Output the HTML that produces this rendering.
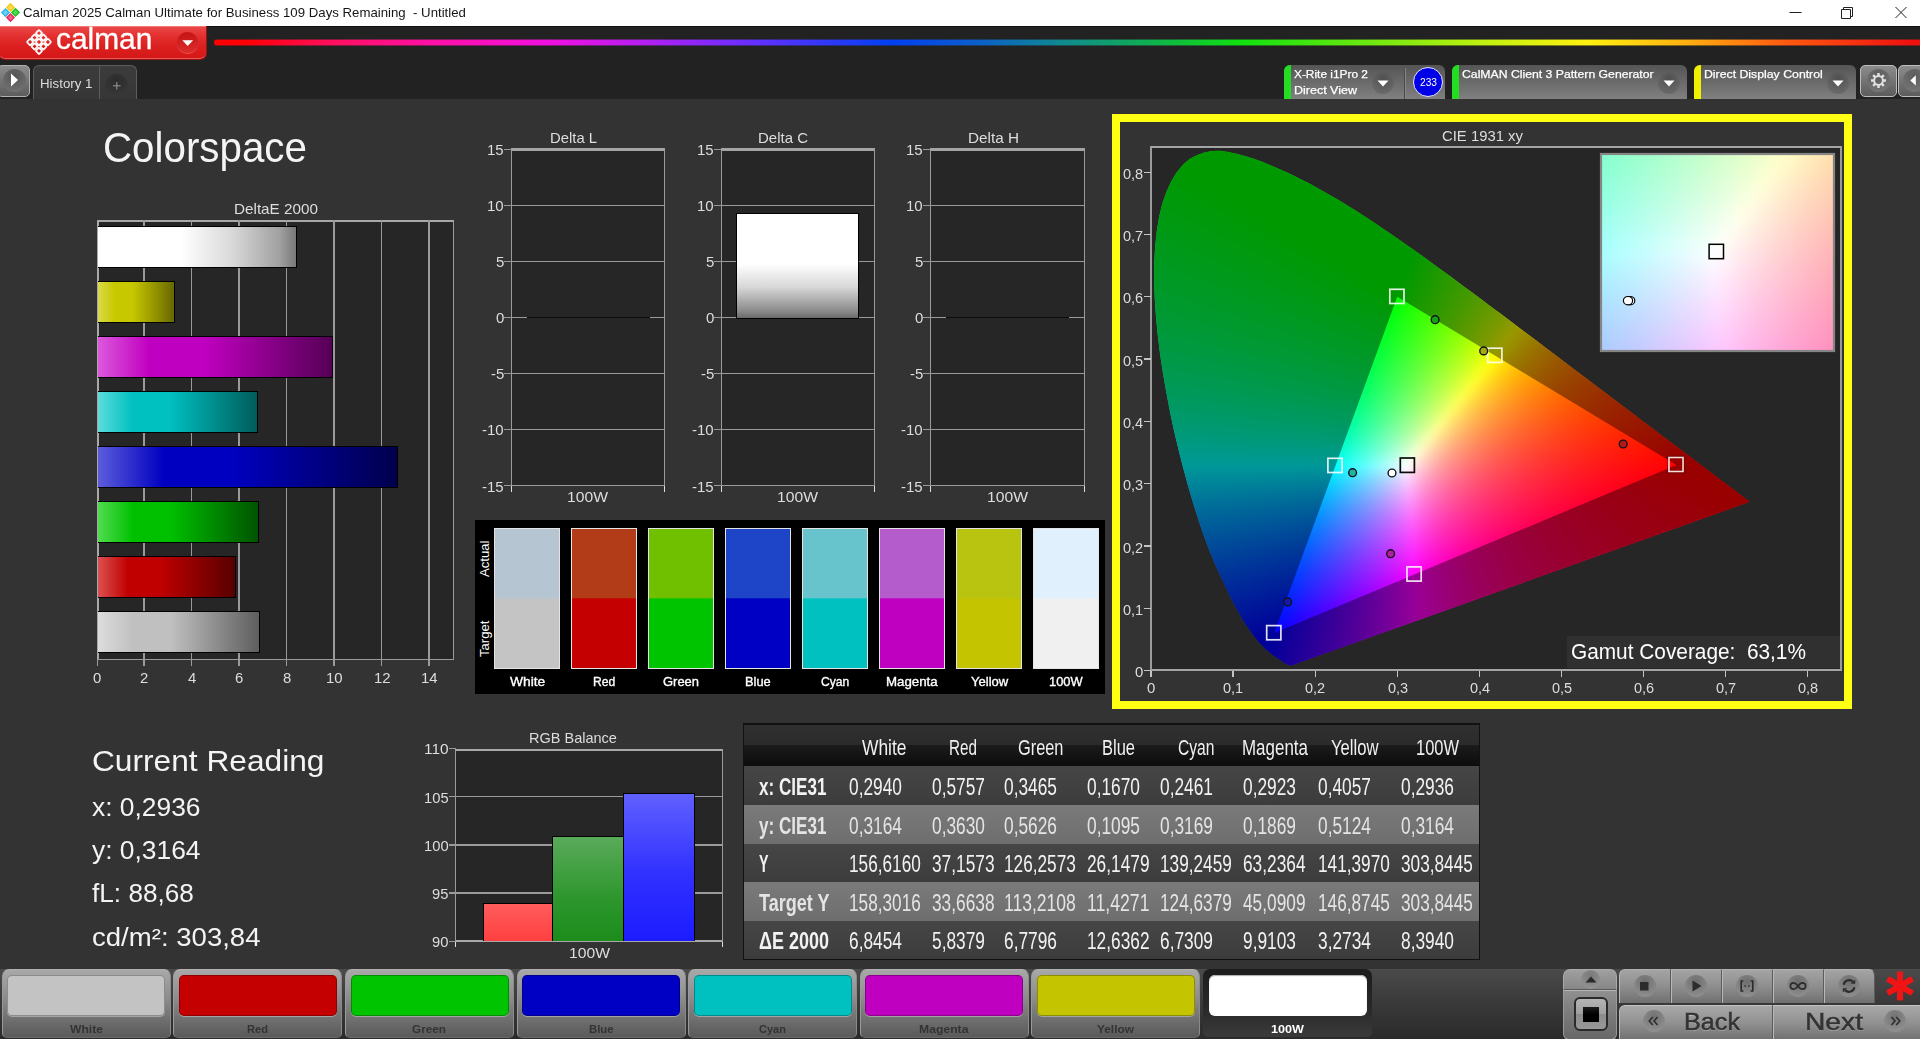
<!DOCTYPE html>
<html lang="en"><head><meta charset="utf-8"><title>Calman 2025 - Colorspace</title>
<style>
html,body{margin:0;padding:0}
body{width:1920px;height:1039px;overflow:hidden;background:#333;font-family:"Liberation Sans",sans-serif;position:relative}
.t{position:absolute;white-space:nowrap;line-height:1;transform-origin:0 0;display:block}
.a{position:absolute;display:block}
svg{position:absolute;display:block;overflow:visible}
</style></head>
<body>
<div class="a" style="left:0;top:0;width:1920px;height:26px;background:#fff"></div>
<svg style="left:0;top:0" width="24" height="26" viewBox="0 0 24 26"><path d="M10.5 2.8000000000000007L15.1 7.4L10.5 12.0L5.9 7.4Z" fill="#f6c81c"/><path d="M10.5 4.87L13.03 7.4L10.5 9.93L7.97 7.4Z" fill="#fadc50"/><path d="M5.5 8.0L10.1 12.6L5.5 17.2L0.9000000000000004 12.6Z" fill="#30b4ec"/><path d="M5.5 10.07L8.03 12.6L5.5 15.13L2.97 12.6Z" fill="#6cd0f4"/><path d="M15.5 7.800000000000001L20.1 12.4L15.5 17.0L10.9 12.4Z" fill="#20c028"/><path d="M15.5 9.87L18.03 12.4L15.5 14.93L12.97 12.4Z" fill="#50dc50"/><path d="M10.5 13.000000000000002L15.1 17.6L10.5 22.200000000000003L5.9 17.6Z" fill="#e82c5c"/><path d="M10.5 15.07L13.03 17.6L10.5 20.13L7.97 17.6Z" fill="#f4608c"/></svg>
<span class="t" style="left:23.3px;top:6.9px;font-size:12.57px;transform:scaleX(1.052);color:#161616;">Calman 2025 Calman Ultimate for Business 109 Days Remaining  - Untitled</span>
<svg style="left:1780px;top:0" width="140" height="26" viewBox="0 0 140 26" fill="none" stroke="#222" stroke-width="1"><path d="M9.5 12.5h12"/><path d="M61.5 9.5h9v9h-9z"/><path d="M63.5 9.5v-2h9v9h-2"/><path d="M115.5 7l11 11M126.5 7l-11 11"/></svg>
<div class="a" style="left:0;top:26px;width:1920px;height:73px;background:#222"></div>
<div class="a" style="left:0;top:26px;width:1920px;height:1px;background:#111"></div>
<div class="a" style="left:214px;top:39px;width:1706px;height:7px;background:linear-gradient(90deg,#ff0000 0px,#ff0008 36px,#ff1060 120px,#ff10a0 210px,#f010e0 335px,#b020f0 434px,#6030ff 546px,#0040f0 680px,#0c60c8 766px,#108890 846px,#10b050 936px,#10e010 1025px,#70e810 1159px,#c0f010 1271px,#fff010 1374px,#ffb010 1473px,#ff6010 1563px,#f01010 1697px,#f01010 1706px);opacity:.45;border-radius:3px 0 0 3px"></div>
<div class="a" style="left:214px;top:40px;width:1706px;height:5px;background:linear-gradient(90deg,#ff0000 0px,#ff0008 36px,#ff1060 120px,#ff10a0 210px,#f010e0 335px,#b020f0 434px,#6030ff 546px,#0040f0 680px,#0c60c8 766px,#108890 846px,#10b050 936px,#10e010 1025px,#70e810 1159px,#c0f010 1271px,#fff010 1374px,#ffb010 1473px,#ff6010 1563px,#f01010 1697px,#f01010 1706px);border-radius:3px 0 0 3px"></div>
<div class="a" style="left:-2px;top:26px;width:209px;height:33.8px;box-sizing:border-box;background:linear-gradient(#ec4a4a,#e43030 30%,#dc2020 60%,#d41616);border:1px solid #9c1010;border-top:none;border-radius:0 0 7px 7px;box-shadow:inset 0 1px 0 #f47878,inset 0 -1px 0 #e45c5c"></div>
<svg style="left:23.8px;top:27px" width="30" height="30" viewBox="-15 -15 30 30"><g transform="rotate(45)" fill="none" stroke="#fff" stroke-width="1.75"><rect x="-8.60" y="-8.60" width="4.6" height="4.6" rx="0.7"/><rect x="-8.60" y="-2.30" width="4.6" height="4.6" rx="0.7"/><rect x="-8.60" y="4.00" width="4.6" height="4.6" rx="0.7"/><rect x="-2.30" y="-8.60" width="4.6" height="4.6" rx="0.7"/><rect x="-2.30" y="-2.30" width="4.6" height="4.6" rx="0.7"/><rect x="-2.30" y="4.00" width="4.6" height="4.6" rx="0.7"/><rect x="4.00" y="-8.60" width="4.6" height="4.6" rx="0.7"/><rect x="4.00" y="-2.30" width="4.6" height="4.6" rx="0.7"/><rect x="4.00" y="4.00" width="4.6" height="4.6" rx="0.7"/></g></svg>
<span class="t" style="left:56.3px;top:25.2px;font-size:28.67px;transform:scaleX(1.042);color:#fff;-webkit-text-stroke:0.3px #fff;">calman</span>
<div class="a" style="left:177px;top:31.5px;width:21px;height:21px;border-radius:50%;background:linear-gradient(#c41414,#dc2c2c);box-shadow:0 1px 0 #ec5454"></div>
<svg style="left:182px;top:39.5px" width="12" height="7"><path d="M0.3 0.3h10.8l-5.4 5.6z" fill="#fff"/></svg>
<div class="a" style="left:-3px;top:65px;width:33.4px;height:31.8px;box-sizing:border-box;border:1.5px solid #b0b0b0;border-radius:5px;background:linear-gradient(#8c8c8c,#5c5c5c)"></div>
<div class="a" style="left:3px;top:69px;width:23px;height:23px;border-radius:50%;background:radial-gradient(circle at 50% 30%,#555,#777)"></div>
<svg style="left:10px;top:73px" width="10" height="14"><path d="M1 0.5v13l7-6.5z" fill="#fff"/></svg>
<div class="a" style="left:32.8px;top:65px;width:104.2px;height:34.2px;box-sizing:border-box;border:1.6px solid #5c5c5c;border-bottom:none;border-radius:6px 6px 0 0;background:linear-gradient(#3c3c3c,#363636)"></div>
<div class="a" style="left:98.5px;top:66px;width:1.6px;height:33px;background:#5c5c5c"></div>
<span class="t" style="left:40.0px;top:77.0px;font-size:13.27px;transform:scaleX(1.003);color:#ddd;">History 1</span>
<div class="a" style="left:105px;top:74px;width:23px;height:23px;border-radius:50%;background:radial-gradient(circle at 50% 30%,#2c2c2c,#3a3a3a)"></div>
<svg style="left:112.8px;top:81.7px" width="8" height="8" stroke="#9a9a9a" stroke-width="1"><path d="M3.8 0v7.6M0 3.8h7.6"/></svg>
<div class="a" style="left:1284px;top:65px;width:161px;height:34px;border-radius:6px 6px 0 0;background:linear-gradient(#555,#6a6a6a 50%,#808080);overflow:hidden"><div class="a" style="left:0;top:0;width:7px;height:34px;background:#22dd22"></div></div><div class="a" style="left:1372px;top:71.5px;width:22px;height:22px;border-radius:50%;background:radial-gradient(circle at 50% 30%,#505050,#707070)"></div><svg style="left:1377px;top:80px" width="12" height="7"><path d="M0.5 0.5h11l-5.5 6z" fill="#fff"/></svg>
<div class="a" style="left:1404px;top:68px;width:1px;height:31px;background:#4a4a4a"></div>
<div class="a" style="left:1405px;top:68px;width:1px;height:31px;background:#858585"></div>
<span class="t" style="left:1294.0px;top:68.7px;font-size:11.17px;transform:scaleX(1.064);color:#fff;-webkit-text-stroke:0.25px #fff;">X-Rite i1Pro 2</span>
<span class="t" style="left:1294.0px;top:85.1px;font-size:11.17px;transform:scaleX(1.119);color:#fff;-webkit-text-stroke:0.25px #fff;">Direct View</span>
<div class="a" style="left:1413px;top:67px;width:30px;height:30px;box-sizing:border-box;border-radius:50%;background:#0000e6;border:1.5px solid #e8e8ff"></div>
<span class="t" style="left:1419.5px;top:76.5px;font-size:11.17px;transform:scaleX(0.912);color:#fff;">233</span>
<div class="a" style="left:1452px;top:65px;width:235px;height:34px;border-radius:6px 6px 0 0;background:linear-gradient(#555,#6a6a6a 50%,#808080);overflow:hidden"><div class="a" style="left:0;top:0;width:7px;height:34px;background:#22dd22"></div></div><div class="a" style="left:1658px;top:71.5px;width:22px;height:22px;border-radius:50%;background:radial-gradient(circle at 50% 30%,#505050,#707070)"></div><svg style="left:1663px;top:80px" width="12" height="7"><path d="M0.5 0.5h11l-5.5 6z" fill="#fff"/></svg>
<span class="t" style="left:1462.0px;top:68.7px;font-size:11.17px;transform:scaleX(1.096);color:#fff;-webkit-text-stroke:0.25px #fff;">CalMAN Client 3 Pattern Generator</span>
<div class="a" style="left:1694px;top:65px;width:162px;height:34px;border-radius:6px 6px 0 0;background:linear-gradient(#555,#6a6a6a 50%,#808080);overflow:hidden"><div class="a" style="left:0;top:0;width:7px;height:34px;background:#f0f000"></div></div><div class="a" style="left:1827px;top:71.5px;width:22px;height:22px;border-radius:50%;background:radial-gradient(circle at 50% 30%,#505050,#707070)"></div><svg style="left:1832px;top:80px" width="12" height="7"><path d="M0.5 0.5h11l-5.5 6z" fill="#fff"/></svg>
<span class="t" style="left:1704.0px;top:68.7px;font-size:11.17px;transform:scaleX(1.101);color:#fff;-webkit-text-stroke:0.25px #fff;">Direct Display Control</span>
<div class="a" style="left:1860px;top:65px;width:37px;height:32px;box-sizing:border-box;border:1px solid #bdbdbd;border-radius:5px;background:linear-gradient(#8c8c8c,#5c5c5c)"></div>
<div class="a" style="left:1867px;top:69px;width:23px;height:23px;border-radius:50%;background:radial-gradient(circle at 50% 30%,#5c5c5c,#7a7a7a)"></div>
<svg style="left:1868px;top:70px" width="21" height="21" viewBox="-10.5 -10.5 21 21"><g fill="#e0e0e0"><rect x="-1.25" y="-7.5" width="2.5" height="3.4" transform="rotate(0)"/><rect x="-1.25" y="-7.5" width="2.5" height="3.4" transform="rotate(45)"/><rect x="-1.25" y="-7.5" width="2.5" height="3.4" transform="rotate(90)"/><rect x="-1.25" y="-7.5" width="2.5" height="3.4" transform="rotate(135)"/><rect x="-1.25" y="-7.5" width="2.5" height="3.4" transform="rotate(180)"/><rect x="-1.25" y="-7.5" width="2.5" height="3.4" transform="rotate(225)"/><rect x="-1.25" y="-7.5" width="2.5" height="3.4" transform="rotate(270)"/><rect x="-1.25" y="-7.5" width="2.5" height="3.4" transform="rotate(315)"/></g><circle r="4.4" fill="none" stroke="#e0e0e0" stroke-width="2"/></svg>
<div class="a" style="left:1898px;top:65px;width:30px;height:32px;box-sizing:border-box;border:1px solid #bdbdbd;border-radius:5px;background:linear-gradient(#8c8c8c,#5c5c5c)"></div>
<div class="a" style="left:1903px;top:69px;width:23px;height:23px;border-radius:50%;background:radial-gradient(circle at 50% 30%,#5c5c5c,#7a7a7a)"></div>
<svg style="left:1910.3px;top:75.3px" width="7" height="11"><path d="M5.8 0.3v10.2l-5.5-5.1z" fill="#fff"/></svg>
<span class="t" style="left:103.0px;top:127.0px;font-size:41.62px;transform:scaleX(0.969);color:#f4f4f4;">Colorspace</span>
<span class="t" style="left:233.8px;top:202.2px;font-size:14.94px;transform:scaleX(1.021);color:#ddd;">DeltaE 2000</span>
<div class="a" style="left:97px;top:220px;width:357px;height:440px;background:#262626;box-sizing:border-box;border:1px solid #9a9a9a;border-top:2px solid #a8a8a8;border-left:2px solid #a8a8a8"></div>
<div class="a" style="left:143.2px;top:220px;width:1.5px;height:446px;background:#9a9a9a"></div>
<div class="a" style="left:190.8px;top:220px;width:1.5px;height:446px;background:#9a9a9a"></div>
<div class="a" style="left:238.2px;top:220px;width:1.5px;height:446px;background:#9a9a9a"></div>
<div class="a" style="left:285.8px;top:220px;width:1.5px;height:446px;background:#9a9a9a"></div>
<div class="a" style="left:333.2px;top:220px;width:1.5px;height:446px;background:#9a9a9a"></div>
<div class="a" style="left:380.8px;top:220px;width:1.5px;height:446px;background:#9a9a9a"></div>
<div class="a" style="left:428.2px;top:220px;width:1.5px;height:446px;background:#9a9a9a"></div>
<div class="a" style="left:97px;top:659px;width:1px;height:7px;background:#9a9a9a"></div>
<span class="t" style="left:92.6px;top:670.2px;font-size:15.36px;transform:scaleX(0.971);color:#ddd;">0</span>
<span class="t" style="left:140.2px;top:670.2px;font-size:15.36px;transform:scaleX(0.971);color:#ddd;">2</span>
<span class="t" style="left:187.7px;top:670.2px;font-size:15.36px;transform:scaleX(0.971);color:#ddd;">4</span>
<span class="t" style="left:235.2px;top:670.2px;font-size:15.36px;transform:scaleX(0.971);color:#ddd;">6</span>
<span class="t" style="left:282.7px;top:670.2px;font-size:15.36px;transform:scaleX(0.971);color:#ddd;">8</span>
<span class="t" style="left:326.0px;top:670.2px;font-size:15.36px;transform:scaleX(0.971);color:#ddd;">10</span>
<span class="t" style="left:373.5px;top:670.2px;font-size:15.36px;transform:scaleX(0.971);color:#ddd;">12</span>
<span class="t" style="left:421.0px;top:670.2px;font-size:15.36px;transform:scaleX(0.971);color:#ddd;">14</span>
<div class="a" style="left:98px;top:226.0px;width:199.1px;height:42.3px;box-sizing:border-box;border:1.8px solid #000;border-left:none;background:linear-gradient(90deg,#fff 0%,#fff 42%,#d8d8d8 68%,#a0a0a0 92%,#787878 100%)"></div>
<div class="a" style="left:98px;top:281.0px;width:77.4px;height:42.3px;box-sizing:border-box;border:1.8px solid #000;border-left:none;background:linear-gradient(90deg,#dada4c 0%,#c8c800 22%,#c8c800 45%,#686800 100%)"></div>
<div class="a" style="left:98px;top:336.0px;width:235.1px;height:42.3px;box-sizing:border-box;border:1.8px solid #000;border-left:none;background:linear-gradient(90deg,#dc58dc 0%,#c000c0 22%,#c000c0 45%,#560056 100%)"></div>
<div class="a" style="left:98px;top:391.0px;width:159.6px;height:42.3px;box-sizing:border-box;border:1.8px solid #000;border-left:none;background:linear-gradient(90deg,#5cdcdc 0%,#00c0c0 22%,#00c0c0 45%,#005c5c 100%)"></div>
<div class="a" style="left:98px;top:446.0px;width:299.8px;height:42.3px;box-sizing:border-box;border:1.8px solid #000;border-left:none;background:linear-gradient(90deg,#5c5cdc 0%,#0000c0 22%,#0000c0 45%,#00004c 100%)"></div>
<div class="a" style="left:98px;top:501.0px;width:160.7px;height:42.3px;box-sizing:border-box;border:1.8px solid #000;border-left:none;background:linear-gradient(90deg,#50dc50 0%,#00c000 22%,#00c000 45%,#005400 100%)"></div>
<div class="a" style="left:98px;top:556.0px;width:138.4px;height:42.3px;box-sizing:border-box;border:1.8px solid #000;border-left:none;background:linear-gradient(90deg,#dc5050 0%,#c00000 22%,#c00000 45%,#580000 100%)"></div>
<div class="a" style="left:98px;top:611.0px;width:162.3px;height:42.3px;box-sizing:border-box;border:1.8px solid #000;border-left:none;background:linear-gradient(90deg,#dcdcdc 0%,#c0c0c0 22%,#c0c0c0 45%,#5e5e5e 100%)"></div>
<span class="t" style="left:92.0px;top:745.8px;font-size:29.33px;transform:scaleX(1.080);color:#f4f4f4;">Current Reading</span>
<span class="t" style="left:92.0px;top:794.9px;font-size:25.14px;transform:scaleX(1.050);color:#f4f4f4;">x: 0,2936</span>
<span class="t" style="left:92.0px;top:838.2px;font-size:25.14px;transform:scaleX(1.050);color:#f4f4f4;">y: 0,3164</span>
<span class="t" style="left:92.0px;top:881.2px;font-size:25.14px;transform:scaleX(1.042);color:#f4f4f4;">fL: 88,68</span>
<span class="t" style="left:92.0px;top:924.7px;font-size:25.14px;transform:scaleX(1.097);color:#f4f4f4;">cd/m²: 303,84</span>
<span class="t" style="left:529.0px;top:731.1px;font-size:14.80px;transform:scaleX(0.981);color:#ddd;">RGB Balance</span>
<div class="a" style="left:455px;top:749px;width:268px;height:193px;background:#262626;box-sizing:border-box;border:1px solid #9a9a9a;border-top:2px solid #a8a8a8;border-bottom:2px solid #a8a8a8"></div>
<div class="a" style="left:455px;top:892.4px;width:268px;height:1.4px;background:#9a9a9a"></div>
<div class="a" style="left:455px;top:844.2px;width:268px;height:1.4px;background:#9a9a9a"></div>
<div class="a" style="left:455px;top:796.0px;width:268px;height:1.4px;background:#9a9a9a"></div>
<div class="a" style="left:449px;top:940.5px;width:7px;height:1.4px;background:#9a9a9a"></div>
<span class="t" style="left:432.1px;top:934.0px;font-size:15.08px;transform:scaleX(0.977);color:#ddd;">90</span>
<div class="a" style="left:449px;top:892.4px;width:7px;height:1.4px;background:#9a9a9a"></div>
<span class="t" style="left:432.1px;top:885.9px;font-size:15.08px;transform:scaleX(0.977);color:#ddd;">95</span>
<div class="a" style="left:449px;top:844.2px;width:7px;height:1.4px;background:#9a9a9a"></div>
<span class="t" style="left:423.9px;top:837.7px;font-size:15.08px;transform:scaleX(0.977);color:#ddd;">100</span>
<div class="a" style="left:449px;top:796.0px;width:7px;height:1.4px;background:#9a9a9a"></div>
<span class="t" style="left:423.9px;top:789.6px;font-size:15.08px;transform:scaleX(0.977);color:#ddd;">105</span>
<div class="a" style="left:449px;top:747.9px;width:7px;height:1.4px;background:#9a9a9a"></div>
<span class="t" style="left:423.9px;top:741.4px;font-size:15.08px;transform:scaleX(1.023);color:#ddd;">110</span>
<div class="a" style="left:455px;top:942px;width:1px;height:5px;background:#ddd"></div>
<div class="a" style="left:722px;top:942px;width:1px;height:5px;background:#ddd"></div>
<span class="t" style="left:568.8px;top:946.3px;font-size:14.94px;transform:scaleX(1.050);color:#ddd;">100W</span>
<div class="a" style="left:482.5px;top:903px;width:70.0px;height:37.5px;box-sizing:border-box;border:1.5px solid #000;border-bottom:none;background:linear-gradient(#ff5c5c,#ff4040)"></div>
<div class="a" style="left:551.5px;top:836px;width:72.5px;height:104.5px;box-sizing:border-box;border:1.5px solid #000;border-bottom:none;background:linear-gradient(#5aaa5a,#2c962c 60%,#1c8c1c)"></div>
<div class="a" style="left:623px;top:793px;width:72.0px;height:147.5px;box-sizing:border-box;border:1.5px solid #000;border-bottom:none;background:linear-gradient(#6060ff,#3030ff 55%,#1c1cff)"></div>
<span class="t" style="left:550.0px;top:130.5px;font-size:14.94px;transform:scaleX(0.993);color:#ddd;">Delta L</span>
<div class="a" style="left:511px;top:148px;width:154px;height:338px;background:#262626;box-sizing:border-box;border:1.6px solid #9a9a9a;border-top:3px solid #a4a4a4"></div>
<div class="a" style="left:511px;top:429.0px;width:154px;height:1.4px;background:#9a9a9a"></div>
<div class="a" style="left:511px;top:372.9px;width:154px;height:1.4px;background:#9a9a9a"></div>
<div class="a" style="left:511px;top:316.8px;width:154px;height:1.4px;background:#9a9a9a"></div>
<div class="a" style="left:511px;top:260.7px;width:154px;height:1.4px;background:#9a9a9a"></div>
<div class="a" style="left:511px;top:204.6px;width:154px;height:1.4px;background:#9a9a9a"></div>
<div class="a" style="left:504px;top:485.1px;width:8px;height:1.4px;background:#9a9a9a"></div>
<span class="t" style="left:482.1px;top:478.5px;font-size:15.08px;transform:scaleX(0.994);color:#ddd;">-15</span>
<div class="a" style="left:504px;top:429.0px;width:8px;height:1.4px;background:#9a9a9a"></div>
<span class="t" style="left:482.1px;top:422.4px;font-size:15.08px;transform:scaleX(0.994);color:#ddd;">-10</span>
<div class="a" style="left:504px;top:372.9px;width:8px;height:1.4px;background:#9a9a9a"></div>
<span class="t" style="left:490.5px;top:366.3px;font-size:15.08px;transform:scaleX(0.994);color:#ddd;">-5</span>
<div class="a" style="left:504px;top:316.8px;width:8px;height:1.4px;background:#9a9a9a"></div>
<span class="t" style="left:495.5px;top:310.2px;font-size:15.08px;transform:scaleX(0.994);color:#ddd;">0</span>
<div class="a" style="left:504px;top:260.7px;width:8px;height:1.4px;background:#9a9a9a"></div>
<span class="t" style="left:495.5px;top:254.1px;font-size:15.08px;transform:scaleX(0.994);color:#ddd;">5</span>
<div class="a" style="left:504px;top:204.6px;width:8px;height:1.4px;background:#9a9a9a"></div>
<span class="t" style="left:487.1px;top:198.0px;font-size:15.08px;transform:scaleX(0.994);color:#ddd;">10</span>
<div class="a" style="left:504px;top:148.5px;width:8px;height:1.4px;background:#9a9a9a"></div>
<span class="t" style="left:487.1px;top:141.9px;font-size:15.08px;transform:scaleX(0.994);color:#ddd;">15</span>
<div class="a" style="left:511px;top:486px;width:1px;height:6px;background:#ddd"></div>
<div class="a" style="left:664px;top:486px;width:1px;height:6px;background:#ddd"></div>
<span class="t" style="left:567.0px;top:489.5px;font-size:14.80px;transform:scaleX(1.060);color:#ddd;">100W</span>
<div class="a" style="left:526.5px;top:316.7px;width:123px;height:1.6px;background:#0c0c0c"></div>
<span class="t" style="left:758.0px;top:130.5px;font-size:14.94px;transform:scaleX(1.003);color:#ddd;">Delta C</span>
<div class="a" style="left:721px;top:148px;width:154px;height:338px;background:#262626;box-sizing:border-box;border:1.6px solid #9a9a9a;border-top:3px solid #a4a4a4"></div>
<div class="a" style="left:721px;top:429.0px;width:154px;height:1.4px;background:#9a9a9a"></div>
<div class="a" style="left:721px;top:372.9px;width:154px;height:1.4px;background:#9a9a9a"></div>
<div class="a" style="left:721px;top:316.8px;width:154px;height:1.4px;background:#9a9a9a"></div>
<div class="a" style="left:721px;top:260.7px;width:154px;height:1.4px;background:#9a9a9a"></div>
<div class="a" style="left:721px;top:204.6px;width:154px;height:1.4px;background:#9a9a9a"></div>
<div class="a" style="left:714px;top:485.1px;width:8px;height:1.4px;background:#9a9a9a"></div>
<span class="t" style="left:692.1px;top:478.5px;font-size:15.08px;transform:scaleX(0.994);color:#ddd;">-15</span>
<div class="a" style="left:714px;top:429.0px;width:8px;height:1.4px;background:#9a9a9a"></div>
<span class="t" style="left:692.1px;top:422.4px;font-size:15.08px;transform:scaleX(0.994);color:#ddd;">-10</span>
<div class="a" style="left:714px;top:372.9px;width:8px;height:1.4px;background:#9a9a9a"></div>
<span class="t" style="left:700.5px;top:366.3px;font-size:15.08px;transform:scaleX(0.994);color:#ddd;">-5</span>
<div class="a" style="left:714px;top:316.8px;width:8px;height:1.4px;background:#9a9a9a"></div>
<span class="t" style="left:705.5px;top:310.2px;font-size:15.08px;transform:scaleX(0.994);color:#ddd;">0</span>
<div class="a" style="left:714px;top:260.7px;width:8px;height:1.4px;background:#9a9a9a"></div>
<span class="t" style="left:705.5px;top:254.1px;font-size:15.08px;transform:scaleX(0.994);color:#ddd;">5</span>
<div class="a" style="left:714px;top:204.6px;width:8px;height:1.4px;background:#9a9a9a"></div>
<span class="t" style="left:697.1px;top:198.0px;font-size:15.08px;transform:scaleX(0.994);color:#ddd;">10</span>
<div class="a" style="left:714px;top:148.5px;width:8px;height:1.4px;background:#9a9a9a"></div>
<span class="t" style="left:697.1px;top:141.9px;font-size:15.08px;transform:scaleX(0.994);color:#ddd;">15</span>
<div class="a" style="left:721px;top:486px;width:1px;height:6px;background:#ddd"></div>
<div class="a" style="left:874px;top:486px;width:1px;height:6px;background:#ddd"></div>
<span class="t" style="left:777.0px;top:489.5px;font-size:14.80px;transform:scaleX(1.060);color:#ddd;">100W</span>
<div class="a" style="left:736px;top:212.6px;width:123px;height:106px;box-sizing:border-box;border:1.6px solid #000;background:linear-gradient(#fff 0%,#fff 48%,#d8d8d8 70%,#8c8c8c 93%,#6a6a6a 100%)"></div>
<span class="t" style="left:967.5px;top:130.5px;font-size:14.94px;transform:scaleX(1.023);color:#ddd;">Delta H</span>
<div class="a" style="left:930px;top:148px;width:155px;height:338px;background:#262626;box-sizing:border-box;border:1.6px solid #9a9a9a;border-top:3px solid #a4a4a4"></div>
<div class="a" style="left:930px;top:429.0px;width:155px;height:1.4px;background:#9a9a9a"></div>
<div class="a" style="left:930px;top:372.9px;width:155px;height:1.4px;background:#9a9a9a"></div>
<div class="a" style="left:930px;top:316.8px;width:155px;height:1.4px;background:#9a9a9a"></div>
<div class="a" style="left:930px;top:260.7px;width:155px;height:1.4px;background:#9a9a9a"></div>
<div class="a" style="left:930px;top:204.6px;width:155px;height:1.4px;background:#9a9a9a"></div>
<div class="a" style="left:923px;top:485.1px;width:8px;height:1.4px;background:#9a9a9a"></div>
<span class="t" style="left:901.1px;top:478.5px;font-size:15.08px;transform:scaleX(0.994);color:#ddd;">-15</span>
<div class="a" style="left:923px;top:429.0px;width:8px;height:1.4px;background:#9a9a9a"></div>
<span class="t" style="left:901.1px;top:422.4px;font-size:15.08px;transform:scaleX(0.994);color:#ddd;">-10</span>
<div class="a" style="left:923px;top:372.9px;width:8px;height:1.4px;background:#9a9a9a"></div>
<span class="t" style="left:909.5px;top:366.3px;font-size:15.08px;transform:scaleX(0.994);color:#ddd;">-5</span>
<div class="a" style="left:923px;top:316.8px;width:8px;height:1.4px;background:#9a9a9a"></div>
<span class="t" style="left:914.5px;top:310.2px;font-size:15.08px;transform:scaleX(0.994);color:#ddd;">0</span>
<div class="a" style="left:923px;top:260.7px;width:8px;height:1.4px;background:#9a9a9a"></div>
<span class="t" style="left:914.5px;top:254.1px;font-size:15.08px;transform:scaleX(0.994);color:#ddd;">5</span>
<div class="a" style="left:923px;top:204.6px;width:8px;height:1.4px;background:#9a9a9a"></div>
<span class="t" style="left:906.1px;top:198.0px;font-size:15.08px;transform:scaleX(0.994);color:#ddd;">10</span>
<div class="a" style="left:923px;top:148.5px;width:8px;height:1.4px;background:#9a9a9a"></div>
<span class="t" style="left:906.1px;top:141.9px;font-size:15.08px;transform:scaleX(0.994);color:#ddd;">15</span>
<div class="a" style="left:930px;top:486px;width:1px;height:6px;background:#ddd"></div>
<div class="a" style="left:1084px;top:486px;width:1px;height:6px;background:#ddd"></div>
<span class="t" style="left:986.5px;top:489.5px;font-size:14.80px;transform:scaleX(1.060);color:#ddd;">100W</span>
<div class="a" style="left:945.5px;top:316.7px;width:123px;height:1.6px;background:#0c0c0c"></div>
<div class="a" style="left:475px;top:520px;width:630px;height:174px;background:#000"></div>
<div class="a" style="left:494px;top:527.8px;width:66.2px;height:141.2px;box-sizing:border-box;border:1.5px solid #e4e4e4;background:linear-gradient(#b5c5d1 0%,#b5c5d1 49.3%,#c4c4c4 50.3%,#c4c4c4 100%)"></div>
<span class="t" style="left:509.6px;top:674.6px;font-size:12.99px;transform:scaleX(1.063);color:#fff;-webkit-text-stroke:0.35px #fff;">White</span>
<div class="a" style="left:571px;top:527.8px;width:66.2px;height:141.2px;box-sizing:border-box;border:1.5px solid #e4e4e4;background:linear-gradient(#b23c18 0%,#b23c18 49.3%,#c40000 50.3%,#c40000 100%)"></div>
<span class="t" style="left:593.1px;top:674.6px;font-size:12.99px;transform:scaleX(0.936);color:#fff;-webkit-text-stroke:0.35px #fff;">Red</span>
<div class="a" style="left:648px;top:527.8px;width:66.2px;height:141.2px;box-sizing:border-box;border:1.5px solid #e4e4e4;background:linear-gradient(#70c000 0%,#70c000 49.3%,#00c400 50.3%,#00c400 100%)"></div>
<span class="t" style="left:663.2px;top:674.6px;font-size:12.99px;transform:scaleX(0.997);color:#fff;-webkit-text-stroke:0.35px #fff;">Green</span>
<div class="a" style="left:725px;top:527.8px;width:66.2px;height:141.2px;box-sizing:border-box;border:1.5px solid #e4e4e4;background:linear-gradient(#1e44c8 0%,#1e44c8 49.3%,#0000c4 50.3%,#0000c4 100%)"></div>
<span class="t" style="left:745.4px;top:674.6px;font-size:12.99px;transform:scaleX(0.989);color:#fff;-webkit-text-stroke:0.35px #fff;">Blue</span>
<div class="a" style="left:802px;top:527.8px;width:66.2px;height:141.2px;box-sizing:border-box;border:1.5px solid #e4e4e4;background:linear-gradient(#68c4cc 0%,#68c4cc 49.3%,#00c0c0 50.3%,#00c0c0 100%)"></div>
<span class="t" style="left:821.1px;top:674.6px;font-size:12.99px;transform:scaleX(0.933);color:#fff;-webkit-text-stroke:0.35px #fff;">Cyan</span>
<div class="a" style="left:879px;top:527.8px;width:66.2px;height:141.2px;box-sizing:border-box;border:1.5px solid #e4e4e4;background:linear-gradient(#b45ccc 0%,#b45ccc 49.3%,#c000c0 50.3%,#c000c0 100%)"></div>
<span class="t" style="left:886.4px;top:674.6px;font-size:12.99px;transform:scaleX(1.023);color:#fff;-webkit-text-stroke:0.35px #fff;">Magenta</span>
<div class="a" style="left:956px;top:527.8px;width:66.2px;height:141.2px;box-sizing:border-box;border:1.5px solid #e4e4e4;background:linear-gradient(#b8c410 0%,#b8c410 49.3%,#c4c400 50.3%,#c4c400 100%)"></div>
<span class="t" style="left:970.6px;top:674.6px;font-size:12.99px;transform:scaleX(1.006);color:#fff;-webkit-text-stroke:0.35px #fff;">Yellow</span>
<div class="a" style="left:1033px;top:527.8px;width:66.2px;height:141.2px;box-sizing:border-box;border:1.5px solid #e4e4e4;background:linear-gradient(#e0f0fc 0%,#e0f0fc 49.3%,#f0f0f0 50.3%,#f0f0f0 100%)"></div>
<span class="t" style="left:1049.4px;top:674.6px;font-size:12.99px;transform:scaleX(0.993);color:#fff;-webkit-text-stroke:0.35px #fff;">100W</span>
<span class="t" style="left:478.2px;top:577.2px;font-size:13.2px;color:#fff;transform:rotate(-90deg) scaleX(0.995);transform-origin:0 0">Actual</span>
<span class="t" style="left:478.2px;top:656.5px;font-size:13.2px;color:#fff;transform:rotate(-90deg) scaleX(0.995);transform-origin:0 0">Target</span>
<div class="a" style="left:744px;top:724px;width:735px;height:42px;background:linear-gradient(#303030 0%,#2b2b2b 50%,#1b1b1b 50%,#0c0c0c 100%)"></div>
<div class="a" style="left:744px;top:766px;width:735px;height:39px;background:linear-gradient(#464646,#3c3c3c)"></div>
<div class="a" style="left:744px;top:805px;width:735px;height:38.5px;background:linear-gradient(#7a7a7a,#6e6e6e)"></div>
<div class="a" style="left:744px;top:843.5px;width:735px;height:38.5px;background:linear-gradient(#464646,#3c3c3c)"></div>
<div class="a" style="left:744px;top:882px;width:735px;height:39px;background:linear-gradient(#7a7a7a,#6e6e6e)"></div>
<div class="a" style="left:744px;top:921px;width:735px;height:37.5px;background:linear-gradient(#464646,#3c3c3c)"></div>
<div class="a" style="left:743px;top:723px;width:737px;height:236.5px;box-sizing:border-box;border:1.5px solid #111;border-top:2px solid #111"></div>
<span class="t" style="left:862.4px;top:736.8px;font-size:21.23px;transform:scaleX(0.820);color:#f0f0f0;">White</span>
<span class="t" style="left:948.6px;top:736.8px;font-size:21.23px;transform:scaleX(0.719);color:#f0f0f0;">Red</span>
<span class="t" style="left:1017.5px;top:736.8px;font-size:21.23px;transform:scaleX(0.771);color:#f0f0f0;">Green</span>
<span class="t" style="left:1101.7px;top:736.8px;font-size:21.23px;transform:scaleX(0.777);color:#f0f0f0;">Blue</span>
<span class="t" style="left:1177.5px;top:736.8px;font-size:21.23px;transform:scaleX(0.736);color:#f0f0f0;">Cyan</span>
<span class="t" style="left:1242.0px;top:736.8px;font-size:21.23px;transform:scaleX(0.799);color:#f0f0f0;">Magenta</span>
<span class="t" style="left:1330.8px;top:736.8px;font-size:21.23px;transform:scaleX(0.784);color:#f0f0f0;">Yellow</span>
<span class="t" style="left:1415.5px;top:736.8px;font-size:21.23px;transform:scaleX(0.775);color:#f0f0f0;">100W</span>
<span class="t" style="left:758.8px;top:775.2px;font-size:24.02px;transform:scaleX(0.712);color:#f2f2f2;font-weight:bold;">x: CIE31</span>
<span class="t" style="left:848.6px;top:775.2px;font-size:24.02px;transform:scaleX(0.721);color:#f2f2f2;">0,2940</span>
<span class="t" style="left:931.8px;top:775.2px;font-size:24.02px;transform:scaleX(0.721);color:#f2f2f2;">0,5757</span>
<span class="t" style="left:1004.2px;top:775.2px;font-size:24.02px;transform:scaleX(0.721);color:#f2f2f2;">0,3465</span>
<span class="t" style="left:1086.5px;top:775.2px;font-size:24.02px;transform:scaleX(0.721);color:#f2f2f2;">0,1670</span>
<span class="t" style="left:1159.8px;top:775.2px;font-size:24.02px;transform:scaleX(0.721);color:#f2f2f2;">0,2461</span>
<span class="t" style="left:1242.5px;top:775.2px;font-size:24.02px;transform:scaleX(0.721);color:#f2f2f2;">0,2923</span>
<span class="t" style="left:1318.0px;top:775.2px;font-size:24.02px;transform:scaleX(0.721);color:#f2f2f2;">0,4057</span>
<span class="t" style="left:1401.3px;top:775.2px;font-size:24.02px;transform:scaleX(0.721);color:#f2f2f2;">0,2936</span>
<span class="t" style="left:758.8px;top:814.0px;font-size:24.02px;transform:scaleX(0.712);color:#e4e4e4;font-weight:bold;">y: CIE31</span>
<span class="t" style="left:848.6px;top:814.0px;font-size:24.02px;transform:scaleX(0.721);color:#e4e4e4;">0,3164</span>
<span class="t" style="left:931.8px;top:814.0px;font-size:24.02px;transform:scaleX(0.721);color:#e4e4e4;">0,3630</span>
<span class="t" style="left:1004.2px;top:814.0px;font-size:24.02px;transform:scaleX(0.721);color:#e4e4e4;">0,5626</span>
<span class="t" style="left:1086.5px;top:814.0px;font-size:24.02px;transform:scaleX(0.721);color:#e4e4e4;">0,1095</span>
<span class="t" style="left:1159.8px;top:814.0px;font-size:24.02px;transform:scaleX(0.721);color:#e4e4e4;">0,3169</span>
<span class="t" style="left:1242.5px;top:814.0px;font-size:24.02px;transform:scaleX(0.721);color:#e4e4e4;">0,1869</span>
<span class="t" style="left:1318.0px;top:814.0px;font-size:24.02px;transform:scaleX(0.721);color:#e4e4e4;">0,5124</span>
<span class="t" style="left:1401.3px;top:814.0px;font-size:24.02px;transform:scaleX(0.721);color:#e4e4e4;">0,3164</span>
<span class="t" style="left:758.8px;top:852.3px;font-size:24.02px;transform:scaleX(0.593);color:#f2f2f2;font-weight:bold;">Y</span>
<span class="t" style="left:848.6px;top:852.3px;font-size:24.02px;transform:scaleX(0.717);color:#f2f2f2;">156,6160</span>
<span class="t" style="left:931.8px;top:852.3px;font-size:24.02px;transform:scaleX(0.720);color:#f2f2f2;">37,1573</span>
<span class="t" style="left:1004.2px;top:852.3px;font-size:24.02px;transform:scaleX(0.717);color:#f2f2f2;">126,2573</span>
<span class="t" style="left:1086.5px;top:852.3px;font-size:24.02px;transform:scaleX(0.720);color:#f2f2f2;">26,1479</span>
<span class="t" style="left:1159.8px;top:852.3px;font-size:24.02px;transform:scaleX(0.717);color:#f2f2f2;">139,2459</span>
<span class="t" style="left:1242.5px;top:852.3px;font-size:24.02px;transform:scaleX(0.720);color:#f2f2f2;">63,2364</span>
<span class="t" style="left:1318.0px;top:852.3px;font-size:24.02px;transform:scaleX(0.717);color:#f2f2f2;">141,3970</span>
<span class="t" style="left:1401.3px;top:852.3px;font-size:24.02px;transform:scaleX(0.717);color:#f2f2f2;">303,8445</span>
<span class="t" style="left:758.8px;top:890.6px;font-size:24.02px;transform:scaleX(0.751);color:#e4e4e4;font-weight:bold;">Target Y</span>
<span class="t" style="left:848.6px;top:890.6px;font-size:24.02px;transform:scaleX(0.717);color:#e4e4e4;">158,3016</span>
<span class="t" style="left:931.8px;top:890.6px;font-size:24.02px;transform:scaleX(0.720);color:#e4e4e4;">33,6638</span>
<span class="t" style="left:1004.2px;top:890.6px;font-size:24.02px;transform:scaleX(0.730);color:#e4e4e4;">113,2108</span>
<span class="t" style="left:1086.5px;top:890.6px;font-size:24.02px;transform:scaleX(0.735);color:#e4e4e4;">11,4271</span>
<span class="t" style="left:1159.8px;top:890.6px;font-size:24.02px;transform:scaleX(0.717);color:#e4e4e4;">124,6379</span>
<span class="t" style="left:1242.5px;top:890.6px;font-size:24.02px;transform:scaleX(0.720);color:#e4e4e4;">45,0909</span>
<span class="t" style="left:1318.0px;top:890.6px;font-size:24.02px;transform:scaleX(0.717);color:#e4e4e4;">146,8745</span>
<span class="t" style="left:1401.3px;top:890.6px;font-size:24.02px;transform:scaleX(0.717);color:#e4e4e4;">303,8445</span>
<span class="t" style="left:758.8px;top:929.4px;font-size:24.02px;transform:scaleX(0.749);color:#f2f2f2;font-weight:bold;">ΔE 2000</span>
<span class="t" style="left:848.6px;top:929.4px;font-size:24.02px;transform:scaleX(0.721);color:#f2f2f2;">6,8454</span>
<span class="t" style="left:931.8px;top:929.4px;font-size:24.02px;transform:scaleX(0.721);color:#f2f2f2;">5,8379</span>
<span class="t" style="left:1004.2px;top:929.4px;font-size:24.02px;transform:scaleX(0.721);color:#f2f2f2;">6,7796</span>
<span class="t" style="left:1086.5px;top:929.4px;font-size:24.02px;transform:scaleX(0.720);color:#f2f2f2;">12,6362</span>
<span class="t" style="left:1159.8px;top:929.4px;font-size:24.02px;transform:scaleX(0.721);color:#f2f2f2;">6,7309</span>
<span class="t" style="left:1242.5px;top:929.4px;font-size:24.02px;transform:scaleX(0.721);color:#f2f2f2;">9,9103</span>
<span class="t" style="left:1318.0px;top:929.4px;font-size:24.02px;transform:scaleX(0.721);color:#f2f2f2;">3,2734</span>
<span class="t" style="left:1401.3px;top:929.4px;font-size:24.02px;transform:scaleX(0.721);color:#f2f2f2;">8,3940</span>
<div class="a" style="left:1112px;top:113.7px;width:740.2px;height:595px;box-sizing:border-box;border:8px solid #ffff14"></div>
<span class="t" style="left:1441.5px;top:129.2px;font-size:14.80px;transform:scaleX(1.004);color:#ddd;">CIE 1931 xy</span>
<div class="a" style="left:1150px;top:146px;width:692px;height:525px;background:#262626;box-sizing:border-box;border:2px solid #9a9a9a;border-top:2px solid #a4a4a4;border-bottom:2px solid #a4a4a4"></div>
<svg style="left:0;top:0" width="1920" height="1039" viewBox="0 0 1920 1039">
<defs><clipPath id="lc"><polygon points="1292.4,665.0 1292.2,665.1 1291.9,665.2 1291.6,665.3 1291.2,665.4 1290.9,665.4 1290.6,665.4 1290.3,665.4 1289.9,665.3 1289.5,665.1 1289.0,664.9 1288.5,664.7 1288.0,664.5 1287.5,664.3 1287.0,664.2 1286.5,664.0 1286.0,663.7 1285.4,663.3 1284.7,662.9 1284.0,662.4 1283.3,661.9 1282.4,661.4 1281.5,660.8 1280.6,660.1 1279.6,659.5 1278.5,658.8 1277.4,658.0 1276.2,657.2 1275.0,656.4 1273.6,655.4 1272.2,654.4 1270.8,653.3 1269.2,652.0 1267.6,650.7 1266.0,649.2 1264.2,647.6 1262.2,645.6 1260.1,643.4 1257.9,640.8 1255.5,637.9 1252.9,634.5 1250.2,630.7 1247.3,626.6 1244.2,621.9 1241.0,616.4 1237.5,610.3 1233.9,603.7 1230.0,596.2 1226.0,587.8 1221.6,578.6 1216.9,568.5 1212.2,557.5 1207.4,545.5 1202.6,532.3 1197.8,518.0 1193.0,502.8 1188.3,486.7 1183.6,469.6 1178.9,451.3 1174.4,432.5 1170.3,413.4 1166.6,394.1 1163.1,374.2 1160.1,354.4 1157.7,335.1 1155.9,316.3 1154.7,297.7 1154.0,279.7 1154.2,262.6 1155.1,246.4 1156.8,230.8 1159.2,216.3 1162.4,203.2 1166.5,191.5 1171.4,181.1 1176.9,172.1 1182.9,164.7 1189.5,159.1 1196.7,155.2 1204.3,152.6 1212.0,151.1 1219.9,150.8 1228.1,151.9 1236.4,153.7 1244.8,155.9 1253.1,158.4 1261.5,161.5 1269.8,165.0 1278.0,168.5 1286.0,172.1 1293.9,175.8 1301.7,179.7 1309.4,183.6 1317.0,187.7 1324.5,191.9 1332.0,196.2 1339.5,200.6 1347.0,205.2 1354.4,209.8 1361.8,214.5 1369.2,219.3 1376.6,224.2 1383.9,229.2 1391.3,234.2 1398.6,239.3 1405.9,244.4 1413.3,249.6 1420.6,254.8 1427.9,260.1 1435.3,265.4 1442.6,270.7 1450.0,276.1 1457.3,281.5 1464.6,286.9 1471.9,292.3 1479.3,297.8 1486.5,303.2 1493.8,308.7 1501.1,314.1 1508.4,319.6 1515.6,325.0 1522.8,330.4 1529.9,335.8 1537.0,341.1 1544.1,346.5 1551.1,351.8 1558.1,357.0 1564.9,362.2 1571.8,367.4 1578.5,372.5 1585.2,377.6 1591.8,382.5 1598.3,387.5 1604.7,392.3 1611.0,397.0 1617.2,401.7 1623.2,406.3 1629.1,410.7 1634.9,415.1 1640.6,419.4 1646.0,423.5 1651.2,427.5 1656.2,431.3 1661.1,434.9 1665.8,438.5 1670.4,441.9 1674.8,445.3 1679.1,448.5 1683.2,451.6 1687.1,454.5 1690.8,457.3 1694.3,459.9 1697.6,462.5 1700.8,464.9 1703.8,467.1 1706.7,469.3 1709.4,471.4 1711.9,473.3 1714.3,475.1 1716.6,476.8 1718.7,478.5 1720.8,480.0 1722.7,481.4 1724.5,482.8 1726.2,484.1 1727.8,485.3 1729.3,486.5 1730.8,487.6 1732.2,488.6 1733.5,489.6 1734.8,490.6 1736.0,491.5 1737.2,492.4 1738.3,493.3 1739.4,494.1 1740.4,494.8 1741.3,495.5 1742.2,496.2 1743.0,496.8 1743.8,497.4 1744.6,498.0 1745.3,498.5 1745.9,499.0 1746.5,499.4 1747.0,499.8 1747.6,500.2 1748.1,500.6 1748.6,501.0 1748.9,501.3 1749.2,501.5 1749.4,501.6 1749.6,501.7 1749.7,501.8"/></clipPath><filter id="bl" x="-5%" y="-5%" width="110%" height="110%" color-interpolation-filters="sRGB"><feGaussianBlur stdDeviation="3.2"/></filter><clipPath id="ic"><rect x="1601" y="154" width="233" height="196"/></clipPath><filter id="bl2" x="-10%" y="-10%" width="120%" height="120%" color-interpolation-filters="sRGB"><feGaussianBlur stdDeviation="5"/></filter></defs>
<g clip-path="url(#lc)"><g filter="url(#bl)" shape-rendering="crispEdges">
<path fill="#0f0" d="M1193 141h50v8h-50zM1179 148h85v8h-85zM1172 155h106v8h-106zM1179 162h120v8h-120zM1193 169h120v8h-120zM1200 176h127v8h-127zM1214 183h120v8h-120zM1228 190h120v8h-120zM1235 197h127v8h-127zM1249 204h120v8h-120zM1263 211h120v8h-120zM1270 218h120v8h-120zM1284 225h120v8h-120zM1298 232h113v8h-113zM1305 239h113v8h-113zM1319 246h99v8h-99zM1333 253h78v8h-78zM1340 260h71v8h-71zM1354 267h57v8h-57zM1368 274h36v8h-36zM1375 281h29v8h-29zM1389 288h8v8h-8z"/>
<path fill="#00ff01" d="M1172 162h8v8h-8zM1186 169h8v8h-8zM1207 183h8v8h-8zM1221 190h8v8h-8zM1242 204h8v8h-8zM1256 211h8v8h-8zM1291 232h8v8h-8zM1326 253h8v8h-8zM1361 274h8v8h-8z"/>
<path fill="#00ff07" d="M1165 169h8v8h-8zM1200 190h8v8h-8zM1214 197h8v8h-8zM1249 218h8v8h-8zM1263 225h8v8h-8zM1298 246h8v8h-8zM1347 274h8v8h-8z"/>
<path fill="#00ff05" d="M1172 169h8v8h-8zM1207 190h8v8h-8zM1221 197h8v8h-8zM1242 211h8v8h-8zM1256 218h8v8h-8zM1291 239h8v8h-8zM1340 267h8v8h-8zM1375 288h8v8h-8z"/>
<path fill="#00ff03" d="M1179 169h8v8h-8zM1214 190h8v8h-8zM1249 211h8v8h-8zM1284 232h8v8h-8zM1298 239h8v8h-8zM1333 260h8v8h-8zM1368 281h8v8h-8z"/>
<path fill="#00ff0c" d="M1158 176h8v8h-8zM1207 204h8v8h-8zM1221 211h8v8h-8zM1270 239h8v8h-8zM1284 246h8v8h-8zM1333 274h8v8h-8zM1347 281h8v8h-8z"/>
<path fill="#00ff0a" d="M1165 176h8v8h-8zM1179 183h8v8h-8zM1214 204h8v8h-8zM1228 211h8v8h-8zM1277 239h8v8h-8zM1291 246h8v8h-8zM1326 267h8v8h-8zM1340 274h8v8h-8zM1389 302h8v8h-8z"/>
<path fill="#00ff08" d="M1172 176h8v8h-8zM1186 183h8v8h-8zM1221 204h8v8h-8zM1235 211h8v8h-8zM1270 232h8v8h-8zM1284 239h8v8h-8zM1319 260h8v8h-8zM1333 267h8v8h-8zM1368 288h8v8h-8zM1382 295h8v8h-8z"/>
<path fill="#00ff06" d="M1179 176h8v8h-8zM1193 183h8v8h-8zM1228 204h8v8h-8zM1277 232h8v8h-8zM1312 253h8v8h-8zM1326 260h8v8h-8zM1361 281h8v8h-8z"/>
<path fill="#00ff04" d="M1186 176h8v8h-8zM1200 183h8v8h-8zM1235 204h8v8h-8zM1270 225h8v8h-8zM1305 246h8v8h-8zM1319 253h8v8h-8zM1354 274h8v8h-8zM1389 295h8v8h-8z"/>
<path fill="#00ff02" d="M1193 176h8v8h-8zM1228 197h8v8h-8zM1263 218h8v8h-8zM1277 225h8v8h-8zM1312 246h8v8h-8zM1347 267h8v8h-8zM1382 288h8v8h-8z"/>
<path fill="#00ff0f" d="M1158 183h8v8h-8zM1172 190h8v8h-8zM1221 218h8v8h-8zM1235 225h8v8h-8zM1249 232h8v8h-8zM1263 239h8v8h-8zM1312 267h8v8h-8zM1326 274h8v8h-8zM1340 281h8v8h-8z"/>
<path fill="#00ff0d" d="M1165 183h8v8h-8zM1179 190h8v8h-8zM1193 197h8v8h-8zM1228 218h8v8h-8zM1242 225h8v8h-8zM1256 232h8v8h-8zM1305 260h8v8h-8zM1319 267h8v8h-8zM1382 302h8v8h-8z"/>
<path fill="#00ff0b" d="M1172 183h8v8h-8zM1186 190h8v8h-8zM1200 197h8v8h-8zM1235 218h8v8h-8zM1249 225h8v8h-8zM1263 232h8v8h-8zM1298 253h8v8h-8zM1312 260h8v8h-8zM1361 288h8v8h-8zM1375 295h8v8h-8z"/>
<path fill="#00ff12" d="M1158 190h8v8h-8zM1172 197h8v8h-8zM1186 204h8v8h-8zM1200 211h8v8h-8zM1277 253h8v8h-8zM1291 260h8v8h-8zM1305 267h8v8h-8zM1319 274h8v8h-8z"/>
<path fill="#00ff10" d="M1165 190h8v8h-8zM1179 197h8v8h-8zM1193 204h8v8h-8zM1207 211h8v8h-8zM1270 246h8v8h-8zM1284 253h8v8h-8zM1298 260h8v8h-8zM1375 302h8v8h-8z"/>
<path fill="#00ff09" d="M1193 190h8v8h-8zM1207 197h8v8h-8zM1242 218h8v8h-8zM1256 225h8v8h-8zM1305 253h8v8h-8zM1354 281h8v8h-8z"/>
<path fill="#00ff17" d="M1151 197h8v8h-8zM1165 204h8v8h-8zM1179 211h8v8h-8zM1193 218h8v8h-8zM1207 225h8v8h-8zM1221 232h8v8h-8zM1235 239h8v8h-8zM1249 246h8v8h-8zM1263 253h8v8h-8zM1277 260h8v8h-8zM1291 267h8v8h-8z"/>
<path fill="#00ff15" d="M1158 197h8v8h-8zM1172 204h8v8h-8zM1186 211h8v8h-8zM1200 218h8v8h-8zM1214 225h8v8h-8zM1228 232h8v8h-8zM1242 239h8v8h-8zM1256 246h8v8h-8zM1270 253h8v8h-8z"/>
<path fill="#00ff14" d="M1165 197h8v8h-8zM1179 204h8v8h-8zM1284 260h8v8h-8zM1298 267h8v8h-8zM1312 274h8v8h-8zM1326 281h8v8h-8zM1340 288h8v8h-8z"/>
<path fill="#00ff0e" d="M1186 197h8v8h-8zM1200 204h8v8h-8zM1214 211h8v8h-8zM1277 246h8v8h-8zM1291 253h8v8h-8zM1354 288h8v8h-8zM1368 295h8v8h-8z"/>
<path fill="#00ff1a" d="M1151 204h8v8h-8zM1165 211h8v8h-8zM1179 218h8v8h-8z"/>
<path fill="#00ff19" d="M1158 204h8v8h-8zM1172 211h8v8h-8zM1186 218h8v8h-8zM1200 225h8v8h-8zM1214 232h8v8h-8zM1228 239h8v8h-8zM1242 246h8v8h-8zM1256 253h8v8h-8zM1270 260h8v8h-8zM1284 267h8v8h-8zM1298 274h8v8h-8zM1312 281h8v8h-8zM1326 288h8v8h-8zM1340 295h8v8h-8zM1354 302h8v8h-8zM1368 309h8v8h-8zM1382 316h8v8h-8z"/>
<path fill="#00ff1e" d="M1151 211h8v8h-8zM1165 218h8v8h-8zM1179 225h8v8h-8zM1193 232h8v8h-8zM1207 239h8v8h-8zM1221 246h8v8h-8zM1312 288h8v8h-8zM1326 295h8v8h-8zM1340 302h8v8h-8zM1354 309h8v8h-8zM1368 316h8v8h-8z"/>
<path fill="#00ff1c" d="M1158 211h8v8h-8zM1172 218h8v8h-8zM1186 225h8v8h-8zM1200 232h8v8h-8zM1214 239h8v8h-8zM1375 316h8v8h-8z"/>
<path fill="#00ff13" d="M1193 211h8v8h-8zM1207 218h8v8h-8zM1221 225h8v8h-8zM1235 232h8v8h-8zM1249 239h8v8h-8zM1263 246h8v8h-8zM1354 295h8v8h-8zM1368 302h8v8h-8zM1382 309h8v8h-8z"/>
<path fill="#00ff23" d="M1144 218h8v8h-8zM1158 225h8v8h-8zM1172 232h8v8h-8zM1235 260h8v8h-8zM1249 267h8v8h-8zM1263 274h8v8h-8zM1326 302h8v8h-8zM1340 309h8v8h-8z"/>
<path fill="#00ff21" d="M1151 218h8v8h-8zM1165 225h8v8h-8zM1228 253h8v8h-8zM1242 260h8v8h-8zM1256 267h8v8h-8zM1270 274h8v8h-8zM1347 309h8v8h-8zM1361 316h8v8h-8z"/>
<path fill="#00ff1f" d="M1158 218h8v8h-8zM1235 253h8v8h-8zM1249 260h8v8h-8zM1263 267h8v8h-8zM1277 274h8v8h-8zM1382 323h8v8h-8z"/>
<path fill="#0f1" d="M1214 218h8v8h-8zM1228 225h8v8h-8zM1242 232h8v8h-8zM1256 239h8v8h-8zM1333 281h8v8h-8zM1347 288h8v8h-8zM1361 295h8v8h-8z"/>
<path fill="#00ff26" d="M1144 225h8v8h-8zM1158 232h8v8h-8zM1193 246h8v8h-8zM1207 253h8v8h-8zM1221 260h8v8h-8zM1270 281h8v8h-8zM1284 288h8v8h-8zM1333 309h8v8h-8zM1347 316h8v8h-8z"/>
<path fill="#00ff25" d="M1151 225h8v8h-8zM1165 232h8v8h-8zM1179 239h8v8h-8zM1228 260h8v8h-8zM1242 267h8v8h-8zM1256 274h8v8h-8zM1305 295h8v8h-8zM1319 302h8v8h-8z"/>
<path fill="#00ff20" d="M1172 225h8v8h-8zM1186 232h8v8h-8zM1200 239h8v8h-8zM1214 246h8v8h-8zM1291 281h8v8h-8zM1305 288h8v8h-8zM1319 295h8v8h-8zM1333 302h8v8h-8z"/>
<path fill="#00ff1b" d="M1193 225h8v8h-8zM1207 232h8v8h-8zM1221 239h8v8h-8zM1235 246h8v8h-8zM1249 253h8v8h-8zM1263 260h8v8h-8zM1277 267h8v8h-8zM1291 274h8v8h-8zM1305 281h8v8h-8zM1319 288h8v8h-8zM1333 295h8v8h-8zM1347 302h8v8h-8zM1361 309h8v8h-8z"/>
<path fill="#00ff2a" d="M1144 232h8v8h-8zM1158 239h8v8h-8zM1207 260h8v8h-8zM1256 281h8v8h-8zM1305 302h8v8h-8zM1319 309h8v8h-8zM1354 323h8v8h-8zM1368 330h8v8h-8z"/>
<path fill="#00ff28" d="M1151 232h8v8h-8zM1200 253h8v8h-8zM1214 260h8v8h-8zM1263 281h8v8h-8zM1277 288h8v8h-8zM1326 309h8v8h-8zM1375 330h8v8h-8z"/>
<path fill="#0f2" d="M1179 232h8v8h-8zM1193 239h8v8h-8zM1207 246h8v8h-8zM1221 253h8v8h-8zM1284 281h8v8h-8zM1298 288h8v8h-8zM1312 295h8v8h-8zM1375 323h8v8h-8z"/>
<path fill="#00ff2d" d="M1144 239h8v8h-8zM1179 253h8v8h-8zM1193 260h8v8h-8zM1228 274h8v8h-8zM1263 288h8v8h-8zM1277 295h8v8h-8zM1312 309h8v8h-8zM1361 330h8v8h-8z"/>
<path fill="#00ff2c" d="M1151 239h8v8h-8zM1165 246h8v8h-8zM1200 260h8v8h-8zM1214 267h8v8h-8zM1249 281h8v8h-8zM1298 302h8v8h-8zM1347 323h8v8h-8z"/>
<path fill="#00ff29" d="M1165 239h8v8h-8zM1179 246h8v8h-8zM1193 253h8v8h-8zM1228 267h8v8h-8zM1242 274h8v8h-8zM1291 295h8v8h-8zM1340 316h8v8h-8z"/>
<path fill="#00ff27" d="M1172 239h8v8h-8zM1186 246h8v8h-8zM1235 267h8v8h-8zM1249 274h8v8h-8zM1298 295h8v8h-8zM1312 302h8v8h-8zM1361 323h8v8h-8z"/>
<path fill="#00ff24" d="M1186 239h8v8h-8zM1200 246h8v8h-8zM1214 253h8v8h-8zM1277 281h8v8h-8zM1291 288h8v8h-8zM1354 316h8v8h-8zM1368 323h8v8h-8z"/>
<path fill="#06ff00" d="M1417 239h8v8h-8zM1396 295h8v8h-8z"/>
<path fill="#00ff31" d="M1144 246h8v8h-8zM1179 260h8v8h-8zM1214 274h8v8h-8zM1228 281h8v8h-8zM1263 295h8v8h-8zM1298 309h8v8h-8zM1333 323h8v8h-8zM1368 337h8v8h-8z"/>
<path fill="#00ff2f" d="M1151 246h8v8h-8zM1186 260h8v8h-8zM1221 274h8v8h-8zM1270 295h8v8h-8zM1305 309h8v8h-8zM1340 323h8v8h-8z"/>
<path fill="#00ff2e" d="M1158 246h8v8h-8zM1172 253h8v8h-8zM1207 267h8v8h-8zM1242 281h8v8h-8zM1256 288h8v8h-8zM1291 302h8v8h-8zM1326 316h8v8h-8zM1375 337h8v8h-8z"/>
<path fill="#00ff2b" d="M1172 246h8v8h-8zM1186 253h8v8h-8zM1221 267h8v8h-8zM1235 274h8v8h-8zM1270 288h8v8h-8zM1284 295h8v8h-8zM1333 316h8v8h-8z"/>
<path fill="#00ff1d" d="M1228 246h8v8h-8zM1242 253h8v8h-8zM1256 260h8v8h-8zM1270 267h8v8h-8zM1284 274h8v8h-8zM1298 281h8v8h-8z"/>
<path fill="#0aff00" d="M1417 246h8v8h-8z"/>
<path fill="#14ff00" d="M1424 246h8v8h-8zM1410 281h8v8h-8z"/>
<path fill="#00ff35" d="M1144 253h8v8h-8zM1179 267h8v8h-8zM1214 281h8v8h-8zM1249 295h8v8h-8zM1284 309h8v8h-8zM1375 344h8v8h-8z"/>
<path fill="#0f3" d="M1151 253h8v8h-8zM1186 267h8v8h-8zM1221 281h8v8h-8zM1256 295h8v8h-8zM1291 309h8v8h-8zM1326 323h8v8h-8zM1361 337h8v8h-8z"/>
<path fill="#00ff32" d="M1158 253h8v8h-8zM1172 260h8v8h-8zM1193 267h8v8h-8zM1207 274h8v8h-8zM1242 288h8v8h-8zM1277 302h8v8h-8zM1312 316h8v8h-8zM1347 330h8v8h-8z"/>
<path fill="#00ff30" d="M1165 253h8v8h-8zM1200 267h8v8h-8zM1235 281h8v8h-8zM1249 288h8v8h-8zM1284 302h8v8h-8zM1319 316h8v8h-8zM1354 330h8v8h-8z"/>
<path fill="#03ff00" d="M1410 253h8v8h-8z"/>
<path fill="#0eff00" d="M1417 253h8v8h-8z"/>
<path fill="#19ff00" d="M1424 253h8v8h-8zM1410 288h8v8h-8z"/>
<path fill="#23ff00" d="M1431 253h8v8h-8zM1410 302h8v8h-8z"/>
<path fill="#00ff39" d="M1144 260h8v8h-8zM1179 274h8v8h-8zM1214 288h8v8h-8zM1235 295h8v8h-8zM1270 309h8v8h-8zM1291 316h8v8h-8zM1326 330h8v8h-8z"/>
<path fill="#00ff37" d="M1151 260h8v8h-8zM1186 274h8v8h-8zM1207 281h8v8h-8zM1242 295h8v8h-8zM1277 309h8v8h-8zM1333 330h8v8h-8zM1368 344h8v8h-8z"/>
<path fill="#00ff36" d="M1158 260h8v8h-8zM1172 267h8v8h-8zM1193 274h8v8h-8zM1228 288h8v8h-8zM1263 302h8v8h-8zM1298 316h8v8h-8zM1319 323h8v8h-8zM1354 337h8v8h-8z"/>
<path fill="#00ff34" d="M1165 260h8v8h-8zM1200 274h8v8h-8zM1235 288h8v8h-8zM1270 302h8v8h-8zM1305 316h8v8h-8zM1340 330h8v8h-8z"/>
<path fill="#07ff00" d="M1410 260h8v8h-8z"/>
<path fill="#12ff00" d="M1417 260h8v8h-8zM1403 295h8v8h-8z"/>
<path fill="#1dff00" d="M1424 260h8v8h-8z"/>
<path fill="#27ff00" d="M1431 260h8v8h-8z"/>
<path fill="#32ff00" d="M1438 260h8v8h-8z"/>
<path fill="#3cff00" d="M1445 260h8v8h-8z"/>
<path fill="#00ff3d" d="M1144 267h8v8h-8zM1179 281h8v8h-8zM1200 288h8v8h-8zM1256 309h8v8h-8zM1277 316h8v8h-8zM1333 337h8v8h-8z"/>
<path fill="#00ff3b" d="M1151 267h8v8h-8zM1172 274h8v8h-8zM1207 288h8v8h-8zM1228 295h8v8h-8zM1263 309h8v8h-8zM1284 316h8v8h-8zM1319 330h8v8h-8zM1340 337h8v8h-8z"/>
<path fill="#00ff3a" d="M1158 267h8v8h-8zM1193 281h8v8h-8zM1249 302h8v8h-8zM1305 323h8v8h-8zM1361 344h8v8h-8z"/>
<path fill="#00ff38" d="M1165 267h8v8h-8zM1200 281h8v8h-8zM1221 288h8v8h-8zM1256 302h8v8h-8zM1312 323h8v8h-8zM1347 337h8v8h-8z"/>
<path fill="#0cff00" d="M1410 267h8v8h-8z"/>
<path fill="#17ff00" d="M1417 267h8v8h-8z"/>
<path fill="#21ff00" d="M1424 267h8v8h-8z"/>
<path fill="#2cff00" d="M1431 267h8v8h-8z"/>
<path fill="#36ff00" d="M1438 267h8v8h-8zM1431 281h8v8h-8z"/>
<path fill="#41ff00" d="M1445 267h8v8h-8z"/>
<path fill="#4bff00" d="M1452 267h8v8h-8zM1445 281h8v8h-8zM1438 295h8v8h-8zM1431 309h8v8h-8z"/>
<path fill="#00ff41" d="M1144 274h8v8h-8zM1200 295h8v8h-8zM1221 302h8v8h-8zM1242 309h8v8h-8zM1319 337h8v8h-8zM1340 344h8v8h-8zM1361 351h8v8h-8z"/>
<path fill="#00ff3f" d="M1151 274h8v8h-8zM1172 281h8v8h-8zM1228 302h8v8h-8zM1249 309h8v8h-8zM1270 316h8v8h-8zM1326 337h8v8h-8zM1347 344h8v8h-8z"/>
<path fill="#00ff3e" d="M1158 274h8v8h-8zM1193 288h8v8h-8zM1214 295h8v8h-8zM1235 302h8v8h-8zM1291 323h8v8h-8zM1312 330h8v8h-8zM1368 351h8v8h-8z"/>
<path fill="#00ff3c" d="M1165 274h8v8h-8zM1186 281h8v8h-8zM1221 295h8v8h-8zM1242 302h8v8h-8zM1298 323h8v8h-8zM1354 344h8v8h-8z"/>
<path fill="#00ff16" d="M1305 274h8v8h-8zM1319 281h8v8h-8zM1333 288h8v8h-8zM1347 295h8v8h-8zM1361 302h8v8h-8zM1375 309h8v8h-8z"/>
<path fill="#04ff00" d="M1403 274h8v8h-8z"/>
<path fill="#10ff00" d="M1410 274h8v8h-8z"/>
<path fill="#1bff00" d="M1417 274h8v8h-8z"/>
<path fill="#26ff00" d="M1424 274h8v8h-8z"/>
<path fill="#31ff00" d="M1431 274h8v8h-8z"/>
<path fill="#3bff00" d="M1438 274h8v8h-8zM1431 288h8v8h-8z"/>
<path fill="#46ff00" d="M1445 274h8v8h-8zM1438 288h8v8h-8zM1431 302h8v8h-8z"/>
<path fill="#51ff00" d="M1452 274h8v8h-8zM1445 288h8v8h-8zM1438 302h8v8h-8z"/>
<path fill="#5cff00" d="M1459 274h8v8h-8zM1452 288h8v8h-8z"/>
<path fill="#67ff00" d="M1466 274h8v8h-8z"/>
<path fill="#00ff45" d="M1144 281h8v8h-8zM1165 288h8v8h-8zM1186 295h8v8h-8zM1368 358h8v8h-8z"/>
<path fill="#00ff43" d="M1151 281h8v8h-8zM1172 288h8v8h-8zM1193 295h8v8h-8zM1214 302h8v8h-8zM1235 309h8v8h-8zM1333 344h8v8h-8zM1354 351h8v8h-8z"/>
<path fill="#00ff42" d="M1158 281h8v8h-8zM1179 288h8v8h-8zM1256 316h8v8h-8zM1277 323h8v8h-8zM1298 330h8v8h-8z"/>
<path fill="#00ff40" d="M1165 281h8v8h-8zM1186 288h8v8h-8zM1207 295h8v8h-8zM1263 316h8v8h-8zM1284 323h8v8h-8zM1305 330h8v8h-8z"/>
<path fill="#09ff00" d="M1403 281h8v8h-8z"/>
<path fill="#20ff00" d="M1417 281h8v8h-8z"/>
<path fill="#2bff00" d="M1424 281h8v8h-8z"/>
<path fill="#40ff00" d="M1438 281h8v8h-8zM1431 295h8v8h-8zM1424 309h8v8h-8z"/>
<path fill="#57ff00" d="M1452 281h8v8h-8zM1445 295h8v8h-8zM1438 309h8v8h-8z"/>
<path fill="#62ff00" d="M1459 281h8v8h-8z"/>
<path fill="#6dff00" d="M1466 281h8v8h-8z"/>
<path fill="#78ff00" d="M1473 281h8v8h-8z"/>
<path fill="#00ff49" d="M1144 288h8v8h-8zM1165 295h8v8h-8zM1186 302h8v8h-8zM1207 309h8v8h-8zM1228 316h8v8h-8z"/>
<path fill="#00ff48" d="M1151 288h8v8h-8zM1172 295h8v8h-8zM1193 302h8v8h-8zM1214 309h8v8h-8zM1235 316h8v8h-8zM1256 323h8v8h-8zM1277 330h8v8h-8zM1298 337h8v8h-8zM1319 344h8v8h-8zM1340 351h8v8h-8zM1361 358h8v8h-8z"/>
<path fill="#00ff46" d="M1158 288h8v8h-8zM1179 295h8v8h-8zM1200 302h8v8h-8zM1221 309h8v8h-8zM1242 316h8v8h-8zM1263 323h8v8h-8zM1284 330h8v8h-8zM1305 337h8v8h-8zM1326 344h8v8h-8zM1347 351h8v8h-8z"/>
<path fill="#01ff00" d="M1396 288h8v8h-8z"/>
<path fill="#0dff00" d="M1403 288h8v8h-8z"/>
<path fill="#24ff00" d="M1417 288h8v8h-8z"/>
<path fill="#30ff00" d="M1424 288h8v8h-8z"/>
<path fill="#68ff00" d="M1459 288h8v8h-8z"/>
<path fill="#73ff00" d="M1466 288h8v8h-8z"/>
<path fill="#7fff00" d="M1473 288h8v8h-8zM1452 323h8v8h-8z"/>
<path fill="#8bff00" d="M1480 288h8v8h-8z"/>
<path fill="#00ff4e" d="M1144 295h8v8h-8zM1165 302h8v8h-8zM1186 309h8v8h-8zM1207 316h8v8h-8zM1277 337h8v8h-8zM1298 344h8v8h-8zM1319 351h8v8h-8z"/>
<path fill="#00ff4c" d="M1151 295h8v8h-8zM1172 302h8v8h-8zM1263 330h8v8h-8zM1284 337h8v8h-8zM1305 344h8v8h-8zM1326 351h8v8h-8z"/>
<path fill="#00ff4b" d="M1158 295h8v8h-8zM1179 302h8v8h-8zM1200 309h8v8h-8zM1221 316h8v8h-8zM1242 323h8v8h-8z"/>
<path fill="#1eff00" d="M1410 295h8v8h-8z"/>
<path fill="#29ff00" d="M1417 295h8v8h-8z"/>
<path fill="#35ff00" d="M1424 295h8v8h-8z"/>
<path fill="#63ff00" d="M1452 295h8v8h-8z"/>
<path fill="#6eff00" d="M1459 295h8v8h-8z"/>
<path fill="#7aff00" d="M1466 295h8v8h-8z"/>
<path fill="#86ff00" d="M1473 295h8v8h-8z"/>
<path fill="#92ff00" d="M1480 295h8v8h-8z"/>
<path fill="#9fff00" d="M1487 295h8v8h-8z"/>
<path fill="#abff00" d="M1494 295h8v8h-8z"/>
<path fill="#00ff52" d="M1144 302h8v8h-8zM1193 316h8v8h-8zM1214 323h8v8h-8zM1284 344h8v8h-8zM1354 365h8v8h-8z"/>
<path fill="#00ff51" d="M1151 302h8v8h-8zM1172 309h8v8h-8zM1242 330h8v8h-8zM1263 337h8v8h-8zM1312 351h8v8h-8zM1333 358h8v8h-8z"/>
<path fill="#00ff4f" d="M1158 302h8v8h-8zM1228 323h8v8h-8zM1249 330h8v8h-8zM1340 358h8v8h-8zM1361 365h8v8h-8z"/>
<path fill="#0f4" d="M1207 302h8v8h-8zM1228 309h8v8h-8zM1249 316h8v8h-8zM1270 323h8v8h-8zM1291 330h8v8h-8zM1312 337h8v8h-8z"/>
<path fill="#0bff07" d="M1396 302h8v8h-8z"/>
<path fill="#17ff03" d="M1403 302h8v8h-8z"/>
<path fill="#2eff00" d="M1417 302h8v8h-8z"/>
<path fill="#3aff00" d="M1424 302h8v8h-8z"/>
<path fill="#5dff00" d="M1445 302h8v8h-8z"/>
<path fill="#69ff00" d="M1452 302h8v8h-8z"/>
<path fill="#75ff00" d="M1459 302h8v8h-8z"/>
<path fill="#81ff00" d="M1466 302h8v8h-8z"/>
<path fill="#8eff00" d="M1473 302h8v8h-8z"/>
<path fill="#9aff00" d="M1480 302h8v8h-8z"/>
<path fill="#a7ff00" d="M1487 302h8v8h-8zM1473 323h8v8h-8z"/>
<path fill="#b4ff00" d="M1494 302h8v8h-8z"/>
<path fill="#c1ff00" d="M1501 302h8v8h-8z"/>
<path fill="#00ff57" d="M1144 309h8v8h-8zM1193 323h8v8h-8zM1242 337h8v8h-8zM1291 351h8v8h-8zM1312 358h8v8h-8zM1361 372h8v8h-8z"/>
<path fill="#0f5" d="M1151 309h8v8h-8zM1179 316h8v8h-8zM1200 323h8v8h-8zM1249 337h8v8h-8zM1298 351h8v8h-8zM1319 358h8v8h-8z"/>
<path fill="#00ff54" d="M1158 309h8v8h-8zM1207 323h8v8h-8zM1228 330h8v8h-8zM1277 344h8v8h-8zM1347 365h8v8h-8z"/>
<path fill="#00ff53" d="M1165 309h8v8h-8zM1186 316h8v8h-8zM1235 330h8v8h-8zM1256 337h8v8h-8zM1305 351h8v8h-8zM1326 358h8v8h-8z"/>
<path fill="#00ff50" d="M1179 309h8v8h-8zM1200 316h8v8h-8zM1221 323h8v8h-8zM1270 337h8v8h-8zM1291 344h8v8h-8z"/>
<path fill="#00ff4d" d="M1193 309h8v8h-8zM1214 316h8v8h-8zM1235 323h8v8h-8zM1256 330h8v8h-8zM1347 358h8v8h-8z"/>
<path fill="#02ff10" d="M1389 309h8v8h-8z"/>
<path fill="#0fff0d" d="M1396 309h8v8h-8z"/>
<path fill="#1cff09" d="M1403 309h8v8h-8z"/>
<path fill="#28ff06" d="M1410 309h8v8h-8z"/>
<path fill="#34ff02" d="M1417 309h8v8h-8z"/>
<path fill="#64ff00" d="M1445 309h8v8h-8z"/>
<path fill="#70ff00" d="M1452 309h8v8h-8z"/>
<path fill="#7cff00" d="M1459 309h8v8h-8z"/>
<path fill="#89ff00" d="M1466 309h8v8h-8z"/>
<path fill="#96ff00" d="M1473 309h8v8h-8z"/>
<path fill="#a3ff00" d="M1480 309h8v8h-8z"/>
<path fill="#b0ff00" d="M1487 309h8v8h-8zM1473 330h8v8h-8z"/>
<path fill="#bdff00" d="M1494 309h8v8h-8z"/>
<path fill="#cbff00" d="M1501 309h8v8h-8z"/>
<path fill="#d9ff00" d="M1508 309h8v8h-8zM1487 337h8v8h-8z"/>
<path fill="#00ff5c" d="M1144 316h8v8h-8zM1193 330h8v8h-8zM1221 337h8v8h-8zM1270 351h8v8h-8zM1347 372h8v8h-8z"/>
<path fill="#00ff5a" d="M1151 316h8v8h-8zM1179 323h8v8h-8zM1228 337h8v8h-8zM1277 351h8v8h-8zM1354 372h8v8h-8z"/>
<path fill="#00ff59" d="M1158 316h8v8h-8zM1207 330h8v8h-8zM1256 344h8v8h-8zM1305 358h8v8h-8zM1333 365h8v8h-8z"/>
<path fill="#00ff58" d="M1165 316h8v8h-8zM1186 323h8v8h-8zM1214 330h8v8h-8zM1235 337h8v8h-8zM1263 344h8v8h-8zM1284 351h8v8h-8z"/>
<path fill="#00ff56" d="M1172 316h8v8h-8zM1221 330h8v8h-8zM1270 344h8v8h-8zM1340 365h8v8h-8z"/>
<path fill="#07ff16" d="M1389 316h8v8h-8z"/>
<path fill="#14ff13" d="M1396 316h8v8h-8z"/>
<path fill="#21ff0f" d="M1403 316h8v8h-8z"/>
<path fill="#2dff0c" d="M1410 316h8v8h-8z"/>
<path fill="#39ff09" d="M1417 316h8v8h-8z"/>
<path fill="#45ff05" d="M1424 316h8v8h-8z"/>
<path fill="#52ff00" d="M1431 316h8v8h-8z"/>
<path fill="#5eff00" d="M1438 316h8v8h-8z"/>
<path fill="#6aff00" d="M1445 316h8v8h-8z"/>
<path fill="#7f0" d="M1452 316h8v8h-8z"/>
<path fill="#84ff00" d="M1459 316h8v8h-8z"/>
<path fill="#91ff00" d="M1466 316h8v8h-8z"/>
<path fill="#9eff00" d="M1473 316h8v8h-8z"/>
<path fill="#acff00" d="M1480 316h8v8h-8zM1466 337h8v8h-8z"/>
<path fill="#b9ff00" d="M1487 316h8v8h-8z"/>
<path fill="#c7ff00" d="M1494 316h8v8h-8z"/>
<path fill="#d5ff00" d="M1501 316h8v8h-8z"/>
<path fill="#e4ff00" d="M1508 316h8v8h-8zM1487 344h8v8h-8z"/>
<path fill="#f3ff00" d="M1515 316h8v8h-8z"/>
<path fill="#fffc00" d="M1522 316h8v8h-8zM1494 351h8v8h-8z"/>
<path fill="#00ff61" d="M1144 323h8v8h-8zM1172 330h8v8h-8zM1249 351h8v8h-8zM1277 358h8v8h-8zM1305 365h8v8h-8z"/>
<path fill="#00ff5f" d="M1151 323h8v8h-8zM1179 330h8v8h-8zM1207 337h8v8h-8zM1284 358h8v8h-8zM1312 365h8v8h-8z"/>
<path fill="#00ff5e" d="M1158 323h8v8h-8zM1186 330h8v8h-8zM1235 344h8v8h-8zM1263 351h8v8h-8zM1340 372h8v8h-8z"/>
<path fill="#00ff5d" d="M1165 323h8v8h-8zM1214 337h8v8h-8zM1242 344h8v8h-8zM1291 358h8v8h-8zM1319 365h8v8h-8z"/>
<path fill="#00ff5b" d="M1172 323h8v8h-8zM1200 330h8v8h-8zM1249 344h8v8h-8zM1298 358h8v8h-8zM1326 365h8v8h-8z"/>
<path fill="#00ff4a" d="M1249 323h8v8h-8zM1270 330h8v8h-8zM1291 337h8v8h-8zM1312 344h8v8h-8zM1333 351h8v8h-8zM1354 358h8v8h-8z"/>
<path fill="#0dff1c" d="M1389 323h8v8h-8z"/>
<path fill="#1aff19" d="M1396 323h8v8h-8z"/>
<path fill="#26ff16" d="M1403 323h8v8h-8z"/>
<path fill="#33ff12" d="M1410 323h8v8h-8z"/>
<path fill="#3fff0f" d="M1417 323h8v8h-8z"/>
<path fill="#4bff0b" d="M1424 323h8v8h-8z"/>
<path fill="#58ff08" d="M1431 323h8v8h-8z"/>
<path fill="#65ff04" d="M1438 323h8v8h-8z"/>
<path fill="#72ff00" d="M1445 323h8v8h-8z"/>
<path fill="#8cff00" d="M1459 323h8v8h-8z"/>
<path fill="#9f0" d="M1466 323h8v8h-8z"/>
<path fill="#b5ff00" d="M1480 323h8v8h-8z"/>
<path fill="#c3ff00" d="M1487 323h8v8h-8z"/>
<path fill="#d1ff00" d="M1494 323h8v8h-8z"/>
<path fill="#e0ff00" d="M1501 323h8v8h-8z"/>
<path fill="#efff00" d="M1508 323h8v8h-8z"/>
<path fill="#ff0" d="M1515 323h8v8h-8z"/>
<path fill="#fff000" d="M1522 323h8v8h-8z"/>
<path fill="#ffe300" d="M1529 323h8v8h-8z"/>
<path fill="#0f6" d="M1144 330h8v8h-8zM1172 337h8v8h-8zM1200 344h8v8h-8zM1228 351h8v8h-8zM1256 358h8v8h-8zM1284 365h8v8h-8zM1312 372h8v8h-8zM1340 379h8v8h-8z"/>
<path fill="#00ff65" d="M1151 330h8v8h-8zM1179 337h8v8h-8zM1207 344h8v8h-8zM1235 351h8v8h-8z"/>
<path fill="#00ff63" d="M1158 330h8v8h-8zM1186 337h8v8h-8zM1214 344h8v8h-8zM1242 351h8v8h-8zM1270 358h8v8h-8zM1298 365h8v8h-8z"/>
<path fill="#00ff62" d="M1165 330h8v8h-8zM1193 337h8v8h-8zM1221 344h8v8h-8zM1326 372h8v8h-8zM1354 379h8v8h-8z"/>
<path fill="#04ff25" d="M1382 330h8v8h-8z"/>
<path fill="#12ff22" d="M1389 330h8v8h-8z"/>
<path fill="#1fff1f" d="M1396 330h8v8h-8z"/>
<path fill="#2cff1c" d="M1403 330h8v8h-8z"/>
<path fill="#38ff19" d="M1410 330h8v8h-8z"/>
<path fill="#45ff15" d="M1417 330h8v8h-8z"/>
<path fill="#52ff12" d="M1424 330h8v8h-8z"/>
<path fill="#5fff0e" d="M1431 330h8v8h-8z"/>
<path fill="#6cff0b" d="M1438 330h8v8h-8z"/>
<path fill="#79ff07" d="M1445 330h8v8h-8z"/>
<path fill="#87ff02" d="M1452 330h8v8h-8z"/>
<path fill="#94ff00" d="M1459 330h8v8h-8z"/>
<path fill="#a2ff00" d="M1466 330h8v8h-8z"/>
<path fill="#bfff00" d="M1480 330h8v8h-8z"/>
<path fill="#cdff00" d="M1487 330h8v8h-8z"/>
<path fill="#dcff00" d="M1494 330h8v8h-8z"/>
<path fill="#ecff00" d="M1501 330h8v8h-8z"/>
<path fill="#fcff00" d="M1508 330h8v8h-8z"/>
<path fill="#fff300" d="M1515 330h8v8h-8z"/>
<path fill="#ffe500" d="M1522 330h8v8h-8z"/>
<path fill="#ffd800" d="M1529 330h8v8h-8z"/>
<path fill="#fc0" d="M1536 330h8v8h-8z"/>
<path fill="#00ff6b" d="M1144 337h8v8h-8zM1207 351h8v8h-8zM1235 358h8v8h-8zM1263 365h8v8h-8zM1354 386h8v8h-8z"/>
<path fill="#00ff6a" d="M1151 337h8v8h-8zM1179 344h8v8h-8zM1270 365h8v8h-8zM1298 372h8v8h-8zM1326 379h8v8h-8z"/>
<path fill="#00ff69" d="M1158 337h8v8h-8zM1186 344h8v8h-8zM1214 351h8v8h-8zM1242 358h8v8h-8z"/>
<path fill="#00ff67" d="M1165 337h8v8h-8z"/>
<path fill="#00ff60" d="M1200 337h8v8h-8zM1228 344h8v8h-8zM1256 351h8v8h-8zM1333 372h8v8h-8zM1361 379h8v8h-8z"/>
<path fill="#09ff2b" d="M1382 337h8v8h-8z"/>
<path fill="#17ff28" d="M1389 337h8v8h-8z"/>
<path fill="#24ff25" d="M1396 337h8v8h-8z"/>
<path fill="#31ff22" d="M1403 337h8v8h-8z"/>
<path fill="#3eff1f" d="M1410 337h8v8h-8z"/>
<path fill="#4bff1c" d="M1417 337h8v8h-8z"/>
<path fill="#59ff19" d="M1424 337h8v8h-8z"/>
<path fill="#66ff15" d="M1431 337h8v8h-8z"/>
<path fill="#73ff12" d="M1438 337h8v8h-8z"/>
<path fill="#81ff0e" d="M1445 337h8v8h-8z"/>
<path fill="#8fff0a" d="M1452 337h8v8h-8z"/>
<path fill="#9dff05" d="M1459 337h8v8h-8z"/>
<path fill="#baff00" d="M1473 337h8v8h-8z"/>
<path fill="#c9ff00" d="M1480 337h8v8h-8z"/>
<path fill="#e8ff00" d="M1494 337h8v8h-8z"/>
<path fill="#f8ff00" d="M1501 337h8v8h-8z"/>
<path fill="#fff600" d="M1508 337h8v8h-8z"/>
<path fill="#ffe700" d="M1515 337h8v8h-8z"/>
<path fill="#ffda00" d="M1522 337h8v8h-8z"/>
<path fill="#ffce00" d="M1529 337h8v8h-8z"/>
<path fill="#ffc300" d="M1536 337h8v8h-8z"/>
<path fill="#ffb800" d="M1543 337h8v8h-8z"/>
<path fill="#ffaf00" d="M1550 337h8v8h-8zM1543 344h8v8h-8z"/>
<path fill="#00ff70" d="M1151 344h8v8h-8zM1179 351h8v8h-8zM1214 358h8v8h-8zM1242 365h8v8h-8zM1305 379h8v8h-8z"/>
<path fill="#00ff6e" d="M1158 344h8v8h-8zM1193 351h8v8h-8zM1221 358h8v8h-8zM1284 372h8v8h-8zM1312 379h8v8h-8z"/>
<path fill="#00ff6d" d="M1165 344h8v8h-8zM1228 358h8v8h-8zM1256 365h8v8h-8zM1347 386h8v8h-8z"/>
<path fill="#00ff6c" d="M1172 344h8v8h-8zM1200 351h8v8h-8zM1291 372h8v8h-8zM1319 379h8v8h-8z"/>
<path fill="#00ff68" d="M1193 344h8v8h-8zM1221 351h8v8h-8zM1249 358h8v8h-8zM1277 365h8v8h-8zM1305 372h8v8h-8zM1333 379h8v8h-8z"/>
<path fill="#0fff32" d="M1382 344h8v8h-8z"/>
<path fill="#1dff2f" d="M1389 344h8v8h-8z"/>
<path fill="#2aff2c" d="M1396 344h8v8h-8z"/>
<path fill="#37ff29" d="M1403 344h8v8h-8z"/>
<path fill="#45ff26" d="M1410 344h8v8h-8z"/>
<path fill="#52ff23" d="M1417 344h8v8h-8z"/>
<path fill="#60ff20" d="M1424 344h8v8h-8z"/>
<path fill="#6dff1c" d="M1431 344h8v8h-8z"/>
<path fill="#7bff19" d="M1438 344h8v8h-8z"/>
<path fill="#8aff15" d="M1445 344h8v8h-8z"/>
<path fill="#98ff11" d="M1452 344h8v8h-8z"/>
<path fill="#a7ff0d" d="M1459 344h8v8h-8z"/>
<path fill="#b6ff09" d="M1466 344h8v8h-8z"/>
<path fill="#c5ff04" d="M1473 344h8v8h-8z"/>
<path fill="#d4ff00" d="M1480 344h8v8h-8z"/>
<path fill="#f5ff00" d="M1494 344h8v8h-8z"/>
<path fill="#fff900" d="M1501 344h8v8h-8z"/>
<path fill="#ffea00" d="M1508 344h8v8h-8z"/>
<path fill="#ffdc00" d="M1515 344h8v8h-8z"/>
<path fill="#ffcf00" d="M1522 344h8v8h-8z"/>
<path fill="#ffc400" d="M1529 344h8v8h-8z"/>
<path fill="#ffb900" d="M1536 344h8v8h-8z"/>
<path fill="#ffa600" d="M1550 344h8v8h-8zM1543 351h8v8h-8z"/>
<path fill="#ff9e00" d="M1557 344h8v8h-8zM1550 351h8v8h-8zM1543 358h8v8h-8zM1536 365h8v8h-8zM1529 372h8v8h-8z"/>
<path fill="#00ff76" d="M1151 351h8v8h-8zM1214 365h8v8h-8zM1249 372h8v8h-8zM1347 393h8v8h-8z"/>
<path fill="#00ff74" d="M1158 351h8v8h-8zM1193 358h8v8h-8zM1256 372h8v8h-8zM1291 379h8v8h-8zM1354 393h8v8h-8z"/>
<path fill="#00ff73" d="M1165 351h8v8h-8zM1228 365h8v8h-8zM1263 372h8v8h-8zM1326 386h8v8h-8z"/>
<path fill="#00ff72" d="M1172 351h8v8h-8zM1200 358h8v8h-8zM1235 365h8v8h-8zM1298 379h8v8h-8z"/>
<path fill="#00ff6f" d="M1186 351h8v8h-8zM1249 365h8v8h-8zM1277 372h8v8h-8zM1340 386h8v8h-8z"/>
<path fill="#06ff3c" d="M1375 351h8v8h-8z"/>
<path fill="#14ff39" d="M1382 351h8v8h-8z"/>
<path fill="#22ff36" d="M1389 351h8v8h-8z"/>
<path fill="#30ff33" d="M1396 351h8v8h-8z"/>
<path fill="#3eff30" d="M1403 351h8v8h-8z"/>
<path fill="#4bff2d" d="M1410 351h8v8h-8z"/>
<path fill="#59ff2a" d="M1417 351h8v8h-8z"/>
<path fill="#67ff27" d="M1424 351h8v8h-8z"/>
<path fill="#75ff24" d="M1431 351h8v8h-8z"/>
<path fill="#84ff20" d="M1438 351h8v8h-8z"/>
<path fill="#93ff1d" d="M1445 351h8v8h-8z"/>
<path fill="#a1ff19" d="M1452 351h8v8h-8z"/>
<path fill="#b1ff15" d="M1459 351h8v8h-8z"/>
<path fill="#c0ff11" d="M1466 351h8v8h-8z"/>
<path fill="#d0ff0c" d="M1473 351h8v8h-8z"/>
<path fill="#e0ff08" d="M1480 351h8v8h-8z"/>
<path fill="#f1ff02" d="M1487 351h8v8h-8z"/>
<path fill="#ffec00" d="M1501 351h8v8h-8z"/>
<path fill="#ffde00" d="M1508 351h8v8h-8z"/>
<path fill="#ffd100" d="M1515 351h8v8h-8z"/>
<path fill="#ffc500" d="M1522 351h8v8h-8z"/>
<path fill="#ffba00" d="M1529 351h8v8h-8z"/>
<path fill="#ffb000" d="M1536 351h8v8h-8zM1529 358h8v8h-8z"/>
<path fill="#ff9600" d="M1557 351h8v8h-8zM1550 358h8v8h-8z"/>
<path fill="#ff8f00" d="M1564 351h8v8h-8z"/>
<path fill="#00ff7c" d="M1151 358h8v8h-8zM1186 365h8v8h-8zM1221 372h8v8h-8zM1256 379h8v8h-8zM1291 386h8v8h-8zM1326 393h8v8h-8z"/>
<path fill="#00ff7a" d="M1158 358h8v8h-8zM1193 365h8v8h-8zM1228 372h8v8h-8zM1263 379h8v8h-8zM1298 386h8v8h-8zM1333 393h8v8h-8z"/>
<path fill="#00ff79" d="M1165 358h8v8h-8zM1200 365h8v8h-8zM1235 372h8v8h-8zM1270 379h8v8h-8zM1305 386h8v8h-8z"/>
<path fill="#00ff78" d="M1172 358h8v8h-8zM1207 365h8v8h-8zM1340 393h8v8h-8z"/>
<path fill="#0f7" d="M1179 358h8v8h-8zM1242 372h8v8h-8zM1277 379h8v8h-8zM1312 386h8v8h-8z"/>
<path fill="#00ff75" d="M1186 358h8v8h-8zM1221 365h8v8h-8zM1284 379h8v8h-8zM1319 386h8v8h-8z"/>
<path fill="#00ff71" d="M1207 358h8v8h-8zM1270 372h8v8h-8zM1333 386h8v8h-8z"/>
<path fill="#00ff64" d="M1263 358h8v8h-8zM1291 365h8v8h-8zM1319 372h8v8h-8zM1347 379h8v8h-8z"/>
<path fill="#0cff43" d="M1375 358h8v8h-8z"/>
<path fill="#1aff40" d="M1382 358h8v8h-8z"/>
<path fill="#28ff3e" d="M1389 358h8v8h-8z"/>
<path fill="#36ff3b" d="M1396 358h8v8h-8z"/>
<path fill="#44ff38" d="M1403 358h8v8h-8z"/>
<path fill="#53ff35" d="M1410 358h8v8h-8z"/>
<path fill="#61ff32" d="M1417 358h8v8h-8z"/>
<path fill="#6fff2f" d="M1424 358h8v8h-8z"/>
<path fill="#7eff2b" d="M1431 358h8v8h-8z"/>
<path fill="#8dff28" d="M1438 358h8v8h-8z"/>
<path fill="#9cff24" d="M1445 358h8v8h-8z"/>
<path fill="#acff21" d="M1452 358h8v8h-8z"/>
<path fill="#bbff1d" d="M1459 358h8v8h-8z"/>
<path fill="#ccff19" d="M1466 358h8v8h-8z"/>
<path fill="#dcff15" d="M1473 358h8v8h-8z"/>
<path fill="#edff10" d="M1480 358h8v8h-8z"/>
<path fill="#feff0b" d="M1487 358h8v8h-8z"/>
<path fill="#ffef06" d="M1494 358h8v8h-8z"/>
<path fill="#ffe000" d="M1501 358h8v8h-8z"/>
<path fill="#ffd200" d="M1508 358h8v8h-8z"/>
<path fill="#ffc600" d="M1515 358h8v8h-8z"/>
<path fill="#fb0" d="M1522 358h8v8h-8zM1515 365h8v8h-8z"/>
<path fill="#ffa700" d="M1536 358h8v8h-8zM1529 365h8v8h-8z"/>
<path fill="#ff8e00" d="M1557 358h8v8h-8zM1550 365h8v8h-8z"/>
<path fill="#ff8700" d="M1564 358h8v8h-8z"/>
<path fill="#ff8000" d="M1571 358h8v8h-8zM1564 365h8v8h-8z"/>
<path fill="#ff7a00" d="M1578 358h8v8h-8z"/>
<path fill="#00ff82" d="M1151 365h8v8h-8zM1186 372h8v8h-8zM1228 379h8v8h-8zM1263 386h8v8h-8zM1340 400h8v8h-8z"/>
<path fill="#00ff81" d="M1158 365h8v8h-8zM1193 372h8v8h-8zM1270 386h8v8h-8zM1305 393h8v8h-8z"/>
<path fill="#00ff80" d="M1165 365h8v8h-8zM1200 372h8v8h-8zM1235 379h8v8h-8zM1312 393h8v8h-8zM1347 400h8v8h-8z"/>
<path fill="#00ff7e" d="M1172 365h8v8h-8zM1284 386h8v8h-8zM1319 393h8v8h-8zM1354 400h8v8h-8z"/>
<path fill="#00ff7d" d="M1179 365h8v8h-8zM1214 372h8v8h-8zM1249 379h8v8h-8z"/>
<path fill="#01ff4d" d="M1368 365h8v8h-8z"/>
<path fill="#11ff4b" d="M1375 365h8v8h-8z"/>
<path fill="#20ff48" d="M1382 365h8v8h-8z"/>
<path fill="#2fff45" d="M1389 365h8v8h-8z"/>
<path fill="#3dff43" d="M1396 365h8v8h-8z"/>
<path fill="#4bff40" d="M1403 365h8v8h-8z"/>
<path fill="#5aff3d" d="M1410 365h8v8h-8z"/>
<path fill="#69ff3a" d="M1417 365h8v8h-8z"/>
<path fill="#78ff37" d="M1424 365h8v8h-8z"/>
<path fill="#87ff33" d="M1431 365h8v8h-8z"/>
<path fill="#96ff30" d="M1438 365h8v8h-8z"/>
<path fill="#a6ff2d" d="M1445 365h8v8h-8z"/>
<path fill="#b6ff29" d="M1452 365h8v8h-8z"/>
<path fill="#c7ff25" d="M1459 365h8v8h-8z"/>
<path fill="#d8ff21" d="M1466 365h8v8h-8z"/>
<path fill="#e9ff1d" d="M1473 365h8v8h-8z"/>
<path fill="#fbff19" d="M1480 365h8v8h-8z"/>
<path fill="#fff213" d="M1487 365h8v8h-8z"/>
<path fill="#ffe20e" d="M1494 365h8v8h-8z"/>
<path fill="#ffd409" d="M1501 365h8v8h-8z"/>
<path fill="#ffc704" d="M1508 365h8v8h-8z"/>
<path fill="#ffb100" d="M1522 365h8v8h-8z"/>
<path fill="#ff9500" d="M1543 365h8v8h-8zM1536 372h8v8h-8z"/>
<path fill="#ff8600" d="M1557 365h8v8h-8zM1550 372h8v8h-8z"/>
<path fill="#ff7900" d="M1571 365h8v8h-8zM1564 372h8v8h-8z"/>
<path fill="#ff7300" d="M1578 365h8v8h-8zM1571 372h8v8h-8z"/>
<path fill="#ff6e00" d="M1585 365h8v8h-8z"/>
<path fill="#0f8" d="M1151 372h8v8h-8zM1193 379h8v8h-8zM1235 386h8v8h-8zM1277 393h8v8h-8z"/>
<path fill="#00ff87" d="M1158 372h8v8h-8zM1200 379h8v8h-8zM1242 386h8v8h-8zM1319 400h8v8h-8z"/>
<path fill="#00ff86" d="M1165 372h8v8h-8zM1207 379h8v8h-8zM1284 393h8v8h-8zM1326 400h8v8h-8z"/>
<path fill="#00ff85" d="M1172 372h8v8h-8zM1249 386h8v8h-8zM1291 393h8v8h-8z"/>
<path fill="#00ff84" d="M1179 372h8v8h-8zM1214 379h8v8h-8zM1256 386h8v8h-8zM1333 400h8v8h-8z"/>
<path fill="#00ff7f" d="M1207 372h8v8h-8zM1242 379h8v8h-8zM1277 386h8v8h-8z"/>
<path fill="#08ff55" d="M1368 372h8v8h-8z"/>
<path fill="#17ff53" d="M1375 372h8v8h-8z"/>
<path fill="#26ff50" d="M1382 372h8v8h-8z"/>
<path fill="#35ff4d" d="M1389 372h8v8h-8z"/>
<path fill="#44ff4b" d="M1396 372h8v8h-8z"/>
<path fill="#53ff48" d="M1403 372h8v8h-8z"/>
<path fill="#62ff45" d="M1410 372h8v8h-8z"/>
<path fill="#71ff42" d="M1417 372h8v8h-8z"/>
<path fill="#81ff3f" d="M1424 372h8v8h-8z"/>
<path fill="#91ff3c" d="M1431 372h8v8h-8z"/>
<path fill="#a1ff39" d="M1438 372h8v8h-8z"/>
<path fill="#b1ff35" d="M1445 372h8v8h-8z"/>
<path fill="#c2ff32" d="M1452 372h8v8h-8z"/>
<path fill="#d3ff2e" d="M1459 372h8v8h-8z"/>
<path fill="#e5ff2a" d="M1466 372h8v8h-8z"/>
<path fill="#f7ff26" d="M1473 372h8v8h-8z"/>
<path fill="#fff520" d="M1480 372h8v8h-8z"/>
<path fill="#ffe41a" d="M1487 372h8v8h-8z"/>
<path fill="#ffd615" d="M1494 372h8v8h-8z"/>
<path fill="#ffc810" d="M1501 372h8v8h-8z"/>
<path fill="#ffbc0b" d="M1508 372h8v8h-8z"/>
<path fill="#ffb106" d="M1515 372h8v8h-8z"/>
<path fill="#ffa702" d="M1522 372h8v8h-8z"/>
<path fill="#ff8d00" d="M1543 372h8v8h-8zM1536 379h8v8h-8z"/>
<path fill="#ff7f00" d="M1557 372h8v8h-8z"/>
<path fill="#ff6d00" d="M1578 372h8v8h-8z"/>
<path fill="#ff6800" d="M1585 372h8v8h-8z"/>
<path fill="#ff6300" d="M1592 372h8v8h-8z"/>
<path fill="#00ff8f" d="M1151 379h8v8h-8zM1200 386h8v8h-8zM1242 393h8v8h-8zM1284 400h8v8h-8z"/>
<path fill="#00ff8e" d="M1158 379h8v8h-8zM1249 393h8v8h-8zM1291 400h8v8h-8zM1333 407h8v8h-8z"/>
<path fill="#00ff8d" d="M1165 379h8v8h-8zM1207 386h8v8h-8z"/>
<path fill="#00ff8c" d="M1172 379h8v8h-8zM1214 386h8v8h-8zM1256 393h8v8h-8zM1298 400h8v8h-8zM1340 407h8v8h-8z"/>
<path fill="#00ff8b" d="M1179 379h8v8h-8zM1221 386h8v8h-8zM1263 393h8v8h-8zM1305 400h8v8h-8zM1347 407h8v8h-8z"/>
<path fill="#00ff8a" d="M1186 379h8v8h-8z"/>
<path fill="#00ff83" d="M1221 379h8v8h-8zM1298 393h8v8h-8z"/>
<path fill="#0eff5e" d="M1368 379h8v8h-8z"/>
<path fill="#1eff5b" d="M1375 379h8v8h-8z"/>
<path fill="#2dff59" d="M1382 379h8v8h-8z"/>
<path fill="#3cff56" d="M1389 379h8v8h-8z"/>
<path fill="#4bff53" d="M1396 379h8v8h-8z"/>
<path fill="#5bff51" d="M1403 379h8v8h-8z"/>
<path fill="#6aff4e" d="M1410 379h8v8h-8z"/>
<path fill="#7aff4b" d="M1417 379h8v8h-8z"/>
<path fill="#8aff48" d="M1424 379h8v8h-8z"/>
<path fill="#9bff45" d="M1431 379h8v8h-8z"/>
<path fill="#acff42" d="M1438 379h8v8h-8z"/>
<path fill="#bdff3e" d="M1445 379h8v8h-8z"/>
<path fill="#ceff3b" d="M1452 379h8v8h-8z"/>
<path fill="#e0ff37" d="M1459 379h8v8h-8z"/>
<path fill="#f3ff33" d="M1466 379h8v8h-8z"/>
<path fill="#fff82e" d="M1473 379h8v8h-8z"/>
<path fill="#ffe727" d="M1480 379h8v8h-8z"/>
<path fill="#ffd821" d="M1487 379h8v8h-8z"/>
<path fill="#ffca1b" d="M1494 379h8v8h-8z"/>
<path fill="#ffbd16" d="M1501 379h8v8h-8z"/>
<path fill="#ffb211" d="M1508 379h8v8h-8z"/>
<path fill="#ffa70d" d="M1515 379h8v8h-8z"/>
<path fill="#ff9e08" d="M1522 379h8v8h-8z"/>
<path fill="#ff9504" d="M1529 379h8v8h-8z"/>
<path fill="#ff8500" d="M1543 379h8v8h-8z"/>
<path fill="#ff7e00" d="M1550 379h8v8h-8z"/>
<path fill="#ff7800" d="M1557 379h8v8h-8z"/>
<path fill="#ff7200" d="M1564 379h8v8h-8z"/>
<path fill="#ff6c00" d="M1571 379h8v8h-8z"/>
<path fill="#f60" d="M1578 379h8v8h-8z"/>
<path fill="#ff6100" d="M1585 379h8v8h-8z"/>
<path fill="#ff5c00" d="M1592 379h8v8h-8z"/>
<path fill="#ff5800" d="M1599 379h8v8h-8zM1571 400h8v8h-8z"/>
<path fill="#ff5400" d="M1606 379h8v8h-8zM1578 400h8v8h-8z"/>
<path fill="#00ff95" d="M1158 386h8v8h-8zM1207 393h8v8h-8zM1256 400h8v8h-8zM1305 407h8v8h-8z"/>
<path fill="#00ff94" d="M1165 386h8v8h-8zM1214 393h8v8h-8zM1263 400h8v8h-8z"/>
<path fill="#00ff93" d="M1172 386h8v8h-8zM1221 393h8v8h-8zM1312 407h8v8h-8z"/>
<path fill="#00ff92" d="M1179 386h8v8h-8zM1270 400h8v8h-8z"/>
<path fill="#00ff91" d="M1186 386h8v8h-8zM1228 393h8v8h-8zM1277 400h8v8h-8zM1319 407h8v8h-8z"/>
<path fill="#00ff90" d="M1193 386h8v8h-8zM1235 393h8v8h-8zM1326 407h8v8h-8z"/>
<path fill="#00ff89" d="M1228 386h8v8h-8zM1270 393h8v8h-8zM1312 400h8v8h-8z"/>
<path fill="#03ff69" d="M1361 386h8v8h-8z"/>
<path fill="#14ff66" d="M1368 386h8v8h-8z"/>
<path fill="#24ff64" d="M1375 386h8v8h-8z"/>
<path fill="#34ff62" d="M1382 386h8v8h-8z"/>
<path fill="#44ff5f" d="M1389 386h8v8h-8z"/>
<path fill="#53ff5d" d="M1396 386h8v8h-8z"/>
<path fill="#63ff5a" d="M1403 386h8v8h-8z"/>
<path fill="#73ff57" d="M1410 386h8v8h-8z"/>
<path fill="#84ff55" d="M1417 386h8v8h-8z"/>
<path fill="#95ff52" d="M1424 386h8v8h-8z"/>
<path fill="#a6ff4f" d="M1431 386h8v8h-8z"/>
<path fill="#b7ff4b" d="M1438 386h8v8h-8z"/>
<path fill="#c9ff48" d="M1445 386h8v8h-8z"/>
<path fill="#dcff45" d="M1452 386h8v8h-8z"/>
<path fill="#efff41" d="M1459 386h8v8h-8z"/>
<path fill="#fffc3d" d="M1466 386h8v8h-8z"/>
<path fill="#ffea35" d="M1473 386h8v8h-8z"/>
<path fill="#ffda2e" d="M1480 386h8v8h-8z"/>
<path fill="#ffcb27" d="M1487 386h8v8h-8z"/>
<path fill="#ffbe22" d="M1494 386h8v8h-8z"/>
<path fill="#ffb21c" d="M1501 386h8v8h-8z"/>
<path fill="#ffa817" d="M1508 386h8v8h-8z"/>
<path fill="#ff9e13" d="M1515 386h8v8h-8z"/>
<path fill="#ff950e" d="M1522 386h8v8h-8z"/>
<path fill="#ff8c0a" d="M1529 386h8v8h-8z"/>
<path fill="#ff8507" d="M1536 386h8v8h-8z"/>
<path fill="#ff7d03" d="M1543 386h8v8h-8z"/>
<path fill="#f70" d="M1550 386h8v8h-8z"/>
<path fill="#ff7000" d="M1557 386h8v8h-8z"/>
<path fill="#ff6b00" d="M1564 386h8v8h-8z"/>
<path fill="#ff6500" d="M1571 386h8v8h-8z"/>
<path fill="#ff6000" d="M1578 386h8v8h-8z"/>
<path fill="#ff5b00" d="M1585 386h8v8h-8z"/>
<path fill="#ff5700" d="M1592 386h8v8h-8z"/>
<path fill="#ff5200" d="M1599 386h8v8h-8z"/>
<path fill="#ff4e00" d="M1606 386h8v8h-8z"/>
<path fill="#ff4a00" d="M1613 386h8v8h-8z"/>
<path fill="#00ff9d" d="M1158 393h8v8h-8zM1207 400h8v8h-8zM1263 407h8v8h-8z"/>
<path fill="#00ff9c" d="M1165 393h8v8h-8zM1214 400h8v8h-8zM1270 407h8v8h-8zM1319 414h8v8h-8z"/>
<path fill="#00ff9b" d="M1172 393h8v8h-8zM1221 400h8v8h-8zM1326 414h8v8h-8z"/>
<path fill="#00ff9a" d="M1179 393h8v8h-8zM1228 400h8v8h-8zM1277 407h8v8h-8z"/>
<path fill="#0f9" d="M1186 393h8v8h-8zM1235 400h8v8h-8zM1284 407h8v8h-8zM1333 414h8v8h-8z"/>
<path fill="#00ff97" d="M1193 393h8v8h-8zM1242 400h8v8h-8z"/>
<path fill="#00ff96" d="M1200 393h8v8h-8zM1249 400h8v8h-8zM1298 407h8v8h-8zM1347 414h8v8h-8z"/>
<path fill="#0aff72" d="M1361 393h8v8h-8z"/>
<path fill="#1bff70" d="M1368 393h8v8h-8z"/>
<path fill="#2bff6e" d="M1375 393h8v8h-8z"/>
<path fill="#3bff6b" d="M1382 393h8v8h-8z"/>
<path fill="#4bff69" d="M1389 393h8v8h-8z"/>
<path fill="#5cff67" d="M1396 393h8v8h-8z"/>
<path fill="#6cff64" d="M1403 393h8v8h-8z"/>
<path fill="#7dff61" d="M1410 393h8v8h-8z"/>
<path fill="#8eff5f" d="M1417 393h8v8h-8z"/>
<path fill="#a0ff5c" d="M1424 393h8v8h-8z"/>
<path fill="#b2ff59" d="M1431 393h8v8h-8z"/>
<path fill="#c4ff56" d="M1438 393h8v8h-8z"/>
<path fill="#d7ff53" d="M1445 393h8v8h-8z"/>
<path fill="#eaff4f" d="M1452 393h8v8h-8z"/>
<path fill="#feff4c" d="M1459 393h8v8h-8z"/>
<path fill="#ffed43" d="M1466 393h8v8h-8z"/>
<path fill="#ffdc3b" d="M1473 393h8v8h-8z"/>
<path fill="#ffcd34" d="M1480 393h8v8h-8z"/>
<path fill="#ffbf2d" d="M1487 393h8v8h-8z"/>
<path fill="#ffb327" d="M1494 393h8v8h-8z"/>
<path fill="#ffa822" d="M1501 393h8v8h-8z"/>
<path fill="#ff9e1d" d="M1508 393h8v8h-8z"/>
<path fill="#ff9418" d="M1515 393h8v8h-8z"/>
<path fill="#ff8c14" d="M1522 393h8v8h-8z"/>
<path fill="#ff8410" d="M1529 393h8v8h-8z"/>
<path fill="#ff7d0c" d="M1536 393h8v8h-8z"/>
<path fill="#ff7608" d="M1543 393h8v8h-8z"/>
<path fill="#ff6f05" d="M1550 393h8v8h-8z"/>
<path fill="#ff6901" d="M1557 393h8v8h-8z"/>
<path fill="#ff6400" d="M1564 393h8v8h-8z"/>
<path fill="#ff5f00" d="M1571 393h8v8h-8z"/>
<path fill="#ff5a00" d="M1578 393h8v8h-8z"/>
<path fill="#f50" d="M1585 393h8v8h-8z"/>
<path fill="#ff5100" d="M1592 393h8v8h-8z"/>
<path fill="#ff4c00" d="M1599 393h8v8h-8z"/>
<path fill="#ff4900" d="M1606 393h8v8h-8zM1585 407h8v8h-8z"/>
<path fill="#ff4500" d="M1613 393h8v8h-8zM1592 407h8v8h-8z"/>
<path fill="#ff4100" d="M1620 393h8v8h-8zM1599 407h8v8h-8z"/>
<path fill="#00ffa5" d="M1158 400h8v8h-8zM1214 407h8v8h-8zM1333 421h8v8h-8z"/>
<path fill="#00ffa4" d="M1165 400h8v8h-8zM1221 407h8v8h-8zM1277 414h8v8h-8z"/>
<path fill="#00ffa3" d="M1172 400h8v8h-8zM1228 407h8v8h-8zM1284 414h8v8h-8zM1340 421h8v8h-8z"/>
<path fill="#00ffa2" d="M1179 400h8v8h-8zM1235 407h8v8h-8zM1291 414h8v8h-8zM1347 421h8v8h-8z"/>
<path fill="#00ffa1" d="M1186 400h8v8h-8zM1242 407h8v8h-8z"/>
<path fill="#00ffa0" d="M1193 400h8v8h-8zM1298 414h8v8h-8z"/>
<path fill="#00ff9f" d="M1200 400h8v8h-8zM1249 407h8v8h-8zM1305 414h8v8h-8z"/>
<path fill="#11ff7c" d="M1361 400h8v8h-8z"/>
<path fill="#22ff7a" d="M1368 400h8v8h-8z"/>
<path fill="#33ff78" d="M1375 400h8v8h-8z"/>
<path fill="#43ff76" d="M1382 400h8v8h-8z"/>
<path fill="#54ff73" d="M1389 400h8v8h-8z"/>
<path fill="#65ff71" d="M1396 400h8v8h-8z"/>
<path fill="#76ff6f" d="M1403 400h8v8h-8z"/>
<path fill="#88ff6c" d="M1410 400h8v8h-8z"/>
<path fill="#99ff69" d="M1417 400h8v8h-8z"/>
<path fill="#acff67" d="M1424 400h8v8h-8z"/>
<path fill="#beff64" d="M1431 400h8v8h-8z"/>
<path fill="#d2ff61" d="M1438 400h8v8h-8z"/>
<path fill="#e6ff5e" d="M1445 400h8v8h-8z"/>
<path fill="#faff5b" d="M1452 400h8v8h-8z"/>
<path fill="#fff052" d="M1459 400h8v8h-8z"/>
<path fill="#ffde49" d="M1466 400h8v8h-8z"/>
<path fill="#ffcf41" d="M1473 400h8v8h-8z"/>
<path fill="#ffc03a" d="M1480 400h8v8h-8z"/>
<path fill="#ffb433" d="M1487 400h8v8h-8z"/>
<path fill="#ffa82d" d="M1494 400h8v8h-8z"/>
<path fill="#ff9e27" d="M1501 400h8v8h-8z"/>
<path fill="#ff9422" d="M1508 400h8v8h-8z"/>
<path fill="#ff8b1e" d="M1515 400h8v8h-8z"/>
<path fill="#ff8319" d="M1522 400h8v8h-8z"/>
<path fill="#ff7c15" d="M1529 400h8v8h-8z"/>
<path fill="#ff7511" d="M1536 400h8v8h-8z"/>
<path fill="#ff6e0e" d="M1543 400h8v8h-8z"/>
<path fill="#ff680a" d="M1550 400h8v8h-8z"/>
<path fill="#ff6307" d="M1557 400h8v8h-8z"/>
<path fill="#ff5d03" d="M1564 400h8v8h-8z"/>
<path fill="#ff4f00" d="M1585 400h8v8h-8z"/>
<path fill="#ff4b00" d="M1592 400h8v8h-8z"/>
<path fill="#ff4700" d="M1599 400h8v8h-8z"/>
<path fill="#ff4300" d="M1606 400h8v8h-8z"/>
<path fill="#ff3f00" d="M1613 400h8v8h-8z"/>
<path fill="#ff3c00" d="M1620 400h8v8h-8zM1599 414h8v8h-8z"/>
<path fill="#ff3900" d="M1627 400h8v8h-8z"/>
<path fill="#00ffad" d="M1158 407h8v8h-8zM1221 414h8v8h-8zM1291 421h8v8h-8z"/>
<path fill="#00ffac" d="M1165 407h8v8h-8zM1228 414h8v8h-8zM1298 421h8v8h-8z"/>
<path fill="#00ffab" d="M1172 407h8v8h-8zM1235 414h8v8h-8z"/>
<path fill="#0fa" d="M1179 407h8v8h-8zM1242 414h8v8h-8zM1305 421h8v8h-8z"/>
<path fill="#00ffa9" d="M1186 407h8v8h-8zM1249 414h8v8h-8zM1312 421h8v8h-8z"/>
<path fill="#00ffa8" d="M1193 407h8v8h-8zM1256 414h8v8h-8zM1319 421h8v8h-8z"/>
<path fill="#00ffa7" d="M1200 407h8v8h-8zM1263 414h8v8h-8z"/>
<path fill="#00ffa6" d="M1207 407h8v8h-8zM1270 414h8v8h-8zM1326 421h8v8h-8z"/>
<path fill="#00ff9e" d="M1256 407h8v8h-8zM1312 414h8v8h-8z"/>
<path fill="#00ff98" d="M1291 407h8v8h-8zM1340 414h8v8h-8z"/>
<path fill="#06ff89" d="M1354 407h8v8h-8z"/>
<path fill="#18ff87" d="M1361 407h8v8h-8z"/>
<path fill="#29ff85" d="M1368 407h8v8h-8z"/>
<path fill="#3aff83" d="M1375 407h8v8h-8z"/>
<path fill="#4bff81" d="M1382 407h8v8h-8z"/>
<path fill="#5dff7f" d="M1389 407h8v8h-8z"/>
<path fill="#6eff7c" d="M1396 407h8v8h-8z"/>
<path fill="#80ff7a" d="M1403 407h8v8h-8z"/>
<path fill="#93ff78" d="M1410 407h8v8h-8z"/>
<path fill="#a5ff75" d="M1417 407h8v8h-8z"/>
<path fill="#b9ff72" d="M1424 407h8v8h-8z"/>
<path fill="#ccff70" d="M1431 407h8v8h-8z"/>
<path fill="#e1ff6d" d="M1438 407h8v8h-8z"/>
<path fill="#f5ff6a" d="M1445 407h8v8h-8z"/>
<path fill="#fff462" d="M1452 407h8v8h-8z"/>
<path fill="#ffe158" d="M1459 407h8v8h-8z"/>
<path fill="#ffd04f" d="M1466 407h8v8h-8z"/>
<path fill="#ffc246" d="M1473 407h8v8h-8z"/>
<path fill="#ffb43f" d="M1480 407h8v8h-8z"/>
<path fill="#ffa838" d="M1487 407h8v8h-8z"/>
<path fill="#ff9e32" d="M1494 407h8v8h-8z"/>
<path fill="#ff942d" d="M1501 407h8v8h-8z"/>
<path fill="#ff8b27" d="M1508 407h8v8h-8z"/>
<path fill="#ff8223" d="M1515 407h8v8h-8z"/>
<path fill="#ff7b1e" d="M1522 407h8v8h-8z"/>
<path fill="#ff741a" d="M1529 407h8v8h-8z"/>
<path fill="#ff6d16" d="M1536 407h8v8h-8z"/>
<path fill="#ff6712" d="M1543 407h8v8h-8z"/>
<path fill="#ff610f" d="M1550 407h8v8h-8z"/>
<path fill="#ff5c0c" d="M1557 407h8v8h-8z"/>
<path fill="#ff5708" d="M1564 407h8v8h-8z"/>
<path fill="#ff5205" d="M1571 407h8v8h-8z"/>
<path fill="#ff4d02" d="M1578 407h8v8h-8z"/>
<path fill="#ff3e00" d="M1606 407h8v8h-8z"/>
<path fill="#ff3a00" d="M1613 407h8v8h-8z"/>
<path fill="#ff3700" d="M1620 407h8v8h-8z"/>
<path fill="#ff3400" d="M1627 407h8v8h-8z"/>
<path fill="#ff3100" d="M1634 407h8v8h-8z"/>
<path fill="#ff2e00" d="M1641 407h8v8h-8z"/>
<path fill="#00ffb5" d="M1158 414h15v8h-15zM1235 421h8v8h-8zM1312 428h8v8h-8z"/>
<path fill="#00ffb4" d="M1172 414h8v8h-8zM1242 421h8v8h-8zM1319 428h8v8h-8z"/>
<path fill="#00ffb3" d="M1179 414h8v8h-8zM1249 421h8v8h-8zM1326 428h8v8h-8z"/>
<path fill="#00ffb2" d="M1186 414h8v8h-8zM1256 421h8v8h-8z"/>
<path fill="#00ffb1" d="M1193 414h8v8h-8zM1263 421h8v8h-8zM1333 428h8v8h-8z"/>
<path fill="#00ffb0" d="M1200 414h8v8h-8zM1270 421h8v8h-8zM1340 428h8v8h-8z"/>
<path fill="#00ffaf" d="M1207 414h8v8h-8zM1277 421h8v8h-8z"/>
<path fill="#00ffae" d="M1214 414h8v8h-8zM1284 421h8v8h-8z"/>
<path fill="#0dff94" d="M1354 414h8v8h-8z"/>
<path fill="#1fff92" d="M1361 414h8v8h-8z"/>
<path fill="#31ff91" d="M1368 414h8v8h-8z"/>
<path fill="#43ff8f" d="M1375 414h8v8h-8z"/>
<path fill="#54ff8d" d="M1382 414h8v8h-8z"/>
<path fill="#66ff8b" d="M1389 414h8v8h-8z"/>
<path fill="#79ff89" d="M1396 414h8v8h-8z"/>
<path fill="#8cff86" d="M1403 414h8v8h-8z"/>
<path fill="#9fff84" d="M1410 414h8v8h-8z"/>
<path fill="#b2ff82" d="M1417 414h8v8h-8z"/>
<path fill="#c7ff7f" d="M1424 414h8v8h-8z"/>
<path fill="#dbff7d" d="M1431 414h8v8h-8z"/>
<path fill="#f1ff7a" d="M1438 414h8v8h-8z"/>
<path fill="#fff774" d="M1445 414h8v8h-8z"/>
<path fill="#ffe468" d="M1452 414h8v8h-8z"/>
<path fill="#ffd25d" d="M1459 414h8v8h-8z"/>
<path fill="#ffc354" d="M1466 414h8v8h-8z"/>
<path fill="#ffb54c" d="M1473 414h8v8h-8z"/>
<path fill="#ffa944" d="M1480 414h8v8h-8z"/>
<path fill="#ff9e3d" d="M1487 414h8v8h-8z"/>
<path fill="#ff9337" d="M1494 414h8v8h-8z"/>
<path fill="#ff8a32" d="M1501 414h8v8h-8z"/>
<path fill="#ff822c" d="M1508 414h8v8h-8z"/>
<path fill="#ff7a27" d="M1515 414h8v8h-8z"/>
<path fill="#ff7323" d="M1522 414h8v8h-8z"/>
<path fill="#ff6c1f" d="M1529 414h8v8h-8z"/>
<path fill="#ff661b" d="M1536 414h8v8h-8z"/>
<path fill="#ff6017" d="M1543 414h8v8h-8z"/>
<path fill="#ff5a13" d="M1550 414h8v8h-8z"/>
<path fill="#ff5510" d="M1557 414h8v8h-8z"/>
<path fill="#ff500d" d="M1564 414h8v8h-8z"/>
<path fill="#ff4c0a" d="M1571 414h8v8h-8z"/>
<path fill="#ff4707" d="M1578 414h8v8h-8z"/>
<path fill="#ff4304" d="M1585 414h8v8h-8z"/>
<path fill="#ff4001" d="M1592 414h8v8h-8z"/>
<path fill="#ff3800" d="M1606 414h8v8h-8z"/>
<path fill="#ff3500" d="M1613 414h8v8h-8z"/>
<path fill="#ff3200" d="M1620 414h8v8h-8z"/>
<path fill="#ff2f00" d="M1627 414h8v8h-8z"/>
<path fill="#ff2c00" d="M1634 414h8v8h-8z"/>
<path fill="#ff2900" d="M1641 414h8v8h-8z"/>
<path fill="#ff2700" d="M1648 414h8v8h-8zM1634 421h8v8h-8z"/>
<path fill="#00ffbe" d="M1165 421h8v8h-8zM1249 428h8v8h-8zM1340 435h8v8h-8z"/>
<path fill="#00ffbd" d="M1172 421h8v8h-8zM1256 428h8v8h-8z"/>
<path fill="#00ffbc" d="M1179 421h8v8h-8zM1263 428h8v8h-8z"/>
<path fill="#0fb" d="M1186 421h15v8h-15zM1270 428h8v8h-8z"/>
<path fill="#00ffba" d="M1200 421h8v8h-8zM1277 428h8v8h-8z"/>
<path fill="#00ffb9" d="M1207 421h8v8h-8zM1284 428h8v8h-8z"/>
<path fill="#00ffb8" d="M1214 421h8v8h-8zM1291 428h8v8h-8z"/>
<path fill="#00ffb7" d="M1221 421h8v8h-8zM1298 428h8v8h-8z"/>
<path fill="#00ffb6" d="M1228 421h8v8h-8zM1305 428h8v8h-8z"/>
<path fill="#14ffa0" d="M1354 421h8v8h-8z"/>
<path fill="#27ff9f" d="M1361 421h8v8h-8z"/>
<path fill="#39ff9d" d="M1368 421h8v8h-8z"/>
<path fill="#4bff9b" d="M1375 421h8v8h-8z"/>
<path fill="#5eff99" d="M1382 421h8v8h-8z"/>
<path fill="#71ff98" d="M1389 421h8v8h-8z"/>
<path fill="#84ff96" d="M1396 421h8v8h-8z"/>
<path fill="#98ff94" d="M1403 421h8v8h-8z"/>
<path fill="#acff91" d="M1410 421h8v8h-8z"/>
<path fill="#c0ff8f" d="M1417 421h8v8h-8z"/>
<path fill="#d6ff8d" d="M1424 421h8v8h-8z"/>
<path fill="#ecff8b" d="M1431 421h8v8h-8z"/>
<path fill="#fffc86" d="M1438 421h8v8h-8z"/>
<path fill="#ffe779" d="M1445 421h8v8h-8z"/>
<path fill="#ffd46d" d="M1452 421h8v8h-8z"/>
<path fill="#ffc462" d="M1459 421h8v8h-8z"/>
<path fill="#ffb659" d="M1466 421h8v8h-8z"/>
<path fill="#ffa951" d="M1473 421h8v8h-8z"/>
<path fill="#ff9e49" d="M1480 421h8v8h-8z"/>
<path fill="#ff9342" d="M1487 421h8v8h-8z"/>
<path fill="#ff8a3c" d="M1494 421h8v8h-8z"/>
<path fill="#ff8136" d="M1501 421h8v8h-8z"/>
<path fill="#ff7931" d="M1508 421h8v8h-8z"/>
<path fill="#ff712c" d="M1515 421h8v8h-8z"/>
<path fill="#ff6b27" d="M1522 421h8v8h-8z"/>
<path fill="#ff6423" d="M1529 421h8v8h-8z"/>
<path fill="#ff5e1f" d="M1536 421h8v8h-8z"/>
<path fill="#ff591b" d="M1543 421h8v8h-8z"/>
<path fill="#ff5318" d="M1550 421h8v8h-8z"/>
<path fill="#ff4f14" d="M1557 421h8v8h-8z"/>
<path fill="#ff4a11" d="M1564 421h8v8h-8z"/>
<path fill="#ff460e" d="M1571 421h8v8h-8z"/>
<path fill="#ff420b" d="M1578 421h8v8h-8z"/>
<path fill="#ff3e08" d="M1585 421h8v8h-8z"/>
<path fill="#ff3a06" d="M1592 421h8v8h-8z"/>
<path fill="#ff3703" d="M1599 421h8v8h-8z"/>
<path fill="#f30" d="M1606 421h8v8h-8z"/>
<path fill="#ff3000" d="M1613 421h8v8h-8z"/>
<path fill="#ff2d00" d="M1620 421h8v8h-8z"/>
<path fill="#ff2a00" d="M1627 421h8v8h-8z"/>
<path fill="#ff2500" d="M1641 421h8v8h-8zM1627 428h8v8h-8z"/>
<path fill="#f20" d="M1648 421h8v8h-8z"/>
<path fill="#ff2000" d="M1655 421h8v8h-8zM1641 428h8v8h-8z"/>
<path fill="#00ffc7" d="M1165 428h15v8h-15zM1270 435h15v8h-15z"/>
<path fill="#00ffc6" d="M1179 428h8v8h-8zM1284 435h8v8h-8z"/>
<path fill="#00ffc5" d="M1186 428h15v8h-15zM1291 435h8v8h-8z"/>
<path fill="#00ffc4" d="M1200 428h8v8h-8zM1298 435h8v8h-8z"/>
<path fill="#00ffc3" d="M1207 428h8v8h-8zM1305 435h8v8h-8z"/>
<path fill="#00ffc2" d="M1214 428h15v8h-15zM1312 435h8v8h-8z"/>
<path fill="#00ffc1" d="M1228 428h8v8h-8zM1319 435h8v8h-8z"/>
<path fill="#00ffc0" d="M1235 428h8v8h-8zM1326 435h8v8h-8z"/>
<path fill="#00ffbf" d="M1242 428h8v8h-8zM1333 435h8v8h-8z"/>
<path fill="#08ffaf" d="M1347 428h8v8h-8z"/>
<path fill="#1cffad" d="M1354 428h8v8h-8z"/>
<path fill="#2fffac" d="M1361 428h8v8h-8z"/>
<path fill="#42ffaa" d="M1368 428h8v8h-8z"/>
<path fill="#55ffa9" d="M1375 428h8v8h-8z"/>
<path fill="#68ffa7" d="M1382 428h8v8h-8z"/>
<path fill="#7cffa6" d="M1389 428h8v8h-8z"/>
<path fill="#90ffa4" d="M1396 428h8v8h-8z"/>
<path fill="#a5ffa2" d="M1403 428h8v8h-8z"/>
<path fill="#baffa0" d="M1410 428h8v8h-8z"/>
<path fill="#d0ff9e" d="M1417 428h8v8h-8z"/>
<path fill="#e6ff9c" d="M1424 428h8v8h-8z"/>
<path fill="#feff9a" d="M1431 428h8v8h-8z"/>
<path fill="#ffea8b" d="M1438 428h8v8h-8z"/>
<path fill="#ffd77e" d="M1445 428h8v8h-8z"/>
<path fill="#ffc672" d="M1452 428h8v8h-8z"/>
<path fill="#ffb767" d="M1459 428h8v8h-8z"/>
<path fill="#ffaa5e" d="M1466 428h8v8h-8z"/>
<path fill="#ff9e56" d="M1473 428h8v8h-8z"/>
<path fill="#ff934e" d="M1480 428h8v8h-8z"/>
<path fill="#ff8947" d="M1487 428h8v8h-8z"/>
<path fill="#ff8041" d="M1494 428h8v8h-8z"/>
<path fill="#ff783b" d="M1501 428h8v8h-8z"/>
<path fill="#ff7035" d="M1508 428h8v8h-8z"/>
<path fill="#ff6930" d="M1515 428h8v8h-8z"/>
<path fill="#ff632c" d="M1522 428h8v8h-8z"/>
<path fill="#ff5d27" d="M1529 428h8v8h-8z"/>
<path fill="#ff5723" d="M1536 428h8v8h-8z"/>
<path fill="#ff5220" d="M1543 428h8v8h-8z"/>
<path fill="#ff4d1c" d="M1550 428h8v8h-8z"/>
<path fill="#ff4819" d="M1557 428h8v8h-8z"/>
<path fill="#ff4415" d="M1564 428h8v8h-8z"/>
<path fill="#ff4012" d="M1571 428h8v8h-8z"/>
<path fill="#ff3c0f" d="M1578 428h8v8h-8z"/>
<path fill="#ff380c" d="M1585 428h8v8h-8z"/>
<path fill="#ff350a" d="M1592 428h8v8h-8z"/>
<path fill="#ff3107" d="M1599 428h8v8h-8z"/>
<path fill="#ff2e04" d="M1606 428h8v8h-8z"/>
<path fill="#ff2b02" d="M1613 428h8v8h-8z"/>
<path fill="#ff2800" d="M1620 428h8v8h-8z"/>
<path fill="#ff2300" d="M1634 428h8v8h-8z"/>
<path fill="#ff1e00" d="M1648 428h8v8h-8zM1634 435h8v8h-8z"/>
<path fill="#ff1b00" d="M1655 428h8v8h-8zM1641 435h8v8h-8z"/>
<path fill="#ff1900" d="M1662 428h8v8h-8zM1648 435h8v8h-8z"/>
<path fill="#ff1700" d="M1669 428h8v8h-8zM1655 435h8v8h-8zM1641 442h8v8h-8z"/>
<path fill="#00ffd1" d="M1165 435h15v8h-15zM1298 442h15v8h-15z"/>
<path fill="#00ffd0" d="M1179 435h15v8h-15zM1312 442h8v8h-8z"/>
<path fill="#00ffcf" d="M1193 435h8v8h-8zM1319 442h8v8h-8z"/>
<path fill="#00ffce" d="M1200 435h15v8h-15zM1326 442h15v8h-15z"/>
<path fill="#00ffcd" d="M1214 435h15v8h-15z"/>
<path fill="#0fc" d="M1228 435h8v8h-8z"/>
<path fill="#00ffcb" d="M1235 435h8v8h-8z"/>
<path fill="#00ffca" d="M1242 435h15v8h-15z"/>
<path fill="#00ffc9" d="M1256 435h8v8h-8z"/>
<path fill="#00ffc8" d="M1263 435h8v8h-8z"/>
<path fill="#10ffbd" d="M1347 435h8v8h-8z"/>
<path fill="#24ffbb" d="M1354 435h8v8h-8z"/>
<path fill="#38ffba" d="M1361 435h8v8h-8z"/>
<path fill="#4bffb9" d="M1368 435h8v8h-8z"/>
<path fill="#5fffb8" d="M1375 435h8v8h-8z"/>
<path fill="#74ffb6" d="M1382 435h8v8h-8z"/>
<path fill="#88ffb5" d="M1389 435h8v8h-8z"/>
<path fill="#9dffb3" d="M1396 435h8v8h-8z"/>
<path fill="#b3ffb2" d="M1403 435h8v8h-8z"/>
<path fill="#caffb0" d="M1410 435h8v8h-8z"/>
<path fill="#e1ffae" d="M1417 435h8v8h-8z"/>
<path fill="#f9ffad" d="M1424 435h8v8h-8z"/>
<path fill="#ffee9f" d="M1431 435h8v8h-8z"/>
<path fill="#ffd990" d="M1438 435h8v8h-8z"/>
<path fill="#ffc882" d="M1445 435h8v8h-8z"/>
<path fill="#ffb877" d="M1452 435h8v8h-8z"/>
<path fill="#ffaa6c" d="M1459 435h8v8h-8z"/>
<path fill="#ff9e63" d="M1466 435h8v8h-8z"/>
<path fill="#ff925a" d="M1473 435h8v8h-8z"/>
<path fill="#ff8853" d="M1480 435h8v8h-8z"/>
<path fill="#ff7f4c" d="M1487 435h8v8h-8z"/>
<path fill="#ff7745" d="M1494 435h8v8h-8z"/>
<path fill="#ff6f3f" d="M1501 435h8v8h-8z"/>
<path fill="#ff683a" d="M1508 435h8v8h-8z"/>
<path fill="#ff6135" d="M1515 435h8v8h-8z"/>
<path fill="#ff5b30" d="M1522 435h8v8h-8z"/>
<path fill="#ff552c" d="M1529 435h8v8h-8z"/>
<path fill="#ff5027" d="M1536 435h8v8h-8z"/>
<path fill="#ff4b24" d="M1543 435h8v8h-8z"/>
<path fill="#ff4620" d="M1550 435h8v8h-8z"/>
<path fill="#ff421c" d="M1557 435h8v8h-8z"/>
<path fill="#ff3e19" d="M1564 435h8v8h-8z"/>
<path fill="#ff3a16" d="M1571 435h8v8h-8z"/>
<path fill="#ff3613" d="M1578 435h8v8h-8z"/>
<path fill="#ff3210" d="M1585 435h8v8h-8z"/>
<path fill="#ff2f0e" d="M1592 435h8v8h-8z"/>
<path fill="#ff2c0b" d="M1599 435h8v8h-8z"/>
<path fill="#ff2908" d="M1606 435h8v8h-8z"/>
<path fill="#ff2606" d="M1613 435h8v8h-8z"/>
<path fill="#ff2303" d="M1620 435h8v8h-8z"/>
<path fill="#ff2001" d="M1627 435h8v8h-8z"/>
<path fill="#ff1500" d="M1662 435h8v8h-8zM1648 442h8v8h-8z"/>
<path fill="#ff1200" d="M1669 435h8v8h-8zM1655 442h8v8h-8z"/>
<path fill="#ff1000" d="M1676 435h8v8h-8zM1662 442h8v8h-8z"/>
<path fill="#00ffdc" d="M1165 442h15v8h-15z"/>
<path fill="#00ffdb" d="M1179 442h15v8h-15z"/>
<path fill="#00ffda" d="M1193 442h15v8h-15z"/>
<path fill="#00ffd9" d="M1207 442h15v8h-15z"/>
<path fill="#00ffd8" d="M1221 442h15v8h-15z"/>
<path fill="#00ffd7" d="M1235 442h15v8h-15z"/>
<path fill="#00ffd6" d="M1249 442h8v8h-8z"/>
<path fill="#00ffd5" d="M1256 442h15v8h-15z"/>
<path fill="#00ffd4" d="M1270 442h15v8h-15z"/>
<path fill="#00ffd3" d="M1284 442h8v8h-8z"/>
<path fill="#00ffd2" d="M1291 442h8v8h-8z"/>
<path fill="#03ffcd" d="M1340 442h8v8h-8z"/>
<path fill="#18ffcc" d="M1347 442h8v8h-8z"/>
<path fill="#2dffcb" d="M1354 442h8v8h-8z"/>
<path fill="#41ffca" d="M1361 442h8v8h-8z"/>
<path fill="#56ffc9" d="M1368 442h8v8h-8z"/>
<path fill="#6bffc8" d="M1375 442h8v8h-8z"/>
<path fill="#80ffc7" d="M1382 442h8v8h-8z"/>
<path fill="#96ffc5" d="M1389 442h8v8h-8z"/>
<path fill="#acffc4" d="M1396 442h8v8h-8z"/>
<path fill="#c3ffc3" d="M1403 442h8v8h-8z"/>
<path fill="#dbffc2" d="M1410 442h8v8h-8z"/>
<path fill="#f3ffc0" d="M1417 442h8v8h-8z"/>
<path fill="#fff2b5" d="M1424 442h8v8h-8z"/>
<path fill="#ffdca3" d="M1431 442h8v8h-8z"/>
<path fill="#ffc994" d="M1438 442h8v8h-8z"/>
<path fill="#ffb987" d="M1445 442h8v8h-8z"/>
<path fill="#ffaa7b" d="M1452 442h8v8h-8z"/>
<path fill="#ff9d71" d="M1459 442h8v8h-8z"/>
<path fill="#ff9267" d="M1466 442h8v8h-8z"/>
<path fill="#ff875f" d="M1473 442h8v8h-8z"/>
<path fill="#ff7e57" d="M1480 442h8v8h-8z"/>
<path fill="#ff7550" d="M1487 442h8v8h-8z"/>
<path fill="#ff6d49" d="M1494 442h8v8h-8z"/>
<path fill="#ff6643" d="M1501 442h8v8h-8z"/>
<path fill="#ff5f3e" d="M1508 442h8v8h-8z"/>
<path fill="#ff5939" d="M1515 442h8v8h-8z"/>
<path fill="#ff5334" d="M1522 442h8v8h-8z"/>
<path fill="#ff4e30" d="M1529 442h8v8h-8z"/>
<path fill="#ff492b" d="M1536 442h8v8h-8z"/>
<path fill="#ff4427" d="M1543 442h8v8h-8z"/>
<path fill="#ff4024" d="M1550 442h8v8h-8z"/>
<path fill="#ff3c20" d="M1557 442h8v8h-8z"/>
<path fill="#ff381d" d="M1564 442h8v8h-8z"/>
<path fill="#ff341a" d="M1571 442h8v8h-8z"/>
<path fill="#ff3017" d="M1578 442h8v8h-8z"/>
<path fill="#ff2d14" d="M1585 442h8v8h-8z"/>
<path fill="#ff2a11" d="M1592 442h8v8h-8z"/>
<path fill="#ff270f" d="M1599 442h8v8h-8z"/>
<path fill="#ff240c" d="M1606 442h8v8h-8z"/>
<path fill="#ff210a" d="M1613 442h8v8h-8z"/>
<path fill="#ff1e07" d="M1620 442h8v8h-8z"/>
<path fill="#ff1c05" d="M1627 442h8v8h-8z"/>
<path fill="#ff1902" d="M1634 442h8v8h-8z"/>
<path fill="#ff0e00" d="M1669 442h8v8h-8zM1655 449h8v8h-8z"/>
<path fill="#ff0c00" d="M1676 442h8v8h-8zM1662 449h8v8h-8z"/>
<path fill="#ff0a00" d="M1683 442h8v8h-8zM1669 449h8v8h-8z"/>
<path fill="#00ffe7" d="M1165 449h22v8h-22z"/>
<path fill="#00ffe6" d="M1186 449h22v8h-22z"/>
<path fill="#00ffe5" d="M1207 449h22v8h-22z"/>
<path fill="#00ffe4" d="M1228 449h22v8h-22z"/>
<path fill="#00ffe3" d="M1249 449h15v8h-15z"/>
<path fill="#00ffe2" d="M1263 449h15v8h-15z"/>
<path fill="#00ffe1" d="M1277 449h22v8h-22z"/>
<path fill="#00ffe0" d="M1298 449h15v8h-15z"/>
<path fill="#00ffdf" d="M1312 449h8v8h-8z"/>
<path fill="#00ffde" d="M1319 449h15v8h-15z"/>
<path fill="#0fd" d="M1333 449h8v8h-8z"/>
<path fill="#0bffdd" d="M1340 449h8v8h-8z"/>
<path fill="#21ffdc" d="M1347 449h8v8h-8z"/>
<path fill="#36ffdb" d="M1354 449h8v8h-8z"/>
<path fill="#4cffdb" d="M1361 449h8v8h-8z"/>
<path fill="#61ffda" d="M1368 449h8v8h-8z"/>
<path fill="#77ffd9" d="M1375 449h8v8h-8z"/>
<path fill="#8dffd8" d="M1382 449h8v8h-8z"/>
<path fill="#a4ffd8" d="M1389 449h8v8h-8z"/>
<path fill="#bcffd7" d="M1396 449h8v8h-8z"/>
<path fill="#d4ffd6" d="M1403 449h8v8h-8z"/>
<path fill="#eeffd5" d="M1410 449h8v8h-8z"/>
<path fill="#fff6cd" d="M1417 449h8v8h-8z"/>
<path fill="#ffdfb9" d="M1424 449h8v8h-8z"/>
<path fill="#ffcba7" d="M1431 449h8v8h-8z"/>
<path fill="#ffba98" d="M1438 449h8v8h-8z"/>
<path fill="#ffab8b" d="M1445 449h8v8h-8z"/>
<path fill="#ff9d7f" d="M1452 449h8v8h-8z"/>
<path fill="#ff9175" d="M1459 449h8v8h-8z"/>
<path fill="#ff876b" d="M1466 449h8v8h-8z"/>
<path fill="#ff7d63" d="M1473 449h8v8h-8z"/>
<path fill="#ff745b" d="M1480 449h8v8h-8z"/>
<path fill="#ff6c54" d="M1487 449h8v8h-8z"/>
<path fill="#ff644d" d="M1494 449h8v8h-8z"/>
<path fill="#ff5e47" d="M1501 449h8v8h-8z"/>
<path fill="#ff5742" d="M1508 449h8v8h-8z"/>
<path fill="#ff513d" d="M1515 449h8v8h-8z"/>
<path fill="#ff4c38" d="M1522 449h8v8h-8z"/>
<path fill="#ff4733" d="M1529 449h8v8h-8z"/>
<path fill="#ff422f" d="M1536 449h8v8h-8z"/>
<path fill="#ff3e2b" d="M1543 449h8v8h-8z"/>
<path fill="#ff3927" d="M1550 449h8v8h-8z"/>
<path fill="#ff3524" d="M1557 449h8v8h-8z"/>
<path fill="#ff3221" d="M1564 449h8v8h-8z"/>
<path fill="#ff2e1d" d="M1571 449h8v8h-8z"/>
<path fill="#ff2b1a" d="M1578 449h8v8h-8z"/>
<path fill="#ff2718" d="M1585 449h8v8h-8z"/>
<path fill="#ff2415" d="M1592 449h8v8h-8z"/>
<path fill="#ff2112" d="M1599 449h8v8h-8z"/>
<path fill="#ff1f10" d="M1606 449h8v8h-8z"/>
<path fill="#ff1c0d" d="M1613 449h8v8h-8z"/>
<path fill="#ff190b" d="M1620 449h8v8h-8z"/>
<path fill="#ff1708" d="M1627 449h8v8h-8z"/>
<path fill="#ff1506" d="M1634 449h8v8h-8z"/>
<path fill="#ff1204" d="M1641 449h8v8h-8z"/>
<path fill="#ff1002" d="M1648 449h8v8h-8z"/>
<path fill="#ff0800" d="M1676 449h8v8h-8z"/>
<path fill="#ff0600" d="M1683 449h8v8h-8z"/>
<path fill="#ff0400" d="M1690 449h8v8h-8z"/>
<path fill="#ff0200" d="M1697 449h8v8h-8z"/>
<path fill="#00fff3" d="M1172 456h29v8h-29z"/>
<path fill="#00fff2" d="M1200 456h43v8h-43z"/>
<path fill="#00fff1" d="M1242 456h36v8h-36z"/>
<path fill="#00fff0" d="M1277 456h36v8h-36z"/>
<path fill="#00ffef" d="M1312 456h22v8h-22z"/>
<path fill="#0fe" d="M1333 456h8v8h-8z"/>
<path fill="#14ffee" d="M1340 456h8v8h-8z"/>
<path fill="#2bffee" d="M1347 456h8v8h-8z"/>
<path fill="#40ffee" d="M1354 456h8v8h-8z"/>
<path fill="#57ffed" d="M1361 456h8v8h-8z"/>
<path fill="#6dffed" d="M1368 456h8v8h-8z"/>
<path fill="#84ffec" d="M1375 456h8v8h-8z"/>
<path fill="#9cffec" d="M1382 456h8v8h-8z"/>
<path fill="#b4ffec" d="M1389 456h8v8h-8z"/>
<path fill="#cdffeb" d="M1396 456h8v8h-8z"/>
<path fill="#e7ffeb" d="M1403 456h8v8h-8z"/>
<path fill="#fffbe7" d="M1410 456h8v8h-8z"/>
<path fill="#ffe3d0" d="M1417 456h8v8h-8z"/>
<path fill="#ffcebc" d="M1424 456h8v8h-8z"/>
<path fill="#ffbbab" d="M1431 456h8v8h-8z"/>
<path fill="#ffab9c" d="M1438 456h8v8h-8z"/>
<path fill="#ff9d8f" d="M1445 456h8v8h-8z"/>
<path fill="#ff9183" d="M1452 456h8v8h-8z"/>
<path fill="#ff8679" d="M1459 456h8v8h-8z"/>
<path fill="#ff7c6f" d="M1466 456h8v8h-8z"/>
<path fill="#ff7367" d="M1473 456h8v8h-8z"/>
<path fill="#ff6a5f" d="M1480 456h8v8h-8z"/>
<path fill="#ff6358" d="M1487 456h8v8h-8z"/>
<path fill="#ff5c51" d="M1494 456h8v8h-8z"/>
<path fill="#ff554b" d="M1501 456h8v8h-8z"/>
<path fill="#ff4f46" d="M1508 456h8v8h-8z"/>
<path fill="#ff4a41" d="M1515 456h8v8h-8z"/>
<path fill="#ff453c" d="M1522 456h8v8h-8z"/>
<path fill="#ff4037" d="M1529 456h8v8h-8z"/>
<path fill="#ff3b33" d="M1536 456h8v8h-8z"/>
<path fill="#ff372f" d="M1543 456h8v8h-8z"/>
<path fill="#ff332b" d="M1550 456h8v8h-8z"/>
<path fill="#ff2f27" d="M1557 456h8v8h-8z"/>
<path fill="#ff2c24" d="M1564 456h8v8h-8z"/>
<path fill="#ff2821" d="M1571 456h8v8h-8z"/>
<path fill="#ff251e" d="M1578 456h8v8h-8z"/>
<path fill="#ff221b" d="M1585 456h8v8h-8z"/>
<path fill="#ff1f18" d="M1592 456h8v8h-8z"/>
<path fill="#ff1c15" d="M1599 456h8v8h-8z"/>
<path fill="#ff1a13" d="M1606 456h8v8h-8z"/>
<path fill="#ff1710" d="M1613 456h8v8h-8z"/>
<path fill="#ff150e" d="M1620 456h8v8h-8z"/>
<path fill="#ff120c" d="M1627 456h8v8h-8z"/>
<path fill="#ff1009" d="M1634 456h8v8h-8z"/>
<path fill="#ff0e07" d="M1641 456h8v8h-8z"/>
<path fill="#ff0b05" d="M1648 456h8v8h-8z"/>
<path fill="#ff0903" d="M1655 456h8v8h-8z"/>
<path fill="#ff0701" d="M1662 456h8v8h-8z"/>
<path fill="#ff0500" d="M1669 456h8v8h-8z"/>
<path fill="#ff0300" d="M1676 456h8v8h-8z"/>
<path fill="#ff0100" d="M1683 456h8v8h-8z"/>
<path fill="#f00" d="M1690 456h22v8h-22zM1676 463h43v8h-43zM1690 470h43v8h-43zM1704 477h36v8h-36zM1711 484h36v8h-36zM1725 491h29v8h-29zM1739 498h22v8h-22zM1746 505h8v8h-8z"/>
<path fill="#00feff" d="M1172 463h106v8h-106z"/>
<path fill="#00fdff" d="M1277 463h57v8h-57z"/>
<path fill="#05fdff" d="M1333 463h8v8h-8z"/>
<path fill="#1dfdff" d="M1340 463h8v8h-8z"/>
<path fill="#34fdff" d="M1347 463h8v8h-8z"/>
<path fill="#4bfdff" d="M1354 463h8v8h-8z"/>
<path fill="#62fcff" d="M1361 463h8v8h-8z"/>
<path fill="#79fcff" d="M1368 463h8v8h-8z"/>
<path fill="#91fcff" d="M1375 463h8v8h-8z"/>
<path fill="#aafcff" d="M1382 463h8v8h-8z"/>
<path fill="#c4fcff" d="M1389 463h8v8h-8z"/>
<path fill="#defcff" d="M1396 463h8v8h-8z"/>
<path fill="#fafcff" d="M1403 463h8v8h-8z"/>
<path fill="#ffe6ea" d="M1410 463h8v8h-8z"/>
<path fill="#ffd0d3" d="M1417 463h8v8h-8z"/>
<path fill="#ffbdbf" d="M1424 463h8v8h-8z"/>
<path fill="#ffacaf" d="M1431 463h8v8h-8z"/>
<path fill="#ff9da0" d="M1438 463h8v8h-8z"/>
<path fill="#ff9093" d="M1445 463h8v8h-8z"/>
<path fill="#ff8587" d="M1452 463h8v8h-8z"/>
<path fill="#ff7a7d" d="M1459 463h8v8h-8z"/>
<path fill="#ff7173" d="M1466 463h8v8h-8z"/>
<path fill="#ff696b" d="M1473 463h8v8h-8z"/>
<path fill="#ff6163" d="M1480 463h8v8h-8z"/>
<path fill="#ff5a5c" d="M1487 463h8v8h-8z"/>
<path fill="#ff5355" d="M1494 463h8v8h-8z"/>
<path fill="#ff4d4f" d="M1501 463h8v8h-8z"/>
<path fill="#ff4849" d="M1508 463h8v8h-8z"/>
<path fill="#ff4244" d="M1515 463h8v8h-8z"/>
<path fill="#ff3d3f" d="M1522 463h8v8h-8z"/>
<path fill="#ff393b" d="M1529 463h8v8h-8z"/>
<path fill="#ff3536" d="M1536 463h8v8h-8z"/>
<path fill="#ff3132" d="M1543 463h8v8h-8z"/>
<path fill="#ff2d2f" d="M1550 463h8v8h-8z"/>
<path fill="#ff292b" d="M1557 463h8v8h-8z"/>
<path fill="#ff2628" d="M1564 463h8v8h-8z"/>
<path fill="#ff2324" d="M1571 463h8v8h-8z"/>
<path fill="#ff1f21" d="M1578 463h8v8h-8z"/>
<path fill="#ff1d1e" d="M1585 463h8v8h-8z"/>
<path fill="#ff1a1b" d="M1592 463h8v8h-8z"/>
<path fill="#ff1719" d="M1599 463h8v8h-8z"/>
<path fill="#ff1416" d="M1606 463h8v8h-8z"/>
<path fill="#ff1214" d="M1613 463h8v8h-8z"/>
<path fill="#ff1011" d="M1620 463h8v8h-8z"/>
<path fill="#ff0d0f" d="M1627 463h8v8h-8z"/>
<path fill="#ff0b0d" d="M1634 463h8v8h-8z"/>
<path fill="#ff090a" d="M1641 463h8v8h-8z"/>
<path fill="#ff0708" d="M1648 463h8v8h-8z"/>
<path fill="#ff0506" d="M1655 463h8v8h-8z"/>
<path fill="#ff0204" d="M1662 463h8v8h-8z"/>
<path fill="#ff0002" d="M1669 463h8v8h-8zM1704 484h8v8h-8zM1725 498h8v8h-8zM1739 505h8v8h-8z"/>
<path fill="#00f1ff" d="M1172 470h29v8h-29z"/>
<path fill="#00f0ff" d="M1200 470h29v8h-29z"/>
<path fill="#00efff" d="M1228 470h29v8h-29z"/>
<path fill="#0ef" d="M1256 470h22v8h-22z"/>
<path fill="#00edff" d="M1277 470h22v8h-22z"/>
<path fill="#00ecff" d="M1298 470h15v8h-15z"/>
<path fill="#00ebff" d="M1312 470h22v8h-22z"/>
<path fill="#0eeaff" d="M1333 470h8v8h-8z"/>
<path fill="#24eaff" d="M1340 470h8v8h-8z"/>
<path fill="#3ae9ff" d="M1347 470h8v8h-8z"/>
<path fill="#50e9ff" d="M1354 470h8v8h-8z"/>
<path fill="#66e8ff" d="M1361 470h8v8h-8z"/>
<path fill="#7de8ff" d="M1368 470h8v8h-8z"/>
<path fill="#94e7ff" d="M1375 470h8v8h-8z"/>
<path fill="#ace6ff" d="M1382 470h8v8h-8z"/>
<path fill="#c4e6ff" d="M1389 470h8v8h-8z"/>
<path fill="#dee5ff" d="M1396 470h8v8h-8z"/>
<path fill="#f8e5ff" d="M1403 470h8v8h-8z"/>
<path fill="#ffd3ec" d="M1410 470h8v8h-8z"/>
<path fill="#ffbed6" d="M1417 470h8v8h-8z"/>
<path fill="#ffadc3" d="M1424 470h8v8h-8z"/>
<path fill="#ff9db2" d="M1431 470h8v8h-8z"/>
<path fill="#ff90a3" d="M1438 470h8v8h-8z"/>
<path fill="#ff8496" d="M1445 470h8v8h-8z"/>
<path fill="#ff798b" d="M1452 470h8v8h-8z"/>
<path fill="#ff7080" d="M1459 470h8v8h-8z"/>
<path fill="#ff6777" d="M1466 470h8v8h-8z"/>
<path fill="#ff5f6e" d="M1473 470h8v8h-8z"/>
<path fill="#ff5867" d="M1480 470h8v8h-8z"/>
<path fill="#ff515f" d="M1487 470h8v8h-8z"/>
<path fill="#ff4b59" d="M1494 470h8v8h-8z"/>
<path fill="#ff4553" d="M1501 470h8v8h-8z"/>
<path fill="#ff404d" d="M1508 470h8v8h-8z"/>
<path fill="#ff3b48" d="M1515 470h8v8h-8z"/>
<path fill="#ff3643" d="M1522 470h8v8h-8z"/>
<path fill="#ff323e" d="M1529 470h8v8h-8z"/>
<path fill="#ff2e3a" d="M1536 470h8v8h-8z"/>
<path fill="#ff2a36" d="M1543 470h8v8h-8z"/>
<path fill="#ff2732" d="M1550 470h8v8h-8z"/>
<path fill="#ff232e" d="M1557 470h8v8h-8z"/>
<path fill="#ff202b" d="M1564 470h8v8h-8z"/>
<path fill="#ff1d28" d="M1571 470h8v8h-8z"/>
<path fill="#ff1a24" d="M1578 470h8v8h-8z"/>
<path fill="#ff1721" d="M1585 470h8v8h-8z"/>
<path fill="#ff141f" d="M1592 470h8v8h-8z"/>
<path fill="#ff121c" d="M1599 470h8v8h-8z"/>
<path fill="#ff0f19" d="M1606 470h8v8h-8z"/>
<path fill="#ff0d17" d="M1613 470h8v8h-8z"/>
<path fill="#ff0b14" d="M1620 470h8v8h-8z"/>
<path fill="#ff0812" d="M1627 470h8v8h-8z"/>
<path fill="#ff0610" d="M1634 470h8v8h-8z"/>
<path fill="#ff040e" d="M1641 470h8v8h-8z"/>
<path fill="#ff020b" d="M1648 470h8v8h-8z"/>
<path fill="#ff0009" d="M1655 470h8v8h-8zM1676 484h8v8h-8zM1697 498h8v8h-8zM1718 512h8v8h-8z"/>
<path fill="#ff0007" d="M1662 470h8v8h-8zM1683 484h8v8h-8zM1697 491h8v8h-8zM1704 498h8v8h-8zM1718 505h8v8h-8z"/>
<path fill="#ff0005" d="M1669 470h8v8h-8zM1683 477h8v8h-8zM1704 491h8v8h-8zM1725 505h8v8h-8z"/>
<path fill="#ff0003" d="M1676 470h8v8h-8zM1690 477h8v8h-8zM1711 491h8v8h-8zM1732 505h8v8h-8z"/>
<path fill="#ff0001" d="M1683 470h8v8h-8zM1697 477h8v8h-8zM1718 491h8v8h-8zM1732 498h8v8h-8z"/>
<path fill="#00e5ff" d="M1179 477h8v8h-8z"/>
<path fill="#00e4ff" d="M1186 477h15v8h-15z"/>
<path fill="#00e3ff" d="M1200 477h22v8h-22z"/>
<path fill="#00e2ff" d="M1221 477h15v8h-15z"/>
<path fill="#00e1ff" d="M1235 477h15v8h-15z"/>
<path fill="#00e0ff" d="M1249 477h15v8h-15z"/>
<path fill="#00dfff" d="M1263 477h15v8h-15z"/>
<path fill="#00deff" d="M1277 477h8v8h-8z"/>
<path fill="#0df" d="M1284 477h15v8h-15z"/>
<path fill="#00dcff" d="M1298 477h8v8h-8z"/>
<path fill="#00dbff" d="M1305 477h15v8h-15z"/>
<path fill="#00daff" d="M1319 477h8v8h-8z"/>
<path fill="#00d9ff" d="M1326 477h8v8h-8zM1179 484h8v8h-8z"/>
<path fill="#16d9ff" d="M1333 477h8v8h-8z"/>
<path fill="#2bd8ff" d="M1340 477h8v8h-8z"/>
<path fill="#40d7ff" d="M1347 477h8v8h-8z"/>
<path fill="#55d6ff" d="M1354 477h8v8h-8z"/>
<path fill="#6ad5ff" d="M1361 477h8v8h-8z"/>
<path fill="#80d4ff" d="M1368 477h8v8h-8z"/>
<path fill="#96d3ff" d="M1375 477h8v8h-8z"/>
<path fill="#add2ff" d="M1382 477h8v8h-8z"/>
<path fill="#c5d1ff" d="M1389 477h8v8h-8z"/>
<path fill="#ded0ff" d="M1396 477h8v8h-8z"/>
<path fill="#f7cfff" d="M1403 477h8v8h-8z"/>
<path fill="#ffc0ee" d="M1410 477h8v8h-8z"/>
<path fill="#ffadd8" d="M1417 477h8v8h-8z"/>
<path fill="#ff9dc6" d="M1424 477h8v8h-8z"/>
<path fill="#ff8fb5" d="M1431 477h8v8h-8z"/>
<path fill="#ff83a7" d="M1438 477h8v8h-8z"/>
<path fill="#ff789a" d="M1445 477h8v8h-8z"/>
<path fill="#ff6e8e" d="M1452 477h8v8h-8z"/>
<path fill="#ff6584" d="M1459 477h8v8h-8z"/>
<path fill="#ff5d7b" d="M1466 477h8v8h-8z"/>
<path fill="#ff5572" d="M1473 477h8v8h-8z"/>
<path fill="#ff4f6a" d="M1480 477h8v8h-8z"/>
<path fill="#ff4863" d="M1487 477h8v8h-8z"/>
<path fill="#ff435c" d="M1494 477h8v8h-8z"/>
<path fill="#ff3d56" d="M1501 477h8v8h-8z"/>
<path fill="#ff3851" d="M1508 477h8v8h-8z"/>
<path fill="#ff344b" d="M1515 477h8v8h-8z"/>
<path fill="#ff2f46" d="M1522 477h8v8h-8z"/>
<path fill="#ff2b42" d="M1529 477h8v8h-8z"/>
<path fill="#ff283d" d="M1536 477h8v8h-8z"/>
<path fill="#ff2439" d="M1543 477h8v8h-8z"/>
<path fill="#ff2135" d="M1550 477h8v8h-8z"/>
<path fill="#ff1d31" d="M1557 477h8v8h-8z"/>
<path fill="#ff1a2e" d="M1564 477h8v8h-8z"/>
<path fill="#ff172b" d="M1571 477h8v8h-8z"/>
<path fill="#ff1428" d="M1578 477h8v8h-8z"/>
<path fill="#ff1225" d="M1585 477h8v8h-8z"/>
<path fill="#ff0f22" d="M1592 477h8v8h-8z"/>
<path fill="#ff0d1f" d="M1599 477h8v8h-8z"/>
<path fill="#ff0a1c" d="M1606 477h8v8h-8z"/>
<path fill="#ff081a" d="M1613 477h8v8h-8z"/>
<path fill="#ff0517" d="M1620 477h8v8h-8z"/>
<path fill="#ff0315" d="M1627 477h8v8h-8z"/>
<path fill="#ff0113" d="M1634 477h8v8h-8z"/>
<path fill="#f01" d="M1641 477h8v8h-8zM1648 484h8v8h-8zM1669 498h8v8h-8zM1676 505h8v8h-8zM1697 519h8v8h-8z"/>
<path fill="#ff000e" d="M1648 477h8v8h-8zM1669 491h8v8h-8zM1690 505h8v8h-8zM1697 512h8v8h-8z"/>
<path fill="#ff000c" d="M1655 477h8v8h-8zM1676 491h8v8h-8zM1697 505h8v8h-8zM1718 519h8v8h-8z"/>
<path fill="#ff000a" d="M1662 477h8v8h-8zM1683 491h8v8h-8zM1704 505h8v8h-8z"/>
<path fill="#ff0008" d="M1669 477h8v8h-8zM1690 491h8v8h-8zM1711 505h8v8h-8zM1725 512h8v8h-8z"/>
<path fill="#ff0006" d="M1676 477h8v8h-8zM1690 484h8v8h-8zM1711 498h8v8h-8zM1732 512h8v8h-8z"/>
<path fill="#00d8ff" d="M1186 484h15v8h-15z"/>
<path fill="#00d7ff" d="M1200 484h8v8h-8z"/>
<path fill="#00d6ff" d="M1207 484h15v8h-15z"/>
<path fill="#00d5ff" d="M1221 484h8v8h-8z"/>
<path fill="#00d4ff" d="M1228 484h15v8h-15z"/>
<path fill="#00d3ff" d="M1242 484h8v8h-8z"/>
<path fill="#00d2ff" d="M1249 484h15v8h-15z"/>
<path fill="#00d1ff" d="M1263 484h8v8h-8z"/>
<path fill="#00d0ff" d="M1270 484h8v8h-8z"/>
<path fill="#00cfff" d="M1277 484h15v8h-15z"/>
<path fill="#00ceff" d="M1291 484h8v8h-8z"/>
<path fill="#00cdff" d="M1298 484h8v8h-8zM1179 491h8v8h-8z"/>
<path fill="#0cf" d="M1305 484h8v8h-8zM1186 491h15v8h-15z"/>
<path fill="#00cbff" d="M1312 484h8v8h-8zM1200 491h8v8h-8z"/>
<path fill="#00caff" d="M1319 484h8v8h-8zM1207 491h8v8h-8z"/>
<path fill="#07c9ff" d="M1326 484h8v8h-8z"/>
<path fill="#1cc8ff" d="M1333 484h8v8h-8z"/>
<path fill="#31c7ff" d="M1340 484h8v8h-8z"/>
<path fill="#45c6ff" d="M1347 484h8v8h-8z"/>
<path fill="#59c4ff" d="M1354 484h8v8h-8z"/>
<path fill="#6ec3ff" d="M1361 484h8v8h-8z"/>
<path fill="#83c2ff" d="M1368 484h8v8h-8z"/>
<path fill="#99c1ff" d="M1375 484h8v8h-8z"/>
<path fill="#afbfff" d="M1382 484h8v8h-8z"/>
<path fill="#c6beff" d="M1389 484h8v8h-8z"/>
<path fill="#ddbcff" d="M1396 484h8v8h-8z"/>
<path fill="#f6bbff" d="M1403 484h8v8h-8z"/>
<path fill="#ffaef0" d="M1410 484h8v8h-8z"/>
<path fill="#ff9ddb" d="M1417 484h8v8h-8z"/>
<path fill="#ff8ec8" d="M1424 484h8v8h-8z"/>
<path fill="#ff82b8" d="M1431 484h8v8h-8z"/>
<path fill="#ff76aa" d="M1438 484h8v8h-8z"/>
<path fill="#ff6c9d" d="M1445 484h8v8h-8z"/>
<path fill="#ff6392" d="M1452 484h8v8h-8z"/>
<path fill="#ff5b87" d="M1459 484h8v8h-8z"/>
<path fill="#ff537e" d="M1466 484h8v8h-8z"/>
<path fill="#ff4c76" d="M1473 484h8v8h-8z"/>
<path fill="#ff466e" d="M1480 484h8v8h-8z"/>
<path fill="#ff4067" d="M1487 484h8v8h-8z"/>
<path fill="#ff3b60" d="M1494 484h8v8h-8z"/>
<path fill="#ff365a" d="M1501 484h8v8h-8z"/>
<path fill="#ff3154" d="M1508 484h8v8h-8z"/>
<path fill="#ff2d4f" d="M1515 484h8v8h-8z"/>
<path fill="#ff294a" d="M1522 484h8v8h-8z"/>
<path fill="#ff2545" d="M1529 484h8v8h-8z"/>
<path fill="#ff2140" d="M1536 484h8v8h-8z"/>
<path fill="#ff1e3c" d="M1543 484h8v8h-8z"/>
<path fill="#ff1a38" d="M1550 484h8v8h-8z"/>
<path fill="#ff1735" d="M1557 484h8v8h-8z"/>
<path fill="#ff1431" d="M1564 484h8v8h-8z"/>
<path fill="#ff122e" d="M1571 484h8v8h-8z"/>
<path fill="#ff0f2b" d="M1578 484h8v8h-8z"/>
<path fill="#ff0c28" d="M1585 484h8v8h-8z"/>
<path fill="#ff0a25" d="M1592 484h8v8h-8z"/>
<path fill="#ff0722" d="M1599 484h8v8h-8z"/>
<path fill="#ff051f" d="M1606 484h8v8h-8z"/>
<path fill="#ff021d" d="M1613 484h8v8h-8z"/>
<path fill="#ff001a" d="M1620 484h8v8h-8zM1655 512h8v8h-8zM1662 519h8v8h-8zM1669 526h8v8h-8z"/>
<path fill="#ff0018" d="M1627 484h8v8h-8zM1634 491h8v8h-8zM1662 512h8v8h-8zM1669 519h8v8h-8zM1676 526h8v8h-8z"/>
<path fill="#ff0016" d="M1634 484h8v8h-8zM1641 491h8v8h-8zM1669 512h8v8h-8zM1676 519h8v8h-8z"/>
<path fill="#ff0013" d="M1641 484h8v8h-8zM1662 498h8v8h-8zM1669 505h8v8h-8zM1697 526h8v8h-8z"/>
<path fill="#ff000f" d="M1655 484h8v8h-8zM1676 498h8v8h-8zM1683 505h8v8h-8zM1704 519h8v8h-8z"/>
<path fill="#ff000d" d="M1662 484h8v8h-8zM1683 498h8v8h-8zM1704 512h8v8h-8zM1711 519h8v8h-8z"/>
<path fill="#ff000b" d="M1669 484h8v8h-8zM1690 498h8v8h-8zM1711 512h8v8h-8z"/>
<path fill="#ff0004" d="M1697 484h8v8h-8zM1718 498h8v8h-8z"/>
<path fill="#00c9ff" d="M1214 491h15v8h-15z"/>
<path fill="#00c8ff" d="M1228 491h8v8h-8z"/>
<path fill="#00c7ff" d="M1235 491h8v8h-8z"/>
<path fill="#00c6ff" d="M1242 491h8v8h-8z"/>
<path fill="#00c5ff" d="M1249 491h8v8h-8z"/>
<path fill="#00c4ff" d="M1256 491h8v8h-8z"/>
<path fill="#00c3ff" d="M1263 491h8v8h-8z"/>
<path fill="#00c2ff" d="M1270 491h8v8h-8zM1179 498h8v8h-8z"/>
<path fill="#00c1ff" d="M1277 491h8v8h-8zM1186 498h8v8h-8z"/>
<path fill="#00c0ff" d="M1284 491h8v8h-8zM1193 498h8v8h-8z"/>
<path fill="#00bfff" d="M1291 491h8v8h-8zM1200 498h8v8h-8z"/>
<path fill="#00beff" d="M1298 491h8v8h-8zM1207 498h15v8h-15z"/>
<path fill="#00bdff" d="M1305 491h8v8h-8zM1221 498h8v8h-8z"/>
<path fill="#00bcff" d="M1312 491h8v8h-8zM1228 498h8v8h-8z"/>
<path fill="#0bf" d="M1319 491h8v8h-8zM1235 498h8v8h-8z"/>
<path fill="#0fb9ff" d="M1326 491h8v8h-8z"/>
<path fill="#23b8ff" d="M1333 491h8v8h-8z"/>
<path fill="#36b7ff" d="M1340 491h8v8h-8z"/>
<path fill="#4ab5ff" d="M1347 491h8v8h-8z"/>
<path fill="#5db4ff" d="M1354 491h8v8h-8z"/>
<path fill="#71b2ff" d="M1361 491h8v8h-8z"/>
<path fill="#86b1ff" d="M1368 491h8v8h-8z"/>
<path fill="#9bafff" d="M1375 491h8v8h-8z"/>
<path fill="#b0adff" d="M1382 491h8v8h-8z"/>
<path fill="#c6acff" d="M1389 491h8v8h-8z"/>
<path fill="#daf" d="M1396 491h8v8h-8z"/>
<path fill="#f5a8ff" d="M1403 491h8v8h-8z"/>
<path fill="#ff9df2" d="M1410 491h8v8h-8z"/>
<path fill="#ff8edd" d="M1417 491h8v8h-8z"/>
<path fill="#ff80cb" d="M1424 491h8v8h-8z"/>
<path fill="#ff75bb" d="M1431 491h8v8h-8z"/>
<path fill="#ff6aad" d="M1438 491h8v8h-8z"/>
<path fill="#ff61a0" d="M1445 491h8v8h-8z"/>
<path fill="#ff5895" d="M1452 491h8v8h-8z"/>
<path fill="#ff518b" d="M1459 491h8v8h-8z"/>
<path fill="#ff4a81" d="M1466 491h8v8h-8z"/>
<path fill="#ff4379" d="M1473 491h8v8h-8z"/>
<path fill="#ff3d71" d="M1480 491h8v8h-8z"/>
<path fill="#ff386a" d="M1487 491h8v8h-8z"/>
<path fill="#ff3363" d="M1494 491h8v8h-8z"/>
<path fill="#ff2e5d" d="M1501 491h8v8h-8z"/>
<path fill="#ff2a57" d="M1508 491h8v8h-8z"/>
<path fill="#ff2652" d="M1515 491h8v8h-8z"/>
<path fill="#ff224d" d="M1522 491h8v8h-8z"/>
<path fill="#ff1e48" d="M1529 491h8v8h-8z"/>
<path fill="#ff1b44" d="M1536 491h8v8h-8z"/>
<path fill="#ff173f" d="M1543 491h8v8h-8z"/>
<path fill="#ff143b" d="M1550 491h8v8h-8z"/>
<path fill="#ff1138" d="M1557 491h8v8h-8z"/>
<path fill="#ff0f34" d="M1564 491h8v8h-8z"/>
<path fill="#ff0c31" d="M1571 491h8v8h-8z"/>
<path fill="#ff092e" d="M1578 491h8v8h-8z"/>
<path fill="#ff072a" d="M1585 491h8v8h-8z"/>
<path fill="#ff0428" d="M1592 491h8v8h-8z"/>
<path fill="#ff0125" d="M1599 491h8v8h-8z"/>
<path fill="#f02" d="M1606 491h8v8h-8zM1613 498h8v8h-8zM1620 505h8v8h-8z"/>
<path fill="#ff001f" d="M1613 491h8v8h-8zM1655 526h8v8h-8zM1662 533h8v8h-8z"/>
<path fill="#ff001d" d="M1620 491h8v8h-8zM1627 498h8v8h-8zM1669 533h8v8h-8z"/>
<path fill="#ff001b" d="M1627 491h8v8h-8zM1634 498h8v8h-8zM1641 505h8v8h-8zM1676 533h8v8h-8z"/>
<path fill="#ff0014" d="M1648 491h8v8h-8zM1676 512h8v8h-8zM1683 519h8v8h-8z"/>
<path fill="#ff0012" d="M1655 491h8v8h-8zM1683 512h8v8h-8zM1690 519h8v8h-8z"/>
<path fill="#ff0010" d="M1662 491h8v8h-8zM1690 512h8v8h-8z"/>
<path fill="#00baff" d="M1242 498h8v8h-8z"/>
<path fill="#00b9ff" d="M1249 498h8v8h-8z"/>
<path fill="#00b7ff" d="M1256 498h8v8h-8z"/>
<path fill="#00b6ff" d="M1263 498h8v8h-8zM1186 505h8v8h-8z"/>
<path fill="#00b5ff" d="M1270 498h8v8h-8zM1193 505h8v8h-8z"/>
<path fill="#00b4ff" d="M1277 498h8v8h-8zM1200 505h8v8h-8z"/>
<path fill="#00b3ff" d="M1284 498h8v8h-8zM1207 505h8v8h-8z"/>
<path fill="#00b2ff" d="M1291 498h8v8h-8zM1214 505h8v8h-8z"/>
<path fill="#00b0ff" d="M1298 498h8v8h-8zM1228 505h8v8h-8z"/>
<path fill="#00afff" d="M1305 498h8v8h-8zM1235 505h8v8h-8z"/>
<path fill="#00aeff" d="M1312 498h8v8h-8zM1242 505h8v8h-8z"/>
<path fill="#01acff" d="M1319 498h8v8h-8z"/>
<path fill="#15abff" d="M1326 498h8v8h-8z"/>
<path fill="#28a9ff" d="M1333 498h8v8h-8z"/>
<path fill="#3ba7ff" d="M1340 498h8v8h-8z"/>
<path fill="#4ea6ff" d="M1347 498h8v8h-8z"/>
<path fill="#61a4ff" d="M1354 498h8v8h-8z"/>
<path fill="#74a2ff" d="M1361 498h8v8h-8z"/>
<path fill="#88a0ff" d="M1368 498h8v8h-8z"/>
<path fill="#9d9eff" d="M1375 498h8v8h-8z"/>
<path fill="#b19cff" d="M1382 498h8v8h-8z"/>
<path fill="#c79aff" d="M1389 498h8v8h-8z"/>
<path fill="#dd98ff" d="M1396 498h8v8h-8z"/>
<path fill="#f396ff" d="M1403 498h8v8h-8z"/>
<path fill="#ff8df4" d="M1410 498h8v8h-8z"/>
<path fill="#ff7fdf" d="M1417 498h8v8h-8z"/>
<path fill="#ff73cd" d="M1424 498h8v8h-8z"/>
<path fill="#ff68be" d="M1431 498h8v8h-8z"/>
<path fill="#ff5eb0" d="M1438 498h8v8h-8z"/>
<path fill="#ff56a3" d="M1445 498h8v8h-8z"/>
<path fill="#ff4e98" d="M1452 498h8v8h-8z"/>
<path fill="#ff478e" d="M1459 498h8v8h-8z"/>
<path fill="#ff4085" d="M1466 498h8v8h-8z"/>
<path fill="#ff3a7c" d="M1473 498h8v8h-8z"/>
<path fill="#ff3574" d="M1480 498h8v8h-8z"/>
<path fill="#ff306d" d="M1487 498h8v8h-8z"/>
<path fill="#ff2b66" d="M1494 498h8v8h-8z"/>
<path fill="#ff2760" d="M1501 498h8v8h-8z"/>
<path fill="#ff235a" d="M1508 498h8v8h-8z"/>
<path fill="#ff1f55" d="M1515 498h8v8h-8z"/>
<path fill="#ff1b50" d="M1522 498h8v8h-8z"/>
<path fill="#ff184b" d="M1529 498h8v8h-8z"/>
<path fill="#ff1447" d="M1536 498h8v8h-8z"/>
<path fill="#ff1142" d="M1543 498h8v8h-8z"/>
<path fill="#ff0e3e" d="M1550 498h8v8h-8z"/>
<path fill="#ff0b3b" d="M1557 498h8v8h-8z"/>
<path fill="#ff0937" d="M1564 498h8v8h-8z"/>
<path fill="#ff0634" d="M1571 498h8v8h-8z"/>
<path fill="#ff0330" d="M1578 498h8v8h-8z"/>
<path fill="#ff002d" d="M1585 498h8v8h-8zM1592 505h8v8h-8zM1599 512h8v8h-8zM1606 519h8v8h-8zM1613 526h8v8h-8z"/>
<path fill="#ff002a" d="M1592 498h8v8h-8zM1599 505h8v8h-8zM1606 512h8v8h-8zM1613 519h8v8h-8zM1620 526h8v8h-8zM1627 533h8v8h-8zM1634 540h8v8h-8z"/>
<path fill="#ff0028" d="M1599 498h8v8h-8zM1606 505h8v8h-8zM1613 512h8v8h-8zM1620 519h8v8h-8zM1627 526h8v8h-8zM1634 533h8v8h-8zM1641 540h8v8h-8z"/>
<path fill="#ff0025" d="M1606 498h8v8h-8zM1613 505h8v8h-8zM1620 512h8v8h-8zM1627 519h8v8h-8zM1634 526h8v8h-8zM1641 533h8v8h-8zM1648 540h8v8h-8z"/>
<path fill="#ff0020" d="M1620 498h8v8h-8zM1627 505h8v8h-8zM1634 512h8v8h-8zM1641 519h8v8h-8z"/>
<path fill="#ff0019" d="M1641 498h8v8h-8zM1648 505h8v8h-8z"/>
<path fill="#ff0017" d="M1648 498h8v8h-8zM1655 505h8v8h-8zM1683 526h8v8h-8z"/>
<path fill="#ff0015" d="M1655 498h8v8h-8zM1662 505h8v8h-8zM1690 526h8v8h-8z"/>
<path fill="#00b1ff" d="M1221 505h8v8h-8z"/>
<path fill="#00acff" d="M1249 505h8v8h-8zM1186 512h8v8h-8z"/>
<path fill="#00abff" d="M1256 505h8v8h-8zM1193 512h8v8h-8z"/>
<path fill="#0af" d="M1263 505h8v8h-8z"/>
<path fill="#00a9ff" d="M1270 505h8v8h-8zM1200 512h8v8h-8z"/>
<path fill="#00a7ff" d="M1277 505h8v8h-8zM1214 512h8v8h-8z"/>
<path fill="#00a6ff" d="M1284 505h8v8h-8zM1221 512h8v8h-8z"/>
<path fill="#00a4ff" d="M1291 505h8v8h-8z"/>
<path fill="#00a3ff" d="M1298 505h8v8h-8zM1235 512h8v8h-8z"/>
<path fill="#00a1ff" d="M1305 505h8v8h-8zM1249 512h8v8h-8z"/>
<path fill="#00a0ff" d="M1312 505h8v8h-8zM1193 519h8v8h-8z"/>
<path fill="#099eff" d="M1319 505h8v8h-8z"/>
<path fill="#1c9dff" d="M1326 505h8v8h-8z"/>
<path fill="#2e9bff" d="M1333 505h8v8h-8z"/>
<path fill="#4099ff" d="M1340 505h8v8h-8z"/>
<path fill="#5297ff" d="M1347 505h8v8h-8z"/>
<path fill="#6595ff" d="M1354 505h8v8h-8z"/>
<path fill="#7893ff" d="M1361 505h8v8h-8z"/>
<path fill="#8b91ff" d="M1368 505h8v8h-8z"/>
<path fill="#9e8fff" d="M1375 505h8v8h-8z"/>
<path fill="#b38cff" d="M1382 505h8v8h-8z"/>
<path fill="#c78aff" d="M1389 505h8v8h-8z"/>
<path fill="#d8f" d="M1396 505h8v8h-8z"/>
<path fill="#f285ff" d="M1403 505h8v8h-8z"/>
<path fill="#ff7df5" d="M1410 505h8v8h-8z"/>
<path fill="#ff71e1" d="M1417 505h8v8h-8z"/>
<path fill="#ff66d0" d="M1424 505h8v8h-8z"/>
<path fill="#ff5cc0" d="M1431 505h8v8h-8z"/>
<path fill="#ff53b3" d="M1438 505h8v8h-8z"/>
<path fill="#ff4ba6" d="M1445 505h8v8h-8z"/>
<path fill="#ff449b" d="M1452 505h8v8h-8z"/>
<path fill="#ff3d91" d="M1459 505h8v8h-8z"/>
<path fill="#ff3788" d="M1466 505h8v8h-8z"/>
<path fill="#ff327f" d="M1473 505h8v8h-8z"/>
<path fill="#ff2d77" d="M1480 505h8v8h-8z"/>
<path fill="#ff2870" d="M1487 505h8v8h-8z"/>
<path fill="#ff2369" d="M1494 505h8v8h-8z"/>
<path fill="#ff1f63" d="M1501 505h8v8h-8z"/>
<path fill="#ff1b5d" d="M1508 505h8v8h-8z"/>
<path fill="#ff1858" d="M1515 505h8v8h-8z"/>
<path fill="#ff1453" d="M1522 505h8v8h-8z"/>
<path fill="#ff114e" d="M1529 505h8v8h-8z"/>
<path fill="#ff0e4a" d="M1536 505h8v8h-8z"/>
<path fill="#ff0b45" d="M1543 505h8v8h-8z"/>
<path fill="#ff0841" d="M1550 505h8v8h-8z"/>
<path fill="#ff053e" d="M1557 505h8v8h-8z"/>
<path fill="#ff023a" d="M1564 505h8v8h-8z"/>
<path fill="#ff0037" d="M1571 505h8v8h-8zM1599 540h8v8h-8zM1606 547h8v8h-8z"/>
<path fill="#f03" d="M1578 505h8v8h-8zM1585 512h8v8h-8zM1620 554h8v8h-8z"/>
<path fill="#ff0030" d="M1585 505h8v8h-8zM1592 512h8v8h-8zM1599 519h8v8h-8z"/>
<path fill="#ff001e" d="M1634 505h8v8h-8zM1641 512h8v8h-8zM1648 519h8v8h-8z"/>
<path fill="#00a8ff" d="M1207 512h8v8h-8z"/>
<path fill="#00a5ff" d="M1228 512h8v8h-8z"/>
<path fill="#00a2ff" d="M1242 512h8v8h-8zM1186 519h8v8h-8z"/>
<path fill="#009fff" d="M1256 512h8v8h-8zM1200 519h8v8h-8z"/>
<path fill="#009eff" d="M1263 512h8v8h-8zM1207 519h8v8h-8z"/>
<path fill="#009dff" d="M1270 512h8v8h-8zM1214 519h8v8h-8z"/>
<path fill="#009bff" d="M1277 512h8v8h-8zM1221 519h8v8h-8z"/>
<path fill="#09f" d="M1284 512h8v8h-8zM1235 519h8v8h-8z"/>
<path fill="#0098ff" d="M1291 512h8v8h-8z"/>
<path fill="#0096ff" d="M1298 512h8v8h-8zM1249 519h8v8h-8zM1193 526h8v8h-8z"/>
<path fill="#0095ff" d="M1305 512h8v8h-8zM1200 526h8v8h-8z"/>
<path fill="#0093ff" d="M1312 512h8v8h-8zM1263 519h8v8h-8z"/>
<path fill="#0f91ff" d="M1319 512h8v8h-8z"/>
<path fill="#218fff" d="M1326 512h8v8h-8z"/>
<path fill="#338dff" d="M1333 512h8v8h-8z"/>
<path fill="#448bff" d="M1340 512h8v8h-8z"/>
<path fill="#5689ff" d="M1347 512h8v8h-8z"/>
<path fill="#6887ff" d="M1354 512h8v8h-8z"/>
<path fill="#7a85ff" d="M1361 512h8v8h-8z"/>
<path fill="#8d82ff" d="M1368 512h8v8h-8z"/>
<path fill="#a080ff" d="M1375 512h8v8h-8z"/>
<path fill="#b47dff" d="M1382 512h8v8h-8z"/>
<path fill="#c87bff" d="M1389 512h8v8h-8z"/>
<path fill="#dc78ff" d="M1396 512h8v8h-8z"/>
<path fill="#f275ff" d="M1403 512h8v8h-8z"/>
<path fill="#ff6ff7" d="M1410 512h8v8h-8z"/>
<path fill="#ff63e3" d="M1417 512h8v8h-8z"/>
<path fill="#ff59d2" d="M1424 512h8v8h-8z"/>
<path fill="#ff50c3" d="M1431 512h8v8h-8z"/>
<path fill="#ff48b5" d="M1438 512h8v8h-8z"/>
<path fill="#ff40a9" d="M1445 512h8v8h-8z"/>
<path fill="#ff3a9e" d="M1452 512h8v8h-8z"/>
<path fill="#ff3494" d="M1459 512h8v8h-8z"/>
<path fill="#ff2e8b" d="M1466 512h8v8h-8z"/>
<path fill="#ff2982" d="M1473 512h8v8h-8z"/>
<path fill="#ff247a" d="M1480 512h8v8h-8z"/>
<path fill="#ff2073" d="M1487 512h8v8h-8z"/>
<path fill="#ff1c6c" d="M1494 512h8v8h-8z"/>
<path fill="#ff1866" d="M1501 512h8v8h-8z"/>
<path fill="#ff1460" d="M1508 512h8v8h-8z"/>
<path fill="#ff115b" d="M1515 512h8v8h-8z"/>
<path fill="#ff0d56" d="M1522 512h8v8h-8z"/>
<path fill="#ff0a51" d="M1529 512h8v8h-8z"/>
<path fill="#ff074d" d="M1536 512h8v8h-8z"/>
<path fill="#ff0448" d="M1543 512h8v8h-8z"/>
<path fill="#ff0144" d="M1550 512h8v8h-8z"/>
<path fill="#ff0040" d="M1557 512h8v8h-8zM1578 540h8v8h-8zM1585 547h8v8h-8z"/>
<path fill="#ff003d" d="M1564 512h8v8h-8zM1585 540h8v8h-8z"/>
<path fill="#ff0039" d="M1571 512h8v8h-8zM1578 519h8v8h-8zM1599 547h8v8h-8zM1606 554h8v8h-8z"/>
<path fill="#ff0036" d="M1578 512h8v8h-8zM1613 554h8v8h-8z"/>
<path fill="#ff0023" d="M1627 512h8v8h-8zM1634 519h8v8h-8zM1641 526h8v8h-8zM1648 533h8v8h-8zM1655 540h8v8h-8z"/>
<path fill="#ff001c" d="M1648 512h8v8h-8zM1655 519h8v8h-8zM1662 526h8v8h-8z"/>
<path fill="#009aff" d="M1228 519h8v8h-8z"/>
<path fill="#0097ff" d="M1242 519h8v8h-8z"/>
<path fill="#0094ff" d="M1256 519h8v8h-8zM1207 526h8v8h-8z"/>
<path fill="#0091ff" d="M1270 519h8v8h-8zM1221 526h8v8h-8z"/>
<path fill="#008fff" d="M1277 519h8v8h-8zM1228 526h8v8h-8z"/>
<path fill="#008eff" d="M1284 519h8v8h-8zM1235 526h8v8h-8z"/>
<path fill="#008cff" d="M1291 519h8v8h-8zM1242 526h8v8h-8z"/>
<path fill="#008aff" d="M1298 519h8v8h-8zM1207 533h8v8h-8z"/>
<path fill="#08f" d="M1305 519h8v8h-8zM1214 533h8v8h-8z"/>
<path fill="#0386ff" d="M1312 519h8v8h-8z"/>
<path fill="#1584ff" d="M1319 519h8v8h-8z"/>
<path fill="#2782ff" d="M1326 519h8v8h-8z"/>
<path fill="#3880ff" d="M1333 519h8v8h-8z"/>
<path fill="#497eff" d="M1340 519h8v8h-8z"/>
<path fill="#5a7cff" d="M1347 519h8v8h-8z"/>
<path fill="#6b79ff" d="M1354 519h8v8h-8z"/>
<path fill="#7d77ff" d="M1361 519h8v8h-8z"/>
<path fill="#8f74ff" d="M1368 519h8v8h-8z"/>
<path fill="#a272ff" d="M1375 519h8v8h-8z"/>
<path fill="#b56fff" d="M1382 519h8v8h-8z"/>
<path fill="#c86cff" d="M1389 519h8v8h-8z"/>
<path fill="#dc69ff" d="M1396 519h8v8h-8z"/>
<path fill="#f166ff" d="M1403 519h8v8h-8z"/>
<path fill="#ff60f8" d="M1410 519h8v8h-8z"/>
<path fill="#ff56e5" d="M1417 519h8v8h-8z"/>
<path fill="#ff4dd4" d="M1424 519h8v8h-8z"/>
<path fill="#ff44c5" d="M1431 519h8v8h-8z"/>
<path fill="#ff3db8" d="M1438 519h8v8h-8z"/>
<path fill="#ff36ac" d="M1445 519h8v8h-8z"/>
<path fill="#ff30a1" d="M1452 519h8v8h-8z"/>
<path fill="#ff2b97" d="M1459 519h8v8h-8z"/>
<path fill="#ff258d" d="M1466 519h8v8h-8z"/>
<path fill="#ff2185" d="M1473 519h8v8h-8z"/>
<path fill="#ff1c7d" d="M1480 519h8v8h-8z"/>
<path fill="#ff1876" d="M1487 519h8v8h-8z"/>
<path fill="#ff146f" d="M1494 519h8v8h-8z"/>
<path fill="#ff1069" d="M1501 519h8v8h-8z"/>
<path fill="#ff0d63" d="M1508 519h8v8h-8z"/>
<path fill="#ff0a5e" d="M1515 519h8v8h-8z"/>
<path fill="#ff0659" d="M1522 519h8v8h-8z"/>
<path fill="#ff0354" d="M1529 519h8v8h-8z"/>
<path fill="#ff004f" d="M1536 519h8v8h-8zM1550 540h8v8h-8zM1564 561h8v8h-8z"/>
<path fill="#ff004b" d="M1543 519h8v8h-8zM1557 540h8v8h-8zM1571 561h8v8h-8z"/>
<path fill="#ff0047" d="M1550 519h8v8h-8zM1564 540h8v8h-8z"/>
<path fill="#ff0043" d="M1557 519h8v8h-8zM1578 547h8v8h-8z"/>
<path fill="#ff003f" d="M1564 519h8v8h-8zM1571 526h8v8h-8zM1592 554h8v8h-8z"/>
<path fill="#ff003c" d="M1571 519h8v8h-8zM1592 547h8v8h-8zM1599 554h8v8h-8z"/>
<path fill="#ff0035" d="M1585 519h8v8h-8zM1592 526h8v8h-8zM1599 533h8v8h-8z"/>
<path fill="#ff0032" d="M1592 519h8v8h-8zM1599 526h8v8h-8zM1606 533h8v8h-8z"/>
<path fill="#0092ff" d="M1214 526h8v8h-8z"/>
<path fill="#008bff" d="M1249 526h8v8h-8zM1200 533h8v8h-8z"/>
<path fill="#0089ff" d="M1256 526h8v8h-8z"/>
<path fill="#0087ff" d="M1263 526h8v8h-8zM1221 533h8v8h-8z"/>
<path fill="#0086ff" d="M1270 526h8v8h-8z"/>
<path fill="#0084ff" d="M1277 526h8v8h-8zM1235 533h8v8h-8zM1193 540h8v8h-8z"/>
<path fill="#0082ff" d="M1284 526h8v8h-8zM1242 533h8v8h-8zM1200 540h8v8h-8z"/>
<path fill="#0080ff" d="M1291 526h8v8h-8zM1249 533h8v8h-8z"/>
<path fill="#007eff" d="M1298 526h8v8h-8z"/>
<path fill="#007cff" d="M1305 526h8v8h-8zM1228 540h8v8h-8z"/>
<path fill="#0a7aff" d="M1312 526h8v8h-8z"/>
<path fill="#1b78ff" d="M1319 526h8v8h-8z"/>
<path fill="#2c76ff" d="M1326 526h8v8h-8z"/>
<path fill="#3c74ff" d="M1333 526h8v8h-8z"/>
<path fill="#4d71ff" d="M1340 526h8v8h-8z"/>
<path fill="#5d6fff" d="M1347 526h8v8h-8z"/>
<path fill="#6e6cff" d="M1354 526h8v8h-8z"/>
<path fill="#806aff" d="M1361 526h8v8h-8z"/>
<path fill="#9167ff" d="M1368 526h8v8h-8z"/>
<path fill="#a364ff" d="M1375 526h8v8h-8z"/>
<path fill="#b661ff" d="M1382 526h8v8h-8z"/>
<path fill="#c95eff" d="M1389 526h8v8h-8z"/>
<path fill="#dc5bff" d="M1396 526h8v8h-8z"/>
<path fill="#f058ff" d="M1403 526h8v8h-8z"/>
<path fill="#ff53fa" d="M1410 526h8v8h-8z"/>
<path fill="#ff49e7" d="M1417 526h8v8h-8z"/>
<path fill="#ff41d6" d="M1424 526h8v8h-8z"/>
<path fill="#ff39c8" d="M1431 526h8v8h-8z"/>
<path fill="#ff32ba" d="M1438 526h8v8h-8z"/>
<path fill="#ff2cae" d="M1445 526h8v8h-8z"/>
<path fill="#ff27a3" d="M1452 526h8v8h-8z"/>
<path fill="#ff2199" d="M1459 526h8v8h-8z"/>
<path fill="#ff1d90" d="M1466 526h8v8h-8z"/>
<path fill="#ff1888" d="M1473 526h8v8h-8z"/>
<path fill="#ff1480" d="M1480 526h8v8h-8z"/>
<path fill="#ff1079" d="M1487 526h8v8h-8z"/>
<path fill="#ff0c72" d="M1494 526h8v8h-8z"/>
<path fill="#ff096c" d="M1501 526h8v8h-8z"/>
<path fill="#ff0566" d="M1508 526h8v8h-8z"/>
<path fill="#ff0261" d="M1515 526h8v8h-8z"/>
<path fill="#ff005c" d="M1522 526h8v8h-8zM1529 540h8v8h-8zM1536 554h8v8h-8z"/>
<path fill="#ff0057" d="M1529 526h8v8h-8zM1536 540h8v8h-8zM1557 575h8v8h-8z"/>
<path fill="#ff0052" d="M1536 526h8v8h-8zM1557 561h8v8h-8z"/>
<path fill="#ff004e" d="M1543 526h8v8h-8z"/>
<path fill="#ff004a" d="M1550 526h8v8h-8zM1564 547h8v8h-8zM1578 568h8v8h-8z"/>
<path fill="#ff0046" d="M1557 526h8v8h-8zM1571 547h8v8h-8z"/>
<path fill="#ff0042" d="M1564 526h8v8h-8zM1585 554h8v8h-8z"/>
<path fill="#ff003b" d="M1578 526h8v8h-8zM1585 533h8v8h-8z"/>
<path fill="#ff0038" d="M1585 526h8v8h-8zM1592 533h8v8h-8z"/>
<path fill="#ff002f" d="M1606 526h8v8h-8zM1613 533h8v8h-8zM1620 540h8v8h-8zM1627 547h8v8h-8z"/>
<path fill="#ff0021" d="M1648 526h8v8h-8zM1655 533h8v8h-8z"/>
<path fill="#008dff" d="M1193 533h8v8h-8z"/>
<path fill="#0085ff" d="M1228 533h8v8h-8z"/>
<path fill="#007fff" d="M1256 533h8v8h-8zM1214 540h8v8h-8z"/>
<path fill="#007dff" d="M1263 533h8v8h-8zM1221 540h8v8h-8z"/>
<path fill="#007bff" d="M1270 533h8v8h-8z"/>
<path fill="#0079ff" d="M1277 533h8v8h-8zM1200 547h8v8h-8z"/>
<path fill="#07f" d="M1284 533h8v8h-8zM1207 547h8v8h-8z"/>
<path fill="#0075ff" d="M1291 533h8v8h-8z"/>
<path fill="#0073ff" d="M1298 533h8v8h-8zM1263 540h8v8h-8z"/>
<path fill="#0071ff" d="M1305 533h8v8h-8zM1270 540h8v8h-8z"/>
<path fill="#106fff" d="M1312 533h8v8h-8z"/>
<path fill="#206cff" d="M1319 533h8v8h-8z"/>
<path fill="#306aff" d="M1326 533h8v8h-8z"/>
<path fill="#4068ff" d="M1333 533h8v8h-8z"/>
<path fill="#5065ff" d="M1340 533h8v8h-8z"/>
<path fill="#6163ff" d="M1347 533h8v8h-8z"/>
<path fill="#7160ff" d="M1354 533h8v8h-8z"/>
<path fill="#825dff" d="M1361 533h8v8h-8z"/>
<path fill="#935aff" d="M1368 533h8v8h-8z"/>
<path fill="#a557ff" d="M1375 533h8v8h-8z"/>
<path fill="#b754ff" d="M1382 533h8v8h-8z"/>
<path fill="#c951ff" d="M1389 533h8v8h-8z"/>
<path fill="#dc4eff" d="M1396 533h8v8h-8z"/>
<path fill="#ef4aff" d="M1403 533h8v8h-8z"/>
<path fill="#ff45fb" d="M1410 533h8v8h-8z"/>
<path fill="#ff3de9" d="M1417 533h8v8h-8z"/>
<path fill="#ff35d8" d="M1424 533h8v8h-8z"/>
<path fill="#ff2eca" d="M1431 533h8v8h-8z"/>
<path fill="#ff28bd" d="M1438 533h8v8h-8z"/>
<path fill="#ff22b1" d="M1445 533h8v8h-8z"/>
<path fill="#ff1da6" d="M1452 533h8v8h-8z"/>
<path fill="#ff189c" d="M1459 533h8v8h-8z"/>
<path fill="#ff1493" d="M1466 533h8v8h-8z"/>
<path fill="#ff108b" d="M1473 533h8v8h-8z"/>
<path fill="#ff0c83" d="M1480 533h8v8h-8z"/>
<path fill="#ff087c" d="M1487 533h8v8h-8z"/>
<path fill="#ff0475" d="M1494 533h8v8h-8z"/>
<path fill="#ff016f" d="M1501 533h8v8h-8z"/>
<path fill="#ff0069" d="M1508 533h8v8h-8zM1515 547h8v8h-8z"/>
<path fill="#ff0063" d="M1515 533h8v8h-8zM1522 547h8v8h-8zM1529 561h8v8h-8z"/>
<path fill="#ff005e" d="M1522 533h8v8h-8z"/>
<path fill="#ff0059" d="M1529 533h8v8h-8zM1550 568h8v8h-8z"/>
<path fill="#f05" d="M1536 533h8v8h-8zM1557 568h8v8h-8z"/>
<path fill="#ff0050" d="M1543 533h8v8h-8zM1557 554h8v8h-8z"/>
<path fill="#ff004c" d="M1550 533h8v8h-8zM1564 554h8v8h-8z"/>
<path fill="#ff0048" d="M1557 533h8v8h-8zM1578 561h8v8h-8z"/>
<path fill="#ff0045" d="M1564 533h8v8h-8zM1578 554h8v8h-8z"/>
<path fill="#ff0041" d="M1571 533h8v8h-8zM1592 561h8v8h-8z"/>
<path fill="#ff003e" d="M1578 533h8v8h-8zM1599 561h8v8h-8z"/>
<path fill="#ff002c" d="M1620 533h8v8h-8zM1627 540h8v8h-8zM1634 547h8v8h-8z"/>
<path fill="#0081ff" d="M1207 540h8v8h-8z"/>
<path fill="#007aff" d="M1235 540h8v8h-8z"/>
<path fill="#0078ff" d="M1242 540h8v8h-8z"/>
<path fill="#0076ff" d="M1249 540h8v8h-8zM1214 547h8v8h-8z"/>
<path fill="#0074ff" d="M1256 540h8v8h-8zM1221 547h8v8h-8z"/>
<path fill="#006fff" d="M1277 540h8v8h-8zM1242 547h8v8h-8z"/>
<path fill="#006dff" d="M1284 540h8v8h-8zM1249 547h8v8h-8zM1214 554h8v8h-8z"/>
<path fill="#006aff" d="M1291 540h8v8h-8z"/>
<path fill="#0068ff" d="M1298 540h8v8h-8z"/>
<path fill="#0466ff" d="M1305 540h8v8h-8z"/>
<path fill="#1564ff" d="M1312 540h8v8h-8z"/>
<path fill="#2561ff" d="M1319 540h8v8h-8z"/>
<path fill="#355fff" d="M1326 540h8v8h-8z"/>
<path fill="#445cff" d="M1333 540h8v8h-8z"/>
<path fill="#5459ff" d="M1340 540h8v8h-8z"/>
<path fill="#6457ff" d="M1347 540h8v8h-8z"/>
<path fill="#7454ff" d="M1354 540h8v8h-8z"/>
<path fill="#8451ff" d="M1361 540h8v8h-8z"/>
<path fill="#954eff" d="M1368 540h8v8h-8z"/>
<path fill="#a64bff" d="M1375 540h8v8h-8z"/>
<path fill="#b747ff" d="M1382 540h8v8h-8z"/>
<path fill="#c944ff" d="M1389 540h8v8h-8z"/>
<path fill="#dc41ff" d="M1396 540h8v8h-8z"/>
<path fill="#ee3dff" d="M1403 540h8v8h-8z"/>
<path fill="#ff38fc" d="M1410 540h8v8h-8z"/>
<path fill="#ff31ea" d="M1417 540h8v8h-8z"/>
<path fill="#ff2ada" d="M1424 540h8v8h-8z"/>
<path fill="#ff24cc" d="M1431 540h8v8h-8z"/>
<path fill="#ff1ebf" d="M1438 540h8v8h-8z"/>
<path fill="#ff19b3" d="M1445 540h8v8h-8z"/>
<path fill="#ff14a8" d="M1452 540h8v8h-8z"/>
<path fill="#ff0f9f" d="M1459 540h8v8h-8z"/>
<path fill="#ff0b96" d="M1466 540h8v8h-8z"/>
<path fill="#ff078d" d="M1473 540h8v8h-8z"/>
<path fill="#ff0385" d="M1480 540h8v8h-8z"/>
<path fill="#ff007e" d="M1487 540h8v8h-8zM1501 575h8v8h-8z"/>
<path fill="#ff0078" d="M1494 540h8v8h-8zM1508 575h8v8h-8z"/>
<path fill="#ff0071" d="M1501 540h8v8h-8zM1508 554h8v8h-8z"/>
<path fill="#ff006c" d="M1508 540h8v8h-8z"/>
<path fill="#f06" d="M1515 540h8v8h-8zM1522 554h8v8h-8zM1529 568h8v8h-8zM1536 582h8v8h-8z"/>
<path fill="#ff0061" d="M1522 540h8v8h-8zM1529 554h8v8h-8zM1536 568h8v8h-8z"/>
<path fill="#ff0053" d="M1543 540h8v8h-8z"/>
<path fill="#f04" d="M1571 540h8v8h-8zM1585 561h8v8h-8z"/>
<path fill="#ff003a" d="M1592 540h8v8h-8z"/>
<path fill="#ff0034" d="M1606 540h8v8h-8zM1613 547h8v8h-8z"/>
<path fill="#ff0031" d="M1613 540h8v8h-8zM1620 547h8v8h-8z"/>
<path fill="#0072ff" d="M1228 547h8v8h-8z"/>
<path fill="#0070ff" d="M1235 547h8v8h-8zM1200 554h8v8h-8z"/>
<path fill="#006bff" d="M1256 547h8v8h-8zM1221 554h8v8h-8z"/>
<path fill="#0069ff" d="M1263 547h8v8h-8zM1228 554h8v8h-8z"/>
<path fill="#0067ff" d="M1270 547h8v8h-8zM1235 554h8v8h-8z"/>
<path fill="#0064ff" d="M1277 547h8v8h-8zM1214 561h8v8h-8z"/>
<path fill="#0062ff" d="M1284 547h8v8h-8zM1221 561h8v8h-8z"/>
<path fill="#0060ff" d="M1291 547h8v8h-8zM1228 561h8v8h-8z"/>
<path fill="#005eff" d="M1298 547h8v8h-8zM1235 561h8v8h-8z"/>
<path fill="#0b5bff" d="M1305 547h8v8h-8z"/>
<path fill="#1a59ff" d="M1312 547h8v8h-8z"/>
<path fill="#2a56ff" d="M1319 547h8v8h-8z"/>
<path fill="#3954ff" d="M1326 547h8v8h-8z"/>
<path fill="#4851ff" d="M1333 547h8v8h-8z"/>
<path fill="#574eff" d="M1340 547h8v8h-8z"/>
<path fill="#674bff" d="M1347 547h8v8h-8z"/>
<path fill="#7648ff" d="M1354 547h8v8h-8z"/>
<path fill="#8645ff" d="M1361 547h8v8h-8z"/>
<path fill="#9742ff" d="M1368 547h8v8h-8z"/>
<path fill="#a73fff" d="M1375 547h8v8h-8z"/>
<path fill="#b83bff" d="M1382 547h8v8h-8z"/>
<path fill="#ca38ff" d="M1389 547h8v8h-8z"/>
<path fill="#db34ff" d="M1396 547h8v8h-8z"/>
<path fill="#ee30ff" d="M1403 547h8v8h-8z"/>
<path fill="#ff2cfe" d="M1410 547h8v8h-8z"/>
<path fill="#ff25ec" d="M1417 547h8v8h-8z"/>
<path fill="#ff1fdc" d="M1424 547h8v8h-8z"/>
<path fill="#ff19ce" d="M1431 547h8v8h-8z"/>
<path fill="#ff14c1" d="M1438 547h8v8h-8z"/>
<path fill="#ff0fb5" d="M1445 547h8v8h-8z"/>
<path fill="#ff0aab" d="M1452 547h8v8h-8z"/>
<path fill="#ff06a1" d="M1459 547h8v8h-8z"/>
<path fill="#ff0298" d="M1466 547h8v8h-8z"/>
<path fill="#ff0090" d="M1473 547h8v8h-8z"/>
<path fill="#f08" d="M1480 547h8v8h-8zM1487 568h8v8h-8zM1494 589h8v8h-8z"/>
<path fill="#ff0081" d="M1487 547h8v8h-8z"/>
<path fill="#ff007a" d="M1494 547h8v8h-8zM1508 582h8v8h-8z"/>
<path fill="#ff0074" d="M1501 547h8v8h-8z"/>
<path fill="#ff006e" d="M1508 547h8v8h-8zM1515 561h8v8h-8z"/>
<path fill="#ff005f" d="M1529 547h8v8h-8zM1536 561h8v8h-8zM1543 575h8v8h-8z"/>
<path fill="#ff005a" d="M1536 547h8v8h-8zM1543 561h8v8h-8z"/>
<path fill="#ff0056" d="M1543 547h8v8h-8zM1550 561h8v8h-8z"/>
<path fill="#ff0051" d="M1550 547h8v8h-8zM1564 568h8v8h-8z"/>
<path fill="#ff004d" d="M1557 547h8v8h-8zM1571 568h8v8h-8z"/>
<path fill="#006eff" d="M1207 554h8v8h-8z"/>
<path fill="#0065ff" d="M1242 554h8v8h-8z"/>
<path fill="#0063ff" d="M1249 554h8v8h-8z"/>
<path fill="#0061ff" d="M1256 554h8v8h-8z"/>
<path fill="#005fff" d="M1263 554h8v8h-8z"/>
<path fill="#005dff" d="M1270 554h8v8h-8zM1207 568h8v8h-8z"/>
<path fill="#005bff" d="M1277 554h8v8h-8z"/>
<path fill="#0058ff" d="M1284 554h8v8h-8zM1256 561h8v8h-8zM1228 568h8v8h-8z"/>
<path fill="#0056ff" d="M1291 554h8v8h-8zM1263 561h8v8h-8z"/>
<path fill="#0054ff" d="M1298 554h8v8h-8z"/>
<path fill="#1051ff" d="M1305 554h8v8h-8z"/>
<path fill="#1f4fff" d="M1312 554h8v8h-8z"/>
<path fill="#2e4cff" d="M1319 554h8v8h-8z"/>
<path fill="#3d49ff" d="M1326 554h8v8h-8z"/>
<path fill="#4c46ff" d="M1333 554h8v8h-8z"/>
<path fill="#5a43ff" d="M1340 554h8v8h-8z"/>
<path fill="#6a40ff" d="M1347 554h8v8h-8z"/>
<path fill="#793dff" d="M1354 554h8v8h-8z"/>
<path fill="#883aff" d="M1361 554h8v8h-8z"/>
<path fill="#9837ff" d="M1368 554h8v8h-8z"/>
<path fill="#a833ff" d="M1375 554h8v8h-8z"/>
<path fill="#b930ff" d="M1382 554h8v8h-8z"/>
<path fill="#ca2cff" d="M1389 554h8v8h-8z"/>
<path fill="#db28ff" d="M1396 554h8v8h-8z"/>
<path fill="#ed24ff" d="M1403 554h8v8h-8z"/>
<path fill="#ff20ff" d="M1410 554h8v8h-8z"/>
<path fill="#ff19ed" d="M1417 554h8v8h-8z"/>
<path fill="#ff14de" d="M1424 554h8v8h-8z"/>
<path fill="#ff0ed0" d="M1431 554h8v8h-8z"/>
<path fill="#ff09c3" d="M1438 554h8v8h-8z"/>
<path fill="#ff05b8" d="M1445 554h8v8h-8z"/>
<path fill="#ff00ad" d="M1452 554h8v8h-8z"/>
<path fill="#ff00a3" d="M1459 554h8v8h-8zM1466 582h8v8h-8z"/>
<path fill="#ff009a" d="M1466 554h8v8h-8zM1480 603h8v8h-8z"/>
<path fill="#ff0092" d="M1473 554h8v8h-8zM1480 575h8v8h-8z"/>
<path fill="#ff008a" d="M1480 554h8v8h-8zM1487 575h8v8h-8zM1494 596h8v8h-8z"/>
<path fill="#ff0083" d="M1487 554h8v8h-8z"/>
<path fill="#ff007d" d="M1494 554h8v8h-8z"/>
<path fill="#ff0076" d="M1501 554h8v8h-8z"/>
<path fill="#ff006b" d="M1515 554h8v8h-8zM1522 568h8v8h-8z"/>
<path fill="#ff0058" d="M1543 554h8v8h-8z"/>
<path fill="#ff0054" d="M1550 554h8v8h-8z"/>
<path fill="#ff0049" d="M1571 554h8v8h-8z"/>
<path fill="#06f" d="M1207 561h8v8h-8z"/>
<path fill="#005cff" d="M1242 561h8v8h-8zM1214 568h8v8h-8z"/>
<path fill="#005aff" d="M1249 561h8v8h-8zM1221 568h8v8h-8z"/>
<path fill="#0053ff" d="M1270 561h8v8h-8zM1242 568h8v8h-8zM1214 575h8v8h-8z"/>
<path fill="#0051ff" d="M1277 561h8v8h-8zM1249 568h8v8h-8zM1221 575h8v8h-8z"/>
<path fill="#004fff" d="M1284 561h8v8h-8zM1256 568h8v8h-8zM1228 575h8v8h-8z"/>
<path fill="#004cff" d="M1291 561h8v8h-8z"/>
<path fill="#064aff" d="M1298 561h8v8h-8z"/>
<path fill="#1547ff" d="M1305 561h8v8h-8z"/>
<path fill="#2445ff" d="M1312 561h8v8h-8z"/>
<path fill="#3242ff" d="M1319 561h8v8h-8z"/>
<path fill="#403fff" d="M1326 561h8v8h-8z"/>
<path fill="#4f3cff" d="M1333 561h8v8h-8z"/>
<path fill="#5d39ff" d="M1340 561h8v8h-8z"/>
<path fill="#6c36ff" d="M1347 561h8v8h-8z"/>
<path fill="#7b33ff" d="M1354 561h8v8h-8z"/>
<path fill="#8a2fff" d="M1361 561h8v8h-8z"/>
<path fill="#9a2cff" d="M1368 561h8v8h-8z"/>
<path fill="#aa28ff" d="M1375 561h8v8h-8z"/>
<path fill="#ba24ff" d="M1382 561h8v8h-8z"/>
<path fill="#ca20ff" d="M1389 561h8v8h-8z"/>
<path fill="#db1cff" d="M1396 561h8v8h-8z"/>
<path fill="#ec18ff" d="M1403 561h8v8h-8z"/>
<path fill="#fe13ff" d="M1410 561h8v8h-8z"/>
<path fill="#ff0eef" d="M1417 561h8v8h-8z"/>
<path fill="#ff08e0" d="M1424 561h8v8h-8z"/>
<path fill="#ff03d2" d="M1431 561h8v8h-8z"/>
<path fill="#ff00c5" d="M1438 561h8v8h-8zM1445 603h8v8h-8z"/>
<path fill="#ff00ba" d="M1445 561h8v8h-8z"/>
<path fill="#ff00af" d="M1452 561h8v8h-8z"/>
<path fill="#ff00a6" d="M1459 561h8v8h-8z"/>
<path fill="#ff009d" d="M1466 561h8v8h-8zM1473 589h8v8h-8z"/>
<path fill="#ff0095" d="M1473 561h8v8h-8z"/>
<path fill="#ff008d" d="M1480 561h8v8h-8zM1487 582h8v8h-8z"/>
<path fill="#ff0086" d="M1487 561h8v8h-8zM1494 582h8v8h-8z"/>
<path fill="#ff007f" d="M1494 561h8v8h-8z"/>
<path fill="#ff0079" d="M1501 561h8v8h-8z"/>
<path fill="#ff0073" d="M1508 561h8v8h-8z"/>
<path fill="#ff0068" d="M1522 561h8v8h-8zM1529 575h8v8h-8z"/>
<path fill="#05f" d="M1235 568h8v8h-8zM1207 575h8v8h-8z"/>
<path fill="#004dff" d="M1263 568h8v8h-8zM1235 575h8v8h-8z"/>
<path fill="#004aff" d="M1270 568h8v8h-8z"/>
<path fill="#0048ff" d="M1277 568h8v8h-8z"/>
<path fill="#0045ff" d="M1284 568h8v8h-8zM1235 582h8v8h-8z"/>
<path fill="#0043ff" d="M1291 568h8v8h-8zM1242 582h8v8h-8zM1214 589h8v8h-8z"/>
<path fill="#0b40ff" d="M1298 568h8v8h-8z"/>
<path fill="#1a3eff" d="M1305 568h8v8h-8z"/>
<path fill="#283bff" d="M1312 568h8v8h-8z"/>
<path fill="#3638ff" d="M1319 568h8v8h-8z"/>
<path fill="#4435ff" d="M1326 568h8v8h-8z"/>
<path fill="#5232ff" d="M1333 568h8v8h-8z"/>
<path fill="#602fff" d="M1340 568h8v8h-8z"/>
<path fill="#6f2bff" d="M1347 568h8v8h-8z"/>
<path fill="#7d28ff" d="M1354 568h8v8h-8z"/>
<path fill="#8c25ff" d="M1361 568h8v8h-8z"/>
<path fill="#9b21ff" d="M1368 568h8v8h-8z"/>
<path fill="#ab1dff" d="M1375 568h8v8h-8z"/>
<path fill="#ba19ff" d="M1382 568h8v8h-8z"/>
<path fill="#cb15ff" d="M1389 568h8v8h-8z"/>
<path fill="#db10ff" d="M1396 568h8v8h-8z"/>
<path fill="#ec0cff" d="M1403 568h8v8h-8z"/>
<path fill="#fd07ff" d="M1410 568h8v8h-8z"/>
<path fill="#ff01f0" d="M1417 568h8v8h-8z"/>
<path fill="#ff00e1" d="M1424 568h8v8h-8z"/>
<path fill="#ff00d3" d="M1431 568h8v8h-8zM1438 617h8v8h-8z"/>
<path fill="#ff00c7" d="M1438 568h8v8h-8zM1445 610h8v8h-8z"/>
<path fill="#ff00bc" d="M1445 568h8v8h-8z"/>
<path fill="#ff00b1" d="M1452 568h8v8h-8z"/>
<path fill="#ff00a8" d="M1459 568h8v8h-8z"/>
<path fill="#ff009f" d="M1466 568h8v8h-8zM1473 596h8v8h-8z"/>
<path fill="#ff0097" d="M1473 568h8v8h-8z"/>
<path fill="#ff008f" d="M1480 568h8v8h-8zM1487 589h8v8h-8z"/>
<path fill="#ff0082" d="M1494 568h8v8h-8zM1501 589h8v8h-8z"/>
<path fill="#ff007b" d="M1501 568h8v8h-8z"/>
<path fill="#ff0075" d="M1508 568h8v8h-8zM1515 582h8v8h-8z"/>
<path fill="#ff0070" d="M1515 568h8v8h-8z"/>
<path fill="#ff005d" d="M1543 568h8v8h-8z"/>
<path fill="#004bff" d="M1242 575h8v8h-8zM1214 582h8v8h-8z"/>
<path fill="#0049ff" d="M1249 575h8v8h-8zM1221 582h8v8h-8z"/>
<path fill="#0046ff" d="M1256 575h8v8h-8z"/>
<path fill="#04f" d="M1263 575h8v8h-8z"/>
<path fill="#0041ff" d="M1270 575h8v8h-8zM1221 589h8v8h-8z"/>
<path fill="#003fff" d="M1277 575h8v8h-8zM1228 589h8v8h-8z"/>
<path fill="#003cff" d="M1284 575h8v8h-8z"/>
<path fill="#013aff" d="M1291 575h8v8h-8z"/>
<path fill="#1037ff" d="M1298 575h8v8h-8z"/>
<path fill="#1e34ff" d="M1305 575h8v8h-8z"/>
<path fill="#2c31ff" d="M1312 575h8v8h-8z"/>
<path fill="#3a2eff" d="M1319 575h8v8h-8z"/>
<path fill="#472bff" d="M1326 575h8v8h-8z"/>
<path fill="#5528ff" d="M1333 575h8v8h-8z"/>
<path fill="#6325ff" d="M1340 575h8v8h-8z"/>
<path fill="#7121ff" d="M1347 575h8v8h-8z"/>
<path fill="#7f1eff" d="M1354 575h8v8h-8z"/>
<path fill="#8e1aff" d="M1361 575h8v8h-8z"/>
<path fill="#9d16ff" d="M1368 575h8v8h-8z"/>
<path fill="#ac12ff" d="M1375 575h8v8h-8z"/>
<path fill="#bb0eff" d="M1382 575h8v8h-8z"/>
<path fill="#cb09ff" d="M1389 575h8v8h-8z"/>
<path fill="#db04ff" d="M1396 575h8v8h-8z"/>
<path fill="#eb00ff" d="M1403 575h8v8h-8zM1403 582h8v8h-8z"/>
<path fill="#fc00ff" d="M1410 575h8v8h-8z"/>
<path fill="#ff00f2" d="M1417 575h8v8h-8z"/>
<path fill="#ff00e3" d="M1424 575h8v8h-8z"/>
<path fill="#ff00d5" d="M1431 575h8v8h-8z"/>
<path fill="#ff00c9" d="M1438 575h8v8h-8z"/>
<path fill="#ff00be" d="M1445 575h8v8h-8z"/>
<path fill="#ff00b3" d="M1452 575h8v8h-8z"/>
<path fill="#f0a" d="M1459 575h8v8h-8z"/>
<path fill="#ff00a1" d="M1466 575h8v8h-8zM1473 603h8v8h-8z"/>
<path fill="#f09" d="M1473 575h8v8h-8z"/>
<path fill="#ff0084" d="M1494 575h8v8h-8zM1501 596h8v8h-8z"/>
<path fill="#ff0072" d="M1515 575h8v8h-8zM1522 589h8v8h-8z"/>
<path fill="#ff006d" d="M1522 575h8v8h-8z"/>
<path fill="#ff0064" d="M1536 575h8v8h-8z"/>
<path fill="#ff005b" d="M1550 575h8v8h-8z"/>
<path fill="#0047ff" d="M1228 582h8v8h-8z"/>
<path fill="#0040ff" d="M1249 582h8v8h-8z"/>
<path fill="#003eff" d="M1256 582h8v8h-8z"/>
<path fill="#003bff" d="M1263 582h8v8h-8z"/>
<path fill="#0039ff" d="M1270 582h8v8h-8z"/>
<path fill="#0036ff" d="M1277 582h8v8h-8zM1256 589h8v8h-8z"/>
<path fill="#0034ff" d="M1284 582h8v8h-8z"/>
<path fill="#0731ff" d="M1291 582h8v8h-8z"/>
<path fill="#152eff" d="M1298 582h8v8h-8z"/>
<path fill="#232bff" d="M1305 582h8v8h-8z"/>
<path fill="#3028ff" d="M1312 582h8v8h-8z"/>
<path fill="#3d25ff" d="M1319 582h8v8h-8z"/>
<path fill="#4b22ff" d="M1326 582h8v8h-8z"/>
<path fill="#581eff" d="M1333 582h8v8h-8z"/>
<path fill="#661bff" d="M1340 582h8v8h-8z"/>
<path fill="#7317ff" d="M1347 582h8v8h-8z"/>
<path fill="#8114ff" d="M1354 582h8v8h-8z"/>
<path fill="#9010ff" d="M1361 582h8v8h-8z"/>
<path fill="#9e0cff" d="M1368 582h8v8h-8z"/>
<path fill="#ad07ff" d="M1375 582h8v8h-8z"/>
<path fill="#bc02ff" d="M1382 582h8v8h-8z"/>
<path fill="#cb00ff" d="M1389 582h8v8h-8zM1389 589h8v8h-8z"/>
<path fill="#db00ff" d="M1396 582h8v8h-8zM1396 589h8v8h-8z"/>
<path fill="#fb00ff" d="M1410 582h8v8h-8z"/>
<path fill="#ff00f3" d="M1417 582h8v8h-8z"/>
<path fill="#ff00e4" d="M1424 582h8v8h-8z"/>
<path fill="#ff00d7" d="M1431 582h8v8h-8z"/>
<path fill="#ff00cb" d="M1438 582h8v8h-8z"/>
<path fill="#ff00c0" d="M1445 582h8v8h-8z"/>
<path fill="#ff00b5" d="M1452 582h8v8h-8z"/>
<path fill="#ff00ac" d="M1459 582h8v8h-8z"/>
<path fill="#ff009b" d="M1473 582h8v8h-8z"/>
<path fill="#ff0094" d="M1480 582h8v8h-8z"/>
<path fill="#ff0080" d="M1501 582h8v8h-8z"/>
<path fill="#ff006f" d="M1522 582h8v8h-8z"/>
<path fill="#ff006a" d="M1529 582h8v8h-8z"/>
<path fill="#003dff" d="M1235 589h8v8h-8z"/>
<path fill="#003aff" d="M1242 589h8v8h-8zM1221 596h8v8h-8z"/>
<path fill="#0038ff" d="M1249 589h8v8h-8z"/>
<path fill="#03f" d="M1263 589h8v8h-8z"/>
<path fill="#0030ff" d="M1270 589h8v8h-8zM1249 596h8v8h-8zM1228 603h8v8h-8z"/>
<path fill="#002eff" d="M1277 589h8v8h-8z"/>
<path fill="#002bff" d="M1284 589h8v8h-8zM1263 596h8v8h-8zM1242 603h8v8h-8z"/>
<path fill="#0c28ff" d="M1291 589h8v8h-8z"/>
<path fill="#1925ff" d="M1298 589h8v8h-8z"/>
<path fill="#2722ff" d="M1305 589h8v8h-8z"/>
<path fill="#341fff" d="M1312 589h8v8h-8z"/>
<path fill="#411cff" d="M1319 589h8v8h-8z"/>
<path fill="#4e18ff" d="M1326 589h8v8h-8z"/>
<path fill="#5b15ff" d="M1333 589h8v8h-8z"/>
<path fill="#6811ff" d="M1340 589h8v8h-8z"/>
<path fill="#760dff" d="M1347 589h8v8h-8z"/>
<path fill="#8309ff" d="M1354 589h8v8h-8z"/>
<path fill="#9105ff" d="M1361 589h8v8h-8z"/>
<path fill="#9f00ff" d="M1368 589h8v8h-8z"/>
<path fill="#ae00ff" d="M1375 589h8v8h-8z"/>
<path fill="#bc00ff" d="M1382 589h8v8h-8z"/>
<path fill="#ea00ff" d="M1403 589h8v8h-8zM1403 596h8v8h-8z"/>
<path fill="#fa00ff" d="M1410 589h8v8h-8z"/>
<path fill="#ff00f4" d="M1417 589h8v8h-8z"/>
<path fill="#ff00e6" d="M1424 589h8v8h-8z"/>
<path fill="#ff00d8" d="M1431 589h8v8h-8z"/>
<path fill="#ff00cd" d="M1438 589h8v8h-8z"/>
<path fill="#ff00c2" d="M1445 589h8v8h-8z"/>
<path fill="#ff00b7" d="M1452 589h8v8h-8z"/>
<path fill="#ff00ae" d="M1459 589h8v8h-8z"/>
<path fill="#ff00a5" d="M1466 589h8v8h-8z"/>
<path fill="#ff0096" d="M1480 589h8v8h-8z"/>
<path fill="#ff007c" d="M1508 589h8v8h-8z"/>
<path fill="#f07" d="M1515 589h8v8h-8z"/>
<path fill="#0037ff" d="M1228 596h8v8h-8z"/>
<path fill="#0035ff" d="M1235 596h8v8h-8z"/>
<path fill="#0032ff" d="M1242 596h8v8h-8zM1221 603h8v8h-8z"/>
<path fill="#002dff" d="M1256 596h8v8h-8zM1235 603h8v8h-8z"/>
<path fill="#0028ff" d="M1270 596h8v8h-8zM1249 603h8v8h-8zM1228 610h8v8h-8z"/>
<path fill="#0025ff" d="M1277 596h8v8h-8zM1256 603h8v8h-8z"/>
<path fill="#0322ff" d="M1284 596h8v8h-8z"/>
<path fill="#111fff" d="M1291 596h8v8h-8z"/>
<path fill="#1e1cff" d="M1298 596h8v8h-8z"/>
<path fill="#2a19ff" d="M1305 596h8v8h-8z"/>
<path fill="#3716ff" d="M1312 596h8v8h-8z"/>
<path fill="#4413ff" d="M1319 596h8v8h-8z"/>
<path fill="#510fff" d="M1326 596h8v8h-8z"/>
<path fill="#5e0bff" d="M1333 596h8v8h-8z"/>
<path fill="#6b07ff" d="M1340 596h8v8h-8z"/>
<path fill="#7803ff" d="M1347 596h8v8h-8z"/>
<path fill="#8500ff" d="M1354 596h8v8h-8z"/>
<path fill="#9300ff" d="M1361 596h8v8h-8z"/>
<path fill="#a100ff" d="M1368 596h8v8h-8z"/>
<path fill="#af00ff" d="M1375 596h8v8h-8zM1375 603h8v8h-8z"/>
<path fill="#bd00ff" d="M1382 596h8v8h-8zM1382 603h8v8h-8z"/>
<path fill="#c0f" d="M1389 596h8v8h-8zM1389 603h8v8h-8zM1389 610h8v8h-8zM1389 617h8v8h-8zM1389 624h8v8h-8z"/>
<path fill="#da00ff" d="M1396 596h8v8h-8zM1396 603h8v8h-8zM1396 610h8v8h-8zM1396 617h8v8h-8zM1396 624h8v8h-8zM1396 631h8v8h-8z"/>
<path fill="#f900ff" d="M1410 596h8v8h-8z"/>
<path fill="#ff00f5" d="M1417 596h8v8h-8z"/>
<path fill="#ff00e7" d="M1424 596h8v8h-8z"/>
<path fill="#ff00da" d="M1431 596h8v8h-8z"/>
<path fill="#ff00ce" d="M1438 596h8v8h-8z"/>
<path fill="#ff00c3" d="M1445 596h8v8h-8z"/>
<path fill="#ff00b9" d="M1452 596h8v8h-8z"/>
<path fill="#ff00b0" d="M1459 596h8v8h-8z"/>
<path fill="#ff00a7" d="M1466 596h8v8h-8z"/>
<path fill="#ff0098" d="M1480 596h8v8h-8z"/>
<path fill="#ff0091" d="M1487 596h8v8h-8z"/>
<path fill="#0023ff" d="M1263 603h8v8h-8zM1242 610h8v8h-8z"/>
<path fill="#0020ff" d="M1270 603h8v8h-8zM1249 610h8v8h-8z"/>
<path fill="#001dff" d="M1277 603h8v8h-8z"/>
<path fill="#081aff" d="M1284 603h8v8h-8z"/>
<path fill="#1517ff" d="M1291 603h8v8h-8z"/>
<path fill="#2214ff" d="M1298 603h8v8h-8z"/>
<path fill="#2e10ff" d="M1305 603h8v8h-8z"/>
<path fill="#3a0dff" d="M1312 603h8v8h-8z"/>
<path fill="#4709ff" d="M1319 603h8v8h-8z"/>
<path fill="#5305ff" d="M1326 603h8v8h-8z"/>
<path fill="#6001ff" d="M1333 603h8v8h-8z"/>
<path fill="#6d00ff" d="M1340 603h8v8h-8zM1333 645h8v8h-8z"/>
<path fill="#7a00ff" d="M1347 603h8v8h-8zM1340 652h8v8h-8z"/>
<path fill="#8700ff" d="M1354 603h8v8h-8z"/>
<path fill="#9400ff" d="M1361 603h8v8h-8z"/>
<path fill="#a200ff" d="M1368 603h8v8h-8z"/>
<path fill="#e900ff" d="M1403 603h8v8h-8zM1403 610h8v8h-8z"/>
<path fill="#f800ff" d="M1410 603h8v8h-8zM1410 610h8v8h-8z"/>
<path fill="#ff00f6" d="M1417 603h8v8h-8z"/>
<path fill="#ff00e8" d="M1424 603h8v8h-8z"/>
<path fill="#ff00dc" d="M1431 603h8v8h-8z"/>
<path fill="#ff00d0" d="M1438 603h8v8h-8z"/>
<path fill="#f0b" d="M1452 603h8v8h-8z"/>
<path fill="#ff00b2" d="M1459 603h8v8h-8z"/>
<path fill="#ff00a9" d="M1466 603h8v8h-8z"/>
<path fill="#0026ff" d="M1235 610h8v8h-8z"/>
<path fill="#001eff" d="M1256 610h8v8h-8zM1235 617h8v8h-8z"/>
<path fill="#001bff" d="M1263 610h8v8h-8zM1242 617h8v8h-8z"/>
<path fill="#0018ff" d="M1270 610h8v8h-8z"/>
<path fill="#0015ff" d="M1277 610h8v8h-8z"/>
<path fill="#0c12ff" d="M1284 610h8v8h-8z"/>
<path fill="#190fff" d="M1291 610h8v8h-8z"/>
<path fill="#250bff" d="M1298 610h8v8h-8z"/>
<path fill="#3208ff" d="M1305 610h8v8h-8z"/>
<path fill="#3e04ff" d="M1312 610h8v8h-8z"/>
<path fill="#4a00ff" d="M1319 610h8v8h-8z"/>
<path fill="#5600ff" d="M1326 610h8v8h-8z"/>
<path fill="#6200ff" d="M1333 610h8v8h-8zM1326 645h8v8h-8z"/>
<path fill="#6f00ff" d="M1340 610h8v8h-8zM1333 652h8v8h-8z"/>
<path fill="#7c00ff" d="M1347 610h8v8h-8z"/>
<path fill="#80f" d="M1354 610h8v8h-8z"/>
<path fill="#9600ff" d="M1361 610h8v8h-8z"/>
<path fill="#a300ff" d="M1368 610h8v8h-8z"/>
<path fill="#b000ff" d="M1375 610h8v8h-8z"/>
<path fill="#be00ff" d="M1382 610h8v8h-8z"/>
<path fill="#ff00f7" d="M1417 610h8v8h-8z"/>
<path fill="#ff00ea" d="M1424 610h8v8h-8z"/>
<path fill="#f0d" d="M1431 610h8v8h-8z"/>
<path fill="#ff00d1" d="M1438 610h8v8h-8z"/>
<path fill="#ff00bd" d="M1452 610h8v8h-8z"/>
<path fill="#ff00b4" d="M1459 610h8v8h-8z"/>
<path fill="#0021ff" d="M1228 617h8v8h-8z"/>
<path fill="#0019ff" d="M1249 617h8v8h-8z"/>
<path fill="#0016ff" d="M1256 617h8v8h-8z"/>
<path fill="#0013ff" d="M1263 617h8v8h-8z"/>
<path fill="#0010ff" d="M1270 617h8v8h-8z"/>
<path fill="#040dff" d="M1277 617h8v8h-8z"/>
<path fill="#1109ff" d="M1284 617h8v8h-8z"/>
<path fill="#1d06ff" d="M1291 617h8v8h-8z"/>
<path fill="#2902ff" d="M1298 617h8v8h-8z"/>
<path fill="#3500ff" d="M1305 617h8v8h-8z"/>
<path fill="#4100ff" d="M1312 617h8v8h-8zM1305 645h8v8h-8z"/>
<path fill="#4d00ff" d="M1319 617h8v8h-8z"/>
<path fill="#5900ff" d="M1326 617h8v8h-8zM1319 652h8v8h-8z"/>
<path fill="#6500ff" d="M1333 617h8v8h-8z"/>
<path fill="#7100ff" d="M1340 617h8v8h-8z"/>
<path fill="#7d00ff" d="M1347 617h8v8h-8z"/>
<path fill="#8a00ff" d="M1354 617h8v8h-8z"/>
<path fill="#9700ff" d="M1361 617h8v8h-8z"/>
<path fill="#a400ff" d="M1368 617h8v8h-8z"/>
<path fill="#b100ff" d="M1375 617h8v8h-8z"/>
<path fill="#bf00ff" d="M1382 617h8v8h-8zM1382 624h8v8h-8zM1382 631h8v8h-8z"/>
<path fill="#e800ff" d="M1403 617h8v8h-8zM1403 624h8v8h-8zM1403 631h8v8h-8z"/>
<path fill="#f700ff" d="M1410 617h8v8h-8z"/>
<path fill="#ff00f8" d="M1417 617h8v8h-8z"/>
<path fill="#ff00eb" d="M1424 617h8v8h-8z"/>
<path fill="#ff00de" d="M1431 617h8v8h-8z"/>
<path fill="#0017ff" d="M1235 624h8v8h-8z"/>
<path fill="#0014ff" d="M1242 624h8v8h-8z"/>
<path fill="#01f" d="M1249 624h8v8h-8z"/>
<path fill="#000eff" d="M1256 624h8v8h-8z"/>
<path fill="#000bff" d="M1263 624h8v8h-8z"/>
<path fill="#0008ff" d="M1270 624h8v8h-8z"/>
<path fill="#0904ff" d="M1277 624h8v8h-8z"/>
<path fill="#1500ff" d="M1284 624h8v8h-8zM1277 645h8v8h-8z"/>
<path fill="#2100ff" d="M1291 624h8v8h-8z"/>
<path fill="#2c00ff" d="M1298 624h8v8h-8z"/>
<path fill="#3800ff" d="M1305 624h8v8h-8z"/>
<path fill="#40f" d="M1312 624h8v8h-8zM1305 652h8v8h-8z"/>
<path fill="#4f00ff" d="M1319 624h8v8h-8z"/>
<path fill="#5b00ff" d="M1326 624h8v8h-8zM1319 659h8v8h-8z"/>
<path fill="#6700ff" d="M1333 624h8v8h-8z"/>
<path fill="#7300ff" d="M1340 624h8v8h-8z"/>
<path fill="#7f00ff" d="M1347 624h8v8h-8z"/>
<path fill="#8c00ff" d="M1354 624h8v8h-8z"/>
<path fill="#9800ff" d="M1361 624h8v8h-8z"/>
<path fill="#a500ff" d="M1368 624h8v8h-8z"/>
<path fill="#b200ff" d="M1375 624h8v8h-8z"/>
<path fill="#f600ff" d="M1410 624h8v8h-8z"/>
<path fill="#ff00f9" d="M1417 624h8v8h-8z"/>
<path fill="#ff00ec" d="M1424 624h8v8h-8z"/>
<path fill="#000cff" d="M1242 631h8v8h-8z"/>
<path fill="#0009ff" d="M1249 631h8v8h-8z"/>
<path fill="#0006ff" d="M1256 631h8v8h-8z"/>
<path fill="#0003ff" d="M1263 631h8v8h-8z"/>
<path fill="#00f" d="M1270 631h8v8h-8zM1256 638h15v8h-15zM1249 645h22v8h-22zM1256 652h8v8h-8z"/>
<path fill="#0d00ff" d="M1277 631h8v8h-8zM1270 652h8v8h-8z"/>
<path fill="#1900ff" d="M1284 631h8v8h-8zM1277 652h8v8h-8z"/>
<path fill="#2400ff" d="M1291 631h8v8h-8z"/>
<path fill="#3000ff" d="M1298 631h8v8h-8z"/>
<path fill="#3b00ff" d="M1305 631h8v8h-8z"/>
<path fill="#4700ff" d="M1312 631h8v8h-8z"/>
<path fill="#5200ff" d="M1319 631h8v8h-8z"/>
<path fill="#5e00ff" d="M1326 631h8v8h-8z"/>
<path fill="#6900ff" d="M1333 631h8v8h-8z"/>
<path fill="#7500ff" d="M1340 631h8v8h-8z"/>
<path fill="#8100ff" d="M1347 631h8v8h-8z"/>
<path fill="#8d00ff" d="M1354 631h8v8h-8z"/>
<path fill="#90f" d="M1361 631h8v8h-8z"/>
<path fill="#a600ff" d="M1368 631h8v8h-8z"/>
<path fill="#b300ff" d="M1375 631h8v8h-8zM1375 638h8v8h-8z"/>
<path fill="#cd00ff" d="M1389 631h8v8h-8z"/>
<path fill="#0005ff" d="M1242 638h8v8h-8z"/>
<path fill="#0001ff" d="M1249 638h8v8h-8z"/>
<path fill="#0500ff" d="M1270 638h8v8h-8z"/>
<path fill="#10f" d="M1277 638h8v8h-8zM1270 659h8v8h-8z"/>
<path fill="#1d00ff" d="M1284 638h8v8h-8z"/>
<path fill="#2800ff" d="M1291 638h8v8h-8z"/>
<path fill="#30f" d="M1298 638h8v8h-8z"/>
<path fill="#3e00ff" d="M1305 638h8v8h-8zM1298 666h8v8h-8z"/>
<path fill="#4900ff" d="M1312 638h8v8h-8zM1305 666h8v8h-8z"/>
<path fill="#5400ff" d="M1319 638h8v8h-8z"/>
<path fill="#6000ff" d="M1326 638h8v8h-8z"/>
<path fill="#6b00ff" d="M1333 638h8v8h-8z"/>
<path fill="#70f" d="M1340 638h8v8h-8z"/>
<path fill="#8300ff" d="M1347 638h8v8h-8z"/>
<path fill="#8e00ff" d="M1354 638h8v8h-8z"/>
<path fill="#9b00ff" d="M1361 638h8v8h-8z"/>
<path fill="#a700ff" d="M1368 638h8v8h-8z"/>
<path fill="#c000ff" d="M1382 638h8v8h-8z"/>
<path fill="#0900ff" d="M1270 645h8v8h-8z"/>
<path fill="#2000ff" d="M1284 645h8v8h-8z"/>
<path fill="#2b00ff" d="M1291 645h8v8h-8z"/>
<path fill="#3600ff" d="M1298 645h8v8h-8z"/>
<path fill="#4c00ff" d="M1312 645h8v8h-8z"/>
<path fill="#5700ff" d="M1319 645h8v8h-8z"/>
<path fill="#7900ff" d="M1340 645h8v8h-8z"/>
<path fill="#8400ff" d="M1347 645h8v8h-8z"/>
<path fill="#9000ff" d="M1354 645h8v8h-8z"/>
<path fill="#9c00ff" d="M1361 645h8v8h-8z"/>
<path fill="#0100ff" d="M1263 652h8v8h-8z"/>
<path fill="#2300ff" d="M1284 652h8v8h-8z"/>
<path fill="#2e00ff" d="M1291 652h8v8h-8z"/>
<path fill="#3900ff" d="M1298 652h8v8h-8z"/>
<path fill="#4e00ff" d="M1312 652h8v8h-8z"/>
<path fill="#6400ff" d="M1326 652h8v8h-8z"/>
<path fill="#0600ff" d="M1263 659h8v8h-8z"/>
<path fill="#1c00ff" d="M1277 659h8v8h-8z"/>
<path fill="#2700ff" d="M1284 659h8v8h-8z"/>
<path fill="#3100ff" d="M1291 659h8v8h-8z"/>
<path fill="#3c00ff" d="M1298 659h8v8h-8z"/>
<path fill="#4600ff" d="M1305 659h8v8h-8z"/>
<path fill="#5100ff" d="M1312 659h8v8h-8z"/>
<path fill="#60f" d="M1326 659h8v8h-8z"/>
<path fill="#1f00ff" d="M1277 666h8v8h-8z"/>
<path fill="#2a00ff" d="M1284 666h8v8h-8z"/>
<path fill="#3400ff" d="M1291 666h8v8h-8z"/>
</g>
<path fill="#000" fill-opacity="0.40" fill-rule="evenodd" d="M1292.4,665.0 L1292.2,665.1 L1291.9,665.2 L1291.6,665.3 L1291.2,665.4 L1290.9,665.4 L1290.6,665.4 L1290.3,665.4 L1289.9,665.3 L1289.5,665.1 L1289.0,664.9 L1288.5,664.7 L1288.0,664.5 L1287.5,664.3 L1287.0,664.2 L1286.5,664.0 L1286.0,663.7 L1285.4,663.3 L1284.7,662.9 L1284.0,662.4 L1283.3,661.9 L1282.4,661.4 L1281.5,660.8 L1280.6,660.1 L1279.6,659.5 L1278.5,658.8 L1277.4,658.0 L1276.2,657.2 L1275.0,656.4 L1273.6,655.4 L1272.2,654.4 L1270.8,653.3 L1269.2,652.0 L1267.6,650.7 L1266.0,649.2 L1264.2,647.6 L1262.2,645.6 L1260.1,643.4 L1257.9,640.8 L1255.5,637.9 L1252.9,634.5 L1250.2,630.7 L1247.3,626.6 L1244.2,621.9 L1241.0,616.4 L1237.5,610.3 L1233.9,603.7 L1230.0,596.2 L1226.0,587.8 L1221.6,578.6 L1216.9,568.5 L1212.2,557.5 L1207.4,545.5 L1202.6,532.3 L1197.8,518.0 L1193.0,502.8 L1188.3,486.7 L1183.6,469.6 L1178.9,451.3 L1174.4,432.5 L1170.3,413.4 L1166.6,394.1 L1163.1,374.2 L1160.1,354.4 L1157.7,335.1 L1155.9,316.3 L1154.7,297.7 L1154.0,279.7 L1154.2,262.6 L1155.1,246.4 L1156.8,230.8 L1159.2,216.3 L1162.4,203.2 L1166.5,191.5 L1171.4,181.1 L1176.9,172.1 L1182.9,164.7 L1189.5,159.1 L1196.7,155.2 L1204.3,152.6 L1212.0,151.1 L1219.9,150.8 L1228.1,151.9 L1236.4,153.7 L1244.8,155.9 L1253.1,158.4 L1261.5,161.5 L1269.8,165.0 L1278.0,168.5 L1286.0,172.1 L1293.9,175.8 L1301.7,179.7 L1309.4,183.6 L1317.0,187.7 L1324.5,191.9 L1332.0,196.2 L1339.5,200.6 L1347.0,205.2 L1354.4,209.8 L1361.8,214.5 L1369.2,219.3 L1376.6,224.2 L1383.9,229.2 L1391.3,234.2 L1398.6,239.3 L1405.9,244.4 L1413.3,249.6 L1420.6,254.8 L1427.9,260.1 L1435.3,265.4 L1442.6,270.7 L1450.0,276.1 L1457.3,281.5 L1464.6,286.9 L1471.9,292.3 L1479.3,297.8 L1486.5,303.2 L1493.8,308.7 L1501.1,314.1 L1508.4,319.6 L1515.6,325.0 L1522.8,330.4 L1529.9,335.8 L1537.0,341.1 L1544.1,346.5 L1551.1,351.8 L1558.1,357.0 L1564.9,362.2 L1571.8,367.4 L1578.5,372.5 L1585.2,377.6 L1591.8,382.5 L1598.3,387.5 L1604.7,392.3 L1611.0,397.0 L1617.2,401.7 L1623.2,406.3 L1629.1,410.7 L1634.9,415.1 L1640.6,419.4 L1646.0,423.5 L1651.2,427.5 L1656.2,431.3 L1661.1,434.9 L1665.8,438.5 L1670.4,441.9 L1674.8,445.3 L1679.1,448.5 L1683.2,451.6 L1687.1,454.5 L1690.8,457.3 L1694.3,459.9 L1697.6,462.5 L1700.8,464.9 L1703.8,467.1 L1706.7,469.3 L1709.4,471.4 L1711.9,473.3 L1714.3,475.1 L1716.6,476.8 L1718.7,478.5 L1720.8,480.0 L1722.7,481.4 L1724.5,482.8 L1726.2,484.1 L1727.8,485.3 L1729.3,486.5 L1730.8,487.6 L1732.2,488.6 L1733.5,489.6 L1734.8,490.6 L1736.0,491.5 L1737.2,492.4 L1738.3,493.3 L1739.4,494.1 L1740.4,494.8 L1741.3,495.5 L1742.2,496.2 L1743.0,496.8 L1743.8,497.4 L1744.6,498.0 L1745.3,498.5 L1745.9,499.0 L1746.5,499.4 L1747.0,499.8 L1747.6,500.2 L1748.1,500.6 L1748.6,501.0 L1748.9,501.3 L1749.2,501.5 L1749.4,501.6 L1749.6,501.7 L1749.7,501.8Z M1676.4,464.9 L1397.3,296.8 L1274.2,633.1Z"/>
</g>
<g clip-path="url(#ic)"><g filter="url(#bl2)">
<rect x="1577" y="130" width="13" height="13" fill="#74ffc6"/>
<rect x="1589" y="130" width="13" height="13" fill="#7bffc6"/>
<rect x="1601" y="130" width="13" height="13" fill="#82ffc5"/>
<rect x="1613" y="130" width="13" height="13" fill="#89ffc5"/>
<rect x="1625" y="130" width="13" height="13" fill="#90ffc5"/>
<rect x="1637" y="130" width="13" height="13" fill="#98ffc4"/>
<rect x="1649" y="130" width="13" height="13" fill="#9fffc4"/>
<rect x="1661" y="130" width="13" height="13" fill="#a6ffc4"/>
<rect x="1673" y="130" width="13" height="13" fill="#aeffc3"/>
<rect x="1685" y="130" width="13" height="13" fill="#b6ffc3"/>
<rect x="1697" y="130" width="13" height="13" fill="#bdffc2"/>
<rect x="1709" y="130" width="13" height="13" fill="#c5ffc2"/>
<rect x="1721" y="130" width="13" height="13" fill="#cdffc2"/>
<rect x="1733" y="130" width="13" height="13" fill="#d5ffc1"/>
<rect x="1745" y="130" width="13" height="13" fill="#ddffc1"/>
<rect x="1757" y="130" width="13" height="13" fill="#e6ffc0"/>
<rect x="1769" y="130" width="13" height="13" fill="#eeffc0"/>
<rect x="1781" y="130" width="13" height="13" fill="#f7ffbf"/>
<rect x="1793" y="130" width="13" height="13" fill="#ffffbf"/>
<rect x="1805" y="130" width="13" height="13" fill="#fff6b8"/>
<rect x="1817" y="130" width="13" height="13" fill="#ffeeb1"/>
<rect x="1829" y="130" width="13" height="13" fill="#ffe6ab"/>
<rect x="1841" y="130" width="13" height="13" fill="#ffdfa5"/>
<rect x="1853" y="130" width="13" height="13" fill="#ffd8a0"/>
<rect x="1577" y="142" width="13" height="13" fill="#78ffcb"/>
<rect x="1589" y="142" width="13" height="13" fill="#7fffcb"/>
<rect x="1601" y="142" width="13" height="13" fill="#86ffcb"/>
<rect x="1613" y="142" width="13" height="13" fill="#8dffca"/>
<rect x="1625" y="142" width="13" height="13" fill="#95ffca"/>
<rect x="1637" y="142" width="13" height="13" fill="#9cffca"/>
<rect x="1649" y="142" width="13" height="13" fill="#a3ffc9"/>
<rect x="1661" y="142" width="13" height="13" fill="#abffc9"/>
<rect x="1673" y="142" width="13" height="13" fill="#b3ffc9"/>
<rect x="1685" y="142" width="13" height="13" fill="#baffc8"/>
<rect x="1697" y="142" width="13" height="13" fill="#c2ffc8"/>
<rect x="1709" y="142" width="13" height="13" fill="#caffc7"/>
<rect x="1721" y="142" width="13" height="13" fill="#d2ffc7"/>
<rect x="1733" y="142" width="13" height="13" fill="#dbffc7"/>
<rect x="1745" y="142" width="13" height="13" fill="#e3ffc6"/>
<rect x="1757" y="142" width="13" height="13" fill="#ecffc6"/>
<rect x="1769" y="142" width="13" height="13" fill="#f4ffc6"/>
<rect x="1781" y="142" width="13" height="13" fill="#fdffc5"/>
<rect x="1793" y="142" width="13" height="13" fill="#fff8c0"/>
<rect x="1805" y="142" width="13" height="13" fill="#fff0b9"/>
<rect x="1817" y="142" width="13" height="13" fill="#ffe8b2"/>
<rect x="1829" y="142" width="13" height="13" fill="#ffe1ac"/>
<rect x="1841" y="142" width="13" height="13" fill="#ffdaa7"/>
<rect x="1853" y="142" width="13" height="13" fill="#ffd3a1"/>
<rect x="1577" y="154" width="13" height="13" fill="#7cffd1"/>
<rect x="1589" y="154" width="13" height="13" fill="#83ffd0"/>
<rect x="1601" y="154" width="13" height="13" fill="#8affd0"/>
<rect x="1613" y="154" width="13" height="13" fill="#91ffd0"/>
<rect x="1625" y="154" width="13" height="13" fill="#99ffcf"/>
<rect x="1637" y="154" width="13" height="13" fill="#a0ffcf"/>
<rect x="1649" y="154" width="13" height="13" fill="#a8ffcf"/>
<rect x="1661" y="154" width="13" height="13" fill="#b0ffce"/>
<rect x="1673" y="154" width="13" height="13" fill="#b7ffce"/>
<rect x="1685" y="154" width="13" height="13" fill="#bfffce"/>
<rect x="1697" y="154" width="13" height="13" fill="#c7ffcd"/>
<rect x="1709" y="154" width="13" height="13" fill="#d0ffcd"/>
<rect x="1721" y="154" width="13" height="13" fill="#d8ffcd"/>
<rect x="1733" y="154" width="13" height="13" fill="#e0ffcc"/>
<rect x="1745" y="154" width="13" height="13" fill="#e9ffcc"/>
<rect x="1757" y="154" width="13" height="13" fill="#f1ffcc"/>
<rect x="1769" y="154" width="13" height="13" fill="#faffcb"/>
<rect x="1781" y="154" width="13" height="13" fill="#fffbc8"/>
<rect x="1793" y="154" width="13" height="13" fill="#fff2c1"/>
<rect x="1805" y="154" width="13" height="13" fill="#ffeaba"/>
<rect x="1817" y="154" width="13" height="13" fill="#ffe3b4"/>
<rect x="1829" y="154" width="13" height="13" fill="#ffdcad"/>
<rect x="1841" y="154" width="13" height="13" fill="#ffd5a8"/>
<rect x="1853" y="154" width="13" height="13" fill="#ffcea2"/>
<rect x="1577" y="166" width="13" height="13" fill="#80ffd6"/>
<rect x="1589" y="166" width="13" height="13" fill="#87ffd6"/>
<rect x="1601" y="166" width="13" height="13" fill="#8effd6"/>
<rect x="1613" y="166" width="13" height="13" fill="#96ffd5"/>
<rect x="1625" y="166" width="13" height="13" fill="#9dffd5"/>
<rect x="1637" y="166" width="13" height="13" fill="#a5ffd5"/>
<rect x="1649" y="166" width="13" height="13" fill="#adffd4"/>
<rect x="1661" y="166" width="13" height="13" fill="#b4ffd4"/>
<rect x="1673" y="166" width="13" height="13" fill="#bcffd4"/>
<rect x="1685" y="166" width="13" height="13" fill="#c4ffd4"/>
<rect x="1697" y="166" width="13" height="13" fill="#cdffd3"/>
<rect x="1709" y="166" width="13" height="13" fill="#d5ffd3"/>
<rect x="1721" y="166" width="13" height="13" fill="#ddffd3"/>
<rect x="1733" y="166" width="13" height="13" fill="#e6ffd2"/>
<rect x="1745" y="166" width="13" height="13" fill="#efffd2"/>
<rect x="1757" y="166" width="13" height="13" fill="#f8ffd2"/>
<rect x="1769" y="166" width="13" height="13" fill="#fffdd0"/>
<rect x="1781" y="166" width="13" height="13" fill="#fff5c9"/>
<rect x="1793" y="166" width="13" height="13" fill="#ffedc2"/>
<rect x="1805" y="166" width="13" height="13" fill="#ffe5bb"/>
<rect x="1817" y="166" width="13" height="13" fill="#ffddb5"/>
<rect x="1829" y="166" width="13" height="13" fill="#ffd6af"/>
<rect x="1841" y="166" width="13" height="13" fill="#ffd0a9"/>
<rect x="1853" y="166" width="13" height="13" fill="#ffc9a3"/>
<rect x="1577" y="178" width="13" height="13" fill="#83ffdc"/>
<rect x="1589" y="178" width="13" height="13" fill="#8bffdc"/>
<rect x="1601" y="178" width="13" height="13" fill="#92ffdb"/>
<rect x="1613" y="178" width="13" height="13" fill="#9affdb"/>
<rect x="1625" y="178" width="13" height="13" fill="#a2ffdb"/>
<rect x="1637" y="178" width="13" height="13" fill="#a9ffdb"/>
<rect x="1649" y="178" width="13" height="13" fill="#b1ffda"/>
<rect x="1661" y="178" width="13" height="13" fill="#b9ffda"/>
<rect x="1673" y="178" width="13" height="13" fill="#c1ffda"/>
<rect x="1685" y="178" width="13" height="13" fill="#caffda"/>
<rect x="1697" y="178" width="13" height="13" fill="#d2ffd9"/>
<rect x="1709" y="178" width="13" height="13" fill="#dbffd9"/>
<rect x="1721" y="178" width="13" height="13" fill="#e3ffd9"/>
<rect x="1733" y="178" width="13" height="13" fill="#ecffd9"/>
<rect x="1745" y="178" width="13" height="13" fill="#f5ffd8"/>
<rect x="1757" y="178" width="13" height="13" fill="#feffd8"/>
<rect x="1769" y="178" width="13" height="13" fill="#fff7d1"/>
<rect x="1781" y="178" width="13" height="13" fill="#ffefca"/>
<rect x="1793" y="178" width="13" height="13" fill="#ffe7c3"/>
<rect x="1805" y="178" width="13" height="13" fill="#ffdfbc"/>
<rect x="1817" y="178" width="13" height="13" fill="#ffd8b6"/>
<rect x="1829" y="178" width="13" height="13" fill="#ffd1b0"/>
<rect x="1841" y="178" width="13" height="13" fill="#ffcaaa"/>
<rect x="1853" y="178" width="13" height="13" fill="#ffc4a4"/>
<rect x="1577" y="190" width="13" height="13" fill="#88ffe2"/>
<rect x="1589" y="190" width="13" height="13" fill="#8fffe1"/>
<rect x="1601" y="190" width="13" height="13" fill="#97ffe1"/>
<rect x="1613" y="190" width="13" height="13" fill="#9effe1"/>
<rect x="1625" y="190" width="13" height="13" fill="#a6ffe1"/>
<rect x="1637" y="190" width="13" height="13" fill="#aeffe1"/>
<rect x="1649" y="190" width="13" height="13" fill="#b6ffe0"/>
<rect x="1661" y="190" width="13" height="13" fill="#beffe0"/>
<rect x="1673" y="190" width="13" height="13" fill="#c7ffe0"/>
<rect x="1685" y="190" width="13" height="13" fill="#cfffe0"/>
<rect x="1697" y="190" width="13" height="13" fill="#d8ffe0"/>
<rect x="1709" y="190" width="13" height="13" fill="#e0ffdf"/>
<rect x="1721" y="190" width="13" height="13" fill="#e9ffdf"/>
<rect x="1733" y="190" width="13" height="13" fill="#f2ffdf"/>
<rect x="1745" y="190" width="13" height="13" fill="#fbffdf"/>
<rect x="1757" y="190" width="13" height="13" fill="#fffada"/>
<rect x="1769" y="190" width="13" height="13" fill="#fff1d2"/>
<rect x="1781" y="190" width="13" height="13" fill="#ffe9cb"/>
<rect x="1793" y="190" width="13" height="13" fill="#ffe1c4"/>
<rect x="1805" y="190" width="13" height="13" fill="#ffdabd"/>
<rect x="1817" y="190" width="13" height="13" fill="#ffd3b7"/>
<rect x="1829" y="190" width="13" height="13" fill="#ffccb1"/>
<rect x="1841" y="190" width="13" height="13" fill="#ffc5ab"/>
<rect x="1853" y="190" width="13" height="13" fill="#ffbfa5"/>
<rect x="1577" y="202" width="13" height="13" fill="#8cffe8"/>
<rect x="1589" y="202" width="13" height="13" fill="#93ffe7"/>
<rect x="1601" y="202" width="13" height="13" fill="#9bffe7"/>
<rect x="1613" y="202" width="13" height="13" fill="#a3ffe7"/>
<rect x="1625" y="202" width="13" height="13" fill="#abffe7"/>
<rect x="1637" y="202" width="13" height="13" fill="#b3ffe7"/>
<rect x="1649" y="202" width="13" height="13" fill="#bbffe7"/>
<rect x="1661" y="202" width="13" height="13" fill="#c4ffe6"/>
<rect x="1673" y="202" width="13" height="13" fill="#ccffe6"/>
<rect x="1685" y="202" width="13" height="13" fill="#d5ffe6"/>
<rect x="1697" y="202" width="13" height="13" fill="#deffe6"/>
<rect x="1709" y="202" width="13" height="13" fill="#e6ffe6"/>
<rect x="1721" y="202" width="13" height="13" fill="#efffe6"/>
<rect x="1733" y="202" width="13" height="13" fill="#f9ffe5"/>
<rect x="1745" y="202" width="13" height="13" fill="#fffce3"/>
<rect x="1757" y="202" width="13" height="13" fill="#fff3db"/>
<rect x="1769" y="202" width="13" height="13" fill="#ffebd3"/>
<rect x="1781" y="202" width="13" height="13" fill="#ffe3cb"/>
<rect x="1793" y="202" width="13" height="13" fill="#ffdbc5"/>
<rect x="1805" y="202" width="13" height="13" fill="#ffd4be"/>
<rect x="1817" y="202" width="13" height="13" fill="#ffcdb8"/>
<rect x="1829" y="202" width="13" height="13" fill="#ffc7b2"/>
<rect x="1841" y="202" width="13" height="13" fill="#ffc1ac"/>
<rect x="1853" y="202" width="13" height="13" fill="#ffbba7"/>
<rect x="1577" y="214" width="13" height="13" fill="#90ffee"/>
<rect x="1589" y="214" width="13" height="13" fill="#98ffee"/>
<rect x="1601" y="214" width="13" height="13" fill="#a0ffed"/>
<rect x="1613" y="214" width="13" height="13" fill="#a8ffed"/>
<rect x="1625" y="214" width="13" height="13" fill="#b0ffed"/>
<rect x="1637" y="214" width="13" height="13" fill="#b8ffed"/>
<rect x="1649" y="214" width="13" height="13" fill="#c1ffed"/>
<rect x="1661" y="214" width="13" height="13" fill="#c9ffed"/>
<rect x="1673" y="214" width="13" height="13" fill="#d2ffed"/>
<rect x="1685" y="214" width="13" height="13" fill="#dbffed"/>
<rect x="1697" y="214" width="13" height="13" fill="#e3ffed"/>
<rect x="1709" y="214" width="13" height="13" fill="#edffec"/>
<rect x="1721" y="214" width="13" height="13" fill="#f6ffec"/>
<rect x="1733" y="214" width="13" height="13" fill="#ffffec"/>
<rect x="1745" y="214" width="13" height="13" fill="#fff6e3"/>
<rect x="1757" y="214" width="13" height="13" fill="#ffeddb"/>
<rect x="1769" y="214" width="13" height="13" fill="#ffe5d4"/>
<rect x="1781" y="214" width="13" height="13" fill="#fdc"/>
<rect x="1793" y="214" width="13" height="13" fill="#ffd6c5"/>
<rect x="1805" y="214" width="13" height="13" fill="#ffcfbf"/>
<rect x="1817" y="214" width="13" height="13" fill="#ffc8b9"/>
<rect x="1829" y="214" width="13" height="13" fill="#ffc2b3"/>
<rect x="1841" y="214" width="13" height="13" fill="#ffbcad"/>
<rect x="1853" y="214" width="13" height="13" fill="#ffb6a8"/>
<rect x="1577" y="226" width="13" height="13" fill="#94fff4"/>
<rect x="1589" y="226" width="13" height="13" fill="#9cfff4"/>
<rect x="1601" y="226" width="13" height="13" fill="#a4fff4"/>
<rect x="1613" y="226" width="13" height="13" fill="#adfff4"/>
<rect x="1625" y="226" width="13" height="13" fill="#b5fff4"/>
<rect x="1637" y="226" width="13" height="13" fill="#bdfff4"/>
<rect x="1649" y="226" width="13" height="13" fill="#c6fff4"/>
<rect x="1661" y="226" width="13" height="13" fill="#cffff4"/>
<rect x="1673" y="226" width="13" height="13" fill="#d8fff4"/>
<rect x="1685" y="226" width="13" height="13" fill="#e1fff3"/>
<rect x="1697" y="226" width="13" height="13" fill="#eafff3"/>
<rect x="1709" y="226" width="13" height="13" fill="#f3fff3"/>
<rect x="1721" y="226" width="13" height="13" fill="#fcfff3"/>
<rect x="1733" y="226" width="13" height="13" fill="#fff8ed"/>
<rect x="1745" y="226" width="13" height="13" fill="#ffefe4"/>
<rect x="1757" y="226" width="13" height="13" fill="#ffe7dc"/>
<rect x="1769" y="226" width="13" height="13" fill="#ffdfd5"/>
<rect x="1781" y="226" width="13" height="13" fill="#ffd8cd"/>
<rect x="1793" y="226" width="13" height="13" fill="#ffd0c6"/>
<rect x="1805" y="226" width="13" height="13" fill="#ffcac0"/>
<rect x="1817" y="226" width="13" height="13" fill="#ffc3ba"/>
<rect x="1829" y="226" width="13" height="13" fill="#ffbdb4"/>
<rect x="1841" y="226" width="13" height="13" fill="#ffb7ae"/>
<rect x="1853" y="226" width="13" height="13" fill="#ffb1a9"/>
<rect x="1577" y="238" width="13" height="13" fill="#99fffb"/>
<rect x="1589" y="238" width="13" height="13" fill="#a1fffb"/>
<rect x="1601" y="238" width="13" height="13" fill="#a9fffb"/>
<rect x="1613" y="238" width="13" height="13" fill="#b2fffb"/>
<rect x="1625" y="238" width="13" height="13" fill="#bafffb"/>
<rect x="1637" y="238" width="13" height="13" fill="#c3fffb"/>
<rect x="1649" y="238" width="13" height="13" fill="#ccfffb"/>
<rect x="1661" y="238" width="13" height="13" fill="#d5fffa"/>
<rect x="1673" y="238" width="13" height="13" fill="#defffa"/>
<rect x="1685" y="238" width="13" height="13" fill="#e7fffa"/>
<rect x="1697" y="238" width="13" height="13" fill="#f0fffa"/>
<rect x="1709" y="238" width="13" height="13" fill="#f9fffa"/>
<rect x="1721" y="238" width="13" height="13" fill="#fffbf6"/>
<rect x="1733" y="238" width="13" height="13" fill="#fff2ed"/>
<rect x="1745" y="238" width="13" height="13" fill="#ffe9e5"/>
<rect x="1757" y="238" width="13" height="13" fill="#ffe1dd"/>
<rect x="1769" y="238" width="13" height="13" fill="#ffd9d5"/>
<rect x="1781" y="238" width="13" height="13" fill="#ffd2ce"/>
<rect x="1793" y="238" width="13" height="13" fill="#ffcbc7"/>
<rect x="1805" y="238" width="13" height="13" fill="#ffc4c1"/>
<rect x="1817" y="238" width="13" height="13" fill="#ffbebb"/>
<rect x="1829" y="238" width="13" height="13" fill="#ffb8b5"/>
<rect x="1841" y="238" width="13" height="13" fill="#ffb2af"/>
<rect x="1853" y="238" width="13" height="13" fill="#ffadaa"/>
<rect x="1577" y="250" width="13" height="13" fill="#9cfdff"/>
<rect x="1589" y="250" width="13" height="13" fill="#a4fdff"/>
<rect x="1601" y="250" width="13" height="13" fill="#adfdff"/>
<rect x="1613" y="250" width="13" height="13" fill="#b5fdff"/>
<rect x="1625" y="250" width="13" height="13" fill="#befdff"/>
<rect x="1637" y="250" width="13" height="13" fill="#c6fcff"/>
<rect x="1649" y="250" width="13" height="13" fill="#cffcff"/>
<rect x="1661" y="250" width="13" height="13" fill="#d8fcff"/>
<rect x="1673" y="250" width="13" height="13" fill="#e1fcff"/>
<rect x="1685" y="250" width="13" height="13" fill="#ebfcff"/>
<rect x="1697" y="250" width="13" height="13" fill="#f4fcff"/>
<rect x="1709" y="250" width="13" height="13" fill="#fefcff"/>
<rect x="1721" y="250" width="13" height="13" fill="#fff4f7"/>
<rect x="1733" y="250" width="13" height="13" fill="#ffebee"/>
<rect x="1745" y="250" width="13" height="13" fill="#ffe3e6"/>
<rect x="1757" y="250" width="13" height="13" fill="#ffdbde"/>
<rect x="1769" y="250" width="13" height="13" fill="#ffd4d6"/>
<rect x="1781" y="250" width="13" height="13" fill="#ffcdcf"/>
<rect x="1793" y="250" width="13" height="13" fill="#ffc6c8"/>
<rect x="1805" y="250" width="13" height="13" fill="#ffbfc2"/>
<rect x="1817" y="250" width="13" height="13" fill="#ffb9bc"/>
<rect x="1829" y="250" width="13" height="13" fill="#ffb3b6"/>
<rect x="1841" y="250" width="13" height="13" fill="#ffaeb0"/>
<rect x="1853" y="250" width="13" height="13" fill="#ffa8ab"/>
<rect x="1577" y="262" width="13" height="13" fill="#9df6ff"/>
<rect x="1589" y="262" width="13" height="13" fill="#a5f6ff"/>
<rect x="1601" y="262" width="13" height="13" fill="#adf6ff"/>
<rect x="1613" y="262" width="13" height="13" fill="#b6f6ff"/>
<rect x="1625" y="262" width="13" height="13" fill="#bef6ff"/>
<rect x="1637" y="262" width="13" height="13" fill="#c7f6ff"/>
<rect x="1649" y="262" width="13" height="13" fill="#cff5ff"/>
<rect x="1661" y="262" width="13" height="13" fill="#d8f5ff"/>
<rect x="1673" y="262" width="13" height="13" fill="#e1f5ff"/>
<rect x="1685" y="262" width="13" height="13" fill="#eaf5ff"/>
<rect x="1697" y="262" width="13" height="13" fill="#f4f5ff"/>
<rect x="1709" y="262" width="13" height="13" fill="#fdf5ff"/>
<rect x="1721" y="262" width="13" height="13" fill="#ffeef8"/>
<rect x="1733" y="262" width="13" height="13" fill="#ffe5ef"/>
<rect x="1745" y="262" width="13" height="13" fill="#ffdde6"/>
<rect x="1757" y="262" width="13" height="13" fill="#ffd5de"/>
<rect x="1769" y="262" width="13" height="13" fill="#ffced7"/>
<rect x="1781" y="262" width="13" height="13" fill="#ffc7d0"/>
<rect x="1793" y="262" width="13" height="13" fill="#ffc1c9"/>
<rect x="1805" y="262" width="13" height="13" fill="#ffbac3"/>
<rect x="1817" y="262" width="13" height="13" fill="#ffb4bc"/>
<rect x="1829" y="262" width="13" height="13" fill="#ffafb7"/>
<rect x="1841" y="262" width="13" height="13" fill="#ffa9b1"/>
<rect x="1853" y="262" width="13" height="13" fill="#ffa4ac"/>
<rect x="1577" y="274" width="13" height="13" fill="#9defff"/>
<rect x="1589" y="274" width="13" height="13" fill="#a5efff"/>
<rect x="1601" y="274" width="13" height="13" fill="#aeefff"/>
<rect x="1613" y="274" width="13" height="13" fill="#b6efff"/>
<rect x="1625" y="274" width="13" height="13" fill="#beefff"/>
<rect x="1637" y="274" width="13" height="13" fill="#c7efff"/>
<rect x="1649" y="274" width="13" height="13" fill="#cfefff"/>
<rect x="1661" y="274" width="13" height="13" fill="#d8efff"/>
<rect x="1673" y="274" width="13" height="13" fill="#e1eeff"/>
<rect x="1685" y="274" width="13" height="13" fill="#eaeeff"/>
<rect x="1697" y="274" width="13" height="13" fill="#f3eeff"/>
<rect x="1709" y="274" width="13" height="13" fill="#fdeeff"/>
<rect x="1721" y="274" width="13" height="13" fill="#ffe7f8"/>
<rect x="1733" y="274" width="13" height="13" fill="#ffdfef"/>
<rect x="1745" y="274" width="13" height="13" fill="#ffd7e7"/>
<rect x="1757" y="274" width="13" height="13" fill="#ffd0df"/>
<rect x="1769" y="274" width="13" height="13" fill="#ffc9d8"/>
<rect x="1781" y="274" width="13" height="13" fill="#ffc2d1"/>
<rect x="1793" y="274" width="13" height="13" fill="#ffbcca"/>
<rect x="1805" y="274" width="13" height="13" fill="#ffb5c3"/>
<rect x="1817" y="274" width="13" height="13" fill="#ffb0bd"/>
<rect x="1829" y="274" width="13" height="13" fill="#ffaab8"/>
<rect x="1841" y="274" width="13" height="13" fill="#ffa5b2"/>
<rect x="1853" y="274" width="13" height="13" fill="#ffa0ad"/>
<rect x="1577" y="286" width="13" height="13" fill="#9ee9ff"/>
<rect x="1589" y="286" width="13" height="13" fill="#a6e9ff"/>
<rect x="1601" y="286" width="13" height="13" fill="#aee9ff"/>
<rect x="1613" y="286" width="13" height="13" fill="#b6e9ff"/>
<rect x="1625" y="286" width="13" height="13" fill="#bee8ff"/>
<rect x="1637" y="286" width="13" height="13" fill="#c7e8ff"/>
<rect x="1649" y="286" width="13" height="13" fill="#cfe8ff"/>
<rect x="1661" y="286" width="13" height="13" fill="#d8e8ff"/>
<rect x="1673" y="286" width="13" height="13" fill="#e1e8ff"/>
<rect x="1685" y="286" width="13" height="13" fill="#eae7ff"/>
<rect x="1697" y="286" width="13" height="13" fill="#f3e7ff"/>
<rect x="1709" y="286" width="13" height="13" fill="#fce7ff"/>
<rect x="1721" y="286" width="13" height="13" fill="#ffe1f9"/>
<rect x="1733" y="286" width="13" height="13" fill="#ffd9f0"/>
<rect x="1745" y="286" width="13" height="13" fill="#ffd1e8"/>
<rect x="1757" y="286" width="13" height="13" fill="#ffcae0"/>
<rect x="1769" y="286" width="13" height="13" fill="#ffc3d9"/>
<rect x="1781" y="286" width="13" height="13" fill="#ffbdd1"/>
<rect x="1793" y="286" width="13" height="13" fill="#ffb6cb"/>
<rect x="1805" y="286" width="13" height="13" fill="#ffb1c4"/>
<rect x="1817" y="286" width="13" height="13" fill="#ffabbe"/>
<rect x="1829" y="286" width="13" height="13" fill="#ffa5b8"/>
<rect x="1841" y="286" width="13" height="13" fill="#ffa0b3"/>
<rect x="1853" y="286" width="13" height="13" fill="#ff9bae"/>
<rect x="1577" y="298" width="13" height="13" fill="#9fe3ff"/>
<rect x="1589" y="298" width="13" height="13" fill="#a6e3ff"/>
<rect x="1601" y="298" width="13" height="13" fill="#aee2ff"/>
<rect x="1613" y="298" width="13" height="13" fill="#b6e2ff"/>
<rect x="1625" y="298" width="13" height="13" fill="#bfe2ff"/>
<rect x="1637" y="298" width="13" height="13" fill="#c7e2ff"/>
<rect x="1649" y="298" width="13" height="13" fill="#cfe1ff"/>
<rect x="1661" y="298" width="13" height="13" fill="#d8e1ff"/>
<rect x="1673" y="298" width="13" height="13" fill="#e1e1ff"/>
<rect x="1685" y="298" width="13" height="13" fill="#eae1ff"/>
<rect x="1697" y="298" width="13" height="13" fill="#f2e0ff"/>
<rect x="1709" y="298" width="13" height="13" fill="#fce0ff"/>
<rect x="1721" y="298" width="13" height="13" fill="#ffdbf9"/>
<rect x="1733" y="298" width="13" height="13" fill="#ffd3f1"/>
<rect x="1745" y="298" width="13" height="13" fill="#ffcce8"/>
<rect x="1757" y="298" width="13" height="13" fill="#ffc5e1"/>
<rect x="1769" y="298" width="13" height="13" fill="#ffbed9"/>
<rect x="1781" y="298" width="13" height="13" fill="#ffb8d2"/>
<rect x="1793" y="298" width="13" height="13" fill="#ffb2cc"/>
<rect x="1805" y="298" width="13" height="13" fill="#ffacc5"/>
<rect x="1817" y="298" width="13" height="13" fill="#ffa6bf"/>
<rect x="1829" y="298" width="13" height="13" fill="#ffa1b9"/>
<rect x="1841" y="298" width="13" height="13" fill="#ff9cb4"/>
<rect x="1853" y="298" width="13" height="13" fill="#ff97ae"/>
<rect x="1577" y="310" width="13" height="13" fill="#9fddff"/>
<rect x="1589" y="310" width="13" height="13" fill="#a7dcff"/>
<rect x="1601" y="310" width="13" height="13" fill="#afdcff"/>
<rect x="1613" y="310" width="13" height="13" fill="#b7dcff"/>
<rect x="1625" y="310" width="13" height="13" fill="#bfdcff"/>
<rect x="1637" y="310" width="13" height="13" fill="#c7dbff"/>
<rect x="1649" y="310" width="13" height="13" fill="#cfdbff"/>
<rect x="1661" y="310" width="13" height="13" fill="#d8dbff"/>
<rect x="1673" y="310" width="13" height="13" fill="#e1dbff"/>
<rect x="1685" y="310" width="13" height="13" fill="#e9daff"/>
<rect x="1697" y="310" width="13" height="13" fill="#f2daff"/>
<rect x="1709" y="310" width="13" height="13" fill="#fbdaff"/>
<rect x="1721" y="310" width="13" height="13" fill="#ffd5fa"/>
<rect x="1733" y="310" width="13" height="13" fill="#ffcdf1"/>
<rect x="1745" y="310" width="13" height="13" fill="#ffc6e9"/>
<rect x="1757" y="310" width="13" height="13" fill="#ffbfe1"/>
<rect x="1769" y="310" width="13" height="13" fill="#ffb9da"/>
<rect x="1781" y="310" width="13" height="13" fill="#ffb3d3"/>
<rect x="1793" y="310" width="13" height="13" fill="#ffadcc"/>
<rect x="1805" y="310" width="13" height="13" fill="#ffa7c6"/>
<rect x="1817" y="310" width="13" height="13" fill="#ffa2c0"/>
<rect x="1829" y="310" width="13" height="13" fill="#ff9dba"/>
<rect x="1841" y="310" width="13" height="13" fill="#ff98b5"/>
<rect x="1853" y="310" width="13" height="13" fill="#ff93af"/>
<rect x="1577" y="322" width="13" height="13" fill="#a0d7ff"/>
<rect x="1589" y="322" width="13" height="13" fill="#a7d6ff"/>
<rect x="1601" y="322" width="13" height="13" fill="#afd6ff"/>
<rect x="1613" y="322" width="13" height="13" fill="#b7d6ff"/>
<rect x="1625" y="322" width="13" height="13" fill="#bfd5ff"/>
<rect x="1637" y="322" width="13" height="13" fill="#c7d5ff"/>
<rect x="1649" y="322" width="13" height="13" fill="#cfd5ff"/>
<rect x="1661" y="322" width="13" height="13" fill="#d8d5ff"/>
<rect x="1673" y="322" width="13" height="13" fill="#e0d4ff"/>
<rect x="1685" y="322" width="13" height="13" fill="#e9d4ff"/>
<rect x="1697" y="322" width="13" height="13" fill="#f2d4ff"/>
<rect x="1709" y="322" width="13" height="13" fill="#fbd3ff"/>
<rect x="1721" y="322" width="13" height="13" fill="#ffcffa"/>
<rect x="1733" y="322" width="13" height="13" fill="#ffc8f2"/>
<rect x="1745" y="322" width="13" height="13" fill="#ffc1ea"/>
<rect x="1757" y="322" width="13" height="13" fill="#ffbae2"/>
<rect x="1769" y="322" width="13" height="13" fill="#ffb4db"/>
<rect x="1781" y="322" width="13" height="13" fill="#ffaed4"/>
<rect x="1793" y="322" width="13" height="13" fill="#ffa8cd"/>
<rect x="1805" y="322" width="13" height="13" fill="#ffa2c7"/>
<rect x="1817" y="322" width="13" height="13" fill="#ff9dc1"/>
<rect x="1829" y="322" width="13" height="13" fill="#ff98bb"/>
<rect x="1841" y="322" width="13" height="13" fill="#ff93b6"/>
<rect x="1853" y="322" width="13" height="13" fill="#ff8fb0"/>
<rect x="1577" y="334" width="13" height="13" fill="#a0d1ff"/>
<rect x="1589" y="334" width="13" height="13" fill="#a8d0ff"/>
<rect x="1601" y="334" width="13" height="13" fill="#afd0ff"/>
<rect x="1613" y="334" width="13" height="13" fill="#b7d0ff"/>
<rect x="1625" y="334" width="13" height="13" fill="#bfcfff"/>
<rect x="1637" y="334" width="13" height="13" fill="#c7cfff"/>
<rect x="1649" y="334" width="13" height="13" fill="#d0cfff"/>
<rect x="1661" y="334" width="13" height="13" fill="#d8ceff"/>
<rect x="1673" y="334" width="13" height="13" fill="#e0ceff"/>
<rect x="1685" y="334" width="13" height="13" fill="#e9ceff"/>
<rect x="1697" y="334" width="13" height="13" fill="#f1cdff"/>
<rect x="1709" y="334" width="13" height="13" fill="#facdff"/>
<rect x="1721" y="334" width="13" height="13" fill="#ffc9fb"/>
<rect x="1733" y="334" width="13" height="13" fill="#ffc2f2"/>
<rect x="1745" y="334" width="13" height="13" fill="#ffbbea"/>
<rect x="1757" y="334" width="13" height="13" fill="#ffb5e3"/>
<rect x="1769" y="334" width="13" height="13" fill="#ffafdc"/>
<rect x="1781" y="334" width="13" height="13" fill="#ffa9d5"/>
<rect x="1793" y="334" width="13" height="13" fill="#ffa3ce"/>
<rect x="1805" y="334" width="13" height="13" fill="#ff9ec8"/>
<rect x="1817" y="334" width="13" height="13" fill="#ff99c2"/>
<rect x="1829" y="334" width="13" height="13" fill="#ff94bc"/>
<rect x="1841" y="334" width="13" height="13" fill="#ff8fb7"/>
<rect x="1853" y="334" width="13" height="13" fill="#ff8bb1"/>
<rect x="1577" y="346" width="13" height="13" fill="#a1cbff"/>
<rect x="1589" y="346" width="13" height="13" fill="#a8cbff"/>
<rect x="1601" y="346" width="13" height="13" fill="#b0caff"/>
<rect x="1613" y="346" width="13" height="13" fill="#b8caff"/>
<rect x="1625" y="346" width="13" height="13" fill="#bfcaff"/>
<rect x="1637" y="346" width="13" height="13" fill="#c7c9ff"/>
<rect x="1649" y="346" width="13" height="13" fill="#d0c9ff"/>
<rect x="1661" y="346" width="13" height="13" fill="#d8c8ff"/>
<rect x="1673" y="346" width="13" height="13" fill="#e0c8ff"/>
<rect x="1685" y="346" width="13" height="13" fill="#e9c7ff"/>
<rect x="1697" y="346" width="13" height="13" fill="#f1c7ff"/>
<rect x="1709" y="346" width="13" height="13" fill="#fac7ff"/>
<rect x="1721" y="346" width="13" height="13" fill="#ffc3fb"/>
<rect x="1733" y="346" width="13" height="13" fill="#ffbcf3"/>
<rect x="1745" y="346" width="13" height="13" fill="#ffb6eb"/>
<rect x="1757" y="346" width="13" height="13" fill="#ffb0e3"/>
<rect x="1769" y="346" width="13" height="13" fill="#ffaadc"/>
<rect x="1781" y="346" width="13" height="13" fill="#ffa4d5"/>
<rect x="1793" y="346" width="13" height="13" fill="#ff9fcf"/>
<rect x="1805" y="346" width="13" height="13" fill="#ff99c9"/>
<rect x="1817" y="346" width="13" height="13" fill="#ff94c3"/>
<rect x="1829" y="346" width="13" height="13" fill="#ff90bd"/>
<rect x="1841" y="346" width="13" height="13" fill="#ff8bb7"/>
<rect x="1853" y="346" width="13" height="13" fill="#ff87b2"/>
<rect x="1577" y="358" width="13" height="13" fill="#a1c5ff"/>
<rect x="1589" y="358" width="13" height="13" fill="#a9c5ff"/>
<rect x="1601" y="358" width="13" height="13" fill="#b0c5ff"/>
<rect x="1613" y="358" width="13" height="13" fill="#b8c4ff"/>
<rect x="1625" y="358" width="13" height="13" fill="#c0c4ff"/>
<rect x="1637" y="358" width="13" height="13" fill="#c8c3ff"/>
<rect x="1649" y="358" width="13" height="13" fill="#d0c3ff"/>
<rect x="1661" y="358" width="13" height="13" fill="#d8c2ff"/>
<rect x="1673" y="358" width="13" height="13" fill="#e0c2ff"/>
<rect x="1685" y="358" width="13" height="13" fill="#e8c2ff"/>
<rect x="1697" y="358" width="13" height="13" fill="#f1c1ff"/>
<rect x="1709" y="358" width="13" height="13" fill="#f9c1ff"/>
<rect x="1721" y="358" width="13" height="13" fill="#ffbefc"/>
<rect x="1733" y="358" width="13" height="13" fill="#ffb7f4"/>
<rect x="1745" y="358" width="13" height="13" fill="#ffb1ec"/>
<rect x="1757" y="358" width="13" height="13" fill="#ffabe4"/>
<rect x="1769" y="358" width="13" height="13" fill="#ffa5dd"/>
<rect x="1781" y="358" width="13" height="13" fill="#ff9fd6"/>
<rect x="1793" y="358" width="13" height="13" fill="#ff9ad0"/>
<rect x="1805" y="358" width="13" height="13" fill="#ff95c9"/>
<rect x="1817" y="358" width="13" height="13" fill="#ff90c3"/>
<rect x="1829" y="358" width="13" height="13" fill="#ff8cbe"/>
<rect x="1841" y="358" width="13" height="13" fill="#ff87b8"/>
<rect x="1853" y="358" width="13" height="13" fill="#ff83b3"/>
<rect x="1577" y="370" width="13" height="13" fill="#a2c0ff"/>
<rect x="1589" y="370" width="13" height="13" fill="#a9bfff"/>
<rect x="1601" y="370" width="13" height="13" fill="#b0bfff"/>
<rect x="1613" y="370" width="13" height="13" fill="#b8beff"/>
<rect x="1625" y="370" width="13" height="13" fill="#c0beff"/>
<rect x="1637" y="370" width="13" height="13" fill="#c8beff"/>
<rect x="1649" y="370" width="13" height="13" fill="#d0bdff"/>
<rect x="1661" y="370" width="13" height="13" fill="#d8bdff"/>
<rect x="1673" y="370" width="13" height="13" fill="#e0bcff"/>
<rect x="1685" y="370" width="13" height="13" fill="#e8bcff"/>
<rect x="1697" y="370" width="13" height="13" fill="#f0bbff"/>
<rect x="1709" y="370" width="13" height="13" fill="#f9bbff"/>
<rect x="1721" y="370" width="13" height="13" fill="#ffb8fc"/>
<rect x="1733" y="370" width="13" height="13" fill="#ffb2f4"/>
<rect x="1745" y="370" width="13" height="13" fill="#ffacec"/>
<rect x="1757" y="370" width="13" height="13" fill="#ffa6e5"/>
<rect x="1769" y="370" width="13" height="13" fill="#ffa0de"/>
<rect x="1781" y="370" width="13" height="13" fill="#ff9bd7"/>
<rect x="1793" y="370" width="13" height="13" fill="#ff95d0"/>
<rect x="1805" y="370" width="13" height="13" fill="#ff91ca"/>
<rect x="1817" y="370" width="13" height="13" fill="#ff8cc4"/>
<rect x="1829" y="370" width="13" height="13" fill="#ff87bf"/>
<rect x="1841" y="370" width="13" height="13" fill="#ff83b9"/>
<rect x="1853" y="370" width="13" height="13" fill="#ff7fb4"/>
</g></g>
<rect x="1601" y="154" width="233" height="197" fill="none" stroke="#858585" stroke-width="2.2"/>
<rect x="1709.1" y="244.3" width="14.4" height="14.4" fill="none" stroke="#000" stroke-width="1.5"/>
<ellipse cx="1630.2" cy="300.7" rx="4.6" ry="4.2" fill="#fff" stroke="#000" stroke-width="1.2"/>
<ellipse cx="1628" cy="300.7" rx="4.6" ry="4.2" fill="#fff" stroke="#000" stroke-width="1.2"/>
<rect x="1668.9" y="457.4" width="14.2" height="14.2" fill="none" stroke="#fff" stroke-opacity=".88" stroke-width="1.7"/>
<rect x="1389.8" y="289.3" width="14.2" height="14.2" fill="none" stroke="#fff" stroke-opacity=".88" stroke-width="1.7"/>
<rect x="1266.7" y="625.6" width="14.2" height="14.2" fill="none" stroke="#fff" stroke-opacity=".88" stroke-width="1.7"/>
<rect x="1327.9" y="458.3" width="14.2" height="14.2" fill="none" stroke="#fff" stroke-opacity=".88" stroke-width="1.7"/>
<rect x="1407.0" y="566.9" width="14.2" height="14.2" fill="none" stroke="#fff" stroke-opacity=".88" stroke-width="1.7"/>
<rect x="1487.7" y="348.2" width="14.2" height="14.2" fill="none" stroke="#fff" stroke-opacity=".88" stroke-width="1.7"/>
<rect x="1400.3" y="458.0" width="14.1" height="14.4" fill="#fff" fill-opacity=".25" stroke="#0a0a0a" stroke-width="1.7"/>
<rect x="1667.7" y="456.2" width="16.600" height="16.600" fill="none" stroke="#500" stroke-opacity=".55" stroke-width="1"/>
<circle cx="1623.2" cy="444.0" r="3.9" fill="#b41818" stroke="#10141c" stroke-width="1.4"/>
<circle cx="1435.1" cy="319.7" r="3.9" fill="#18a018" stroke="#10141c" stroke-width="1.4"/>
<circle cx="1287.7" cy="601.9" r="3.9" fill="#1818a8" stroke="#10141c" stroke-width="1.4"/>
<circle cx="1352.6" cy="472.7" r="3.9" fill="#20b4a0" stroke="#10141c" stroke-width="1.4"/>
<circle cx="1390.6" cy="553.7" r="3.9" fill="#b0209c" stroke="#10141c" stroke-width="1.4"/>
<circle cx="1483.7" cy="350.9" r="3.9" fill="#a8a810" stroke="#10141c" stroke-width="1.4"/>
<circle cx="1392.0" cy="473.0" r="3.9" fill="#ffffff" stroke="#10141c" stroke-width="1.4"/>
</svg>
<div class="a" style="left:1144px;top:669.9px;width:7px;height:1.3px;background:#c4c4c4"></div>
<span class="t" style="left:1135.1px;top:664.1px;font-size:15.50px;transform:scaleX(0.963);color:#ddd;">0</span>
<div class="a" style="left:1150.3px;top:670.5px;width:1.3px;height:6.5px;background:#c4c4c4"></div>
<span class="t" style="left:1147.1px;top:680.4px;font-size:15.36px;transform:scaleX(0.971);color:#ddd;">0</span>
<div class="a" style="left:1144px;top:607.6px;width:7px;height:1.3px;background:#c4c4c4"></div>
<span class="t" style="left:1123.2px;top:601.8px;font-size:15.50px;transform:scaleX(0.937);color:#ddd;">0,1</span>
<div class="a" style="left:1232.4px;top:670.5px;width:1.3px;height:6.5px;background:#c4c4c4"></div>
<span class="t" style="left:1223.3px;top:680.4px;font-size:15.36px;transform:scaleX(0.946);color:#ddd;">0,1</span>
<div class="a" style="left:1144px;top:545.3px;width:7px;height:1.3px;background:#c4c4c4"></div>
<span class="t" style="left:1123.2px;top:539.5px;font-size:15.50px;transform:scaleX(0.937);color:#ddd;">0,2</span>
<div class="a" style="left:1314.5px;top:670.5px;width:1.3px;height:6.5px;background:#c4c4c4"></div>
<span class="t" style="left:1305.4px;top:680.4px;font-size:15.36px;transform:scaleX(0.946);color:#ddd;">0,2</span>
<div class="a" style="left:1144px;top:483.0px;width:7px;height:1.3px;background:#c4c4c4"></div>
<span class="t" style="left:1123.2px;top:477.2px;font-size:15.50px;transform:scaleX(0.937);color:#ddd;">0,3</span>
<div class="a" style="left:1396.6px;top:670.5px;width:1.3px;height:6.5px;background:#c4c4c4"></div>
<span class="t" style="left:1387.5px;top:680.4px;font-size:15.36px;transform:scaleX(0.946);color:#ddd;">0,3</span>
<div class="a" style="left:1144px;top:420.7px;width:7px;height:1.3px;background:#c4c4c4"></div>
<span class="t" style="left:1123.2px;top:414.9px;font-size:15.50px;transform:scaleX(0.937);color:#ddd;">0,4</span>
<div class="a" style="left:1478.8px;top:670.5px;width:1.3px;height:6.5px;background:#c4c4c4"></div>
<span class="t" style="left:1469.6px;top:680.4px;font-size:15.36px;transform:scaleX(0.946);color:#ddd;">0,4</span>
<div class="a" style="left:1144px;top:358.4px;width:7px;height:1.3px;background:#c4c4c4"></div>
<span class="t" style="left:1123.2px;top:352.6px;font-size:15.50px;transform:scaleX(0.937);color:#ddd;">0,5</span>
<div class="a" style="left:1560.8px;top:670.5px;width:1.3px;height:6.5px;background:#c4c4c4"></div>
<span class="t" style="left:1551.7px;top:680.4px;font-size:15.36px;transform:scaleX(0.946);color:#ddd;">0,5</span>
<div class="a" style="left:1144px;top:296.1px;width:7px;height:1.3px;background:#c4c4c4"></div>
<span class="t" style="left:1123.2px;top:290.3px;font-size:15.50px;transform:scaleX(0.937);color:#ddd;">0,6</span>
<div class="a" style="left:1642.9px;top:670.5px;width:1.3px;height:6.5px;background:#c4c4c4"></div>
<span class="t" style="left:1633.8px;top:680.4px;font-size:15.36px;transform:scaleX(0.946);color:#ddd;">0,6</span>
<div class="a" style="left:1144px;top:233.8px;width:7px;height:1.3px;background:#c4c4c4"></div>
<span class="t" style="left:1123.2px;top:228.0px;font-size:15.50px;transform:scaleX(0.937);color:#ddd;">0,7</span>
<div class="a" style="left:1725.0px;top:670.5px;width:1.3px;height:6.5px;background:#c4c4c4"></div>
<span class="t" style="left:1715.9px;top:680.4px;font-size:15.36px;transform:scaleX(0.946);color:#ddd;">0,7</span>
<div class="a" style="left:1144px;top:171.5px;width:7px;height:1.3px;background:#c4c4c4"></div>
<span class="t" style="left:1123.2px;top:165.8px;font-size:15.50px;transform:scaleX(0.937);color:#ddd;">0,8</span>
<div class="a" style="left:1807.2px;top:670.5px;width:1.3px;height:6.5px;background:#c4c4c4"></div>
<span class="t" style="left:1798.0px;top:680.4px;font-size:15.36px;transform:scaleX(0.946);color:#ddd;">0,8</span>
<div class="a" style="left:1567px;top:636px;width:273px;height:32px;background:#303030"></div>
<span class="t" style="left:1571.0px;top:641.4px;font-size:21.79px;transform:scaleX(0.956);color:#fff;">Gamut Coverage:  63,1%</span>
<div class="a" style="left:0;top:969px;width:1920px;height:70px;background:linear-gradient(#4a4a4a,#3c3c3c 40%,#2a2a2a)"></div>
<div class="a" style="left:1.8px;top:968.6px;width:169px;height:69px;box-sizing:border-box;border-radius:7px 7px 5px 5px;border:1px solid #b0b0b0;border-bottom-color:#6a6a6a;border-left-color:#9a9a9a;border-right-color:#8a8a8a;background:linear-gradient(#a8a8a8,#8e8e8e 40%,#6a6a6a 80%,#5a5a5a)"></div>
<div class="a" style="left:7.4px;top:974.8px;width:158px;height:41px;box-sizing:border-box;border-radius:5px;background:#c3c3c3;border:1px solid rgba(0,0,0,.28);box-shadow:0 1px 0 rgba(255,255,255,.35)"></div>
<span class="t" style="left:69.5px;top:1022.7px;font-size:11.73px;transform:scaleX(1.033);color:#333;font-weight:bold;">White</span>
<div class="a" style="left:173.4px;top:968.6px;width:169px;height:69px;box-sizing:border-box;border-radius:7px 7px 5px 5px;border:1px solid #b0b0b0;border-bottom-color:#6a6a6a;border-left-color:#9a9a9a;border-right-color:#8a8a8a;background:linear-gradient(#a8a8a8,#8e8e8e 40%,#6a6a6a 80%,#5a5a5a)"></div>
<div class="a" style="left:179.0px;top:974.8px;width:158px;height:41px;box-sizing:border-box;border-radius:5px;background:#c40000;border:1px solid rgba(0,0,0,.28);box-shadow:0 1px 0 rgba(255,255,255,.35)"></div>
<span class="t" style="left:247.1px;top:1022.7px;font-size:11.73px;transform:scaleX(0.947);color:#333;font-weight:bold;">Red</span>
<div class="a" style="left:345.0px;top:968.6px;width:169px;height:69px;box-sizing:border-box;border-radius:7px 7px 5px 5px;border:1px solid #b0b0b0;border-bottom-color:#6a6a6a;border-left-color:#9a9a9a;border-right-color:#8a8a8a;background:linear-gradient(#a8a8a8,#8e8e8e 40%,#6a6a6a 80%,#5a5a5a)"></div>
<div class="a" style="left:350.6px;top:974.8px;width:158px;height:41px;box-sizing:border-box;border-radius:5px;background:#00c400;border:1px solid rgba(0,0,0,.28);box-shadow:0 1px 0 rgba(255,255,255,.35)"></div>
<span class="t" style="left:412.2px;top:1022.7px;font-size:11.73px;transform:scaleX(1.003);color:#333;font-weight:bold;">Green</span>
<div class="a" style="left:516.6px;top:968.6px;width:169px;height:69px;box-sizing:border-box;border-radius:7px 7px 5px 5px;border:1px solid #b0b0b0;border-bottom-color:#6a6a6a;border-left-color:#9a9a9a;border-right-color:#8a8a8a;background:linear-gradient(#a8a8a8,#8e8e8e 40%,#6a6a6a 80%,#5a5a5a)"></div>
<div class="a" style="left:522.2px;top:974.8px;width:158px;height:41px;box-sizing:border-box;border-radius:5px;background:#0000c4;border:1px solid rgba(0,0,0,.28);box-shadow:0 1px 0 rgba(255,255,255,.35)"></div>
<span class="t" style="left:588.5px;top:1022.7px;font-size:11.73px;transform:scaleX(0.964);color:#333;font-weight:bold;">Blue</span>
<div class="a" style="left:688.2px;top:968.6px;width:169px;height:69px;box-sizing:border-box;border-radius:7px 7px 5px 5px;border:1px solid #b0b0b0;border-bottom-color:#6a6a6a;border-left-color:#9a9a9a;border-right-color:#8a8a8a;background:linear-gradient(#a8a8a8,#8e8e8e 40%,#6a6a6a 80%,#5a5a5a)"></div>
<div class="a" style="left:693.8px;top:974.8px;width:158px;height:41px;box-sizing:border-box;border-radius:5px;background:#00c0c0;border:1px solid rgba(0,0,0,.28);box-shadow:0 1px 0 rgba(255,255,255,.35)"></div>
<span class="t" style="left:758.9px;top:1022.7px;font-size:11.73px;transform:scaleX(0.941);color:#333;font-weight:bold;">Cyan</span>
<div class="a" style="left:859.8px;top:968.6px;width:169px;height:69px;box-sizing:border-box;border-radius:7px 7px 5px 5px;border:1px solid #b0b0b0;border-bottom-color:#6a6a6a;border-left-color:#9a9a9a;border-right-color:#8a8a8a;background:linear-gradient(#a8a8a8,#8e8e8e 40%,#6a6a6a 80%,#5a5a5a)"></div>
<div class="a" style="left:865.4px;top:974.8px;width:158px;height:41px;box-sizing:border-box;border-radius:5px;background:#c000c0;border:1px solid rgba(0,0,0,.28);box-shadow:0 1px 0 rgba(255,255,255,.35)"></div>
<span class="t" style="left:919.2px;top:1022.7px;font-size:11.73px;transform:scaleX(1.040);color:#333;font-weight:bold;">Magenta</span>
<div class="a" style="left:1031.4px;top:968.6px;width:169px;height:69px;box-sizing:border-box;border-radius:7px 7px 5px 5px;border:1px solid #b0b0b0;border-bottom-color:#6a6a6a;border-left-color:#9a9a9a;border-right-color:#8a8a8a;background:linear-gradient(#a8a8a8,#8e8e8e 40%,#6a6a6a 80%,#5a5a5a)"></div>
<div class="a" style="left:1037.0px;top:974.8px;width:158px;height:41px;box-sizing:border-box;border-radius:5px;background:#c4c400;border:1px solid rgba(0,0,0,.28);box-shadow:0 1px 0 rgba(255,255,255,.35)"></div>
<span class="t" style="left:1097.1px;top:1022.7px;font-size:11.73px;transform:scaleX(1.013);color:#333;font-weight:bold;">Yellow</span>
<div class="a" style="left:1203.0px;top:968.5px;width:168.6px;height:68.5px;border-radius:7px 7px 5px 5px;background:linear-gradient(#1c1c1c,#282828 55%,#3a3a3a)"></div>
<div class="a" style="left:1209.4px;top:974.5px;width:158px;height:41px;border-radius:6px;background:#fff;box-shadow:inset 0 1px 1px #aaa"></div>
<span class="t" style="left:1270.7px;top:1022.7px;font-size:11.73px;transform:scaleX(1.077);color:#fff;font-weight:bold;">100W</span>
<div class="a" style="left:1563.4px;top:969px;width:53.6px;height:21px;box-sizing:border-box;border-radius:7px 7px 0 0;border:1px solid #aaa;border-bottom:1px solid #5a5a5a;background:linear-gradient(#a0a0a0,#868686)"></div>
<div class="a" style="left:1581px;top:970px;width:19px;height:19px;border-radius:50%;background:radial-gradient(circle at 50% 30%,#787878,#999)"></div>
<svg style="left:1585px;top:976px" width="12" height="7"><path d="M0.5 6.5h11l-5.5-6z" fill="#2a2a2a"/></svg>
<div class="a" style="left:1563.4px;top:990px;width:53.6px;height:50px;box-sizing:border-box;border-radius:0 0 6px 6px;border:1px solid #999;border-top:1px solid #b4b4b4;background:linear-gradient(#909090,#7a7a7a 50%,#686868)"></div>
<div class="a" style="left:1573.5px;top:997px;width:34px;height:33.5px;box-sizing:border-box;border:2.5px solid #2a2a2a;border-radius:6px;background:linear-gradient(#b4b4b4,#a0a0a0 49%,#8c8c8c 51%,#999)"></div>
<div class="a" style="left:1582.5px;top:1006.5px;width:16.5px;height:15.5px;background:linear-gradient(#1c1c1c,#000 50%,#000)"></div>
<div class="a" style="left:1619.2px;top:969px;width:51.5px;height:34px;box-sizing:border-box;border-radius:6px 0 0 0;border-left:1px solid #b8b8b8;border-top:1px solid #b0b0b0;border-right:1px solid #5c5c5c;background:linear-gradient(#a4a4a4,#8e8e8e 50%,#707070)"></div>
<div class="a" style="left:1633.5px;top:974.5px;width:22px;height:22px;border-radius:50%;background:radial-gradient(circle at 50% 30%,#6e6e6e,#8c8c8c 75%,#9a9a9a)"></div>
<div class="a" style="left:1670.7px;top:969px;width:51.1px;height:34px;box-sizing:border-box;border-radius:0;border-left:1px solid #b8b8b8;border-top:1px solid #b0b0b0;border-right:1px solid #5c5c5c;background:linear-gradient(#a4a4a4,#8e8e8e 50%,#707070)"></div>
<div class="a" style="left:1684.8px;top:974.5px;width:22px;height:22px;border-radius:50%;background:radial-gradient(circle at 50% 30%,#6e6e6e,#8c8c8c 75%,#9a9a9a)"></div>
<div class="a" style="left:1721.8px;top:969px;width:50.9px;height:34px;box-sizing:border-box;border-radius:0;border-left:1px solid #b8b8b8;border-top:1px solid #b0b0b0;border-right:1px solid #5c5c5c;background:linear-gradient(#a4a4a4,#8e8e8e 50%,#707070)"></div>
<div class="a" style="left:1735.8px;top:974.5px;width:22px;height:22px;border-radius:50%;background:radial-gradient(circle at 50% 30%,#6e6e6e,#8c8c8c 75%,#9a9a9a)"></div>
<div class="a" style="left:1772.7px;top:969px;width:50.9px;height:34px;box-sizing:border-box;border-radius:0;border-left:1px solid #b8b8b8;border-top:1px solid #b0b0b0;border-right:1px solid #5c5c5c;background:linear-gradient(#a4a4a4,#8e8e8e 50%,#707070)"></div>
<div class="a" style="left:1786.7px;top:974.5px;width:22px;height:22px;border-radius:50%;background:radial-gradient(circle at 50% 30%,#6e6e6e,#8c8c8c 75%,#9a9a9a)"></div>
<div class="a" style="left:1823.6px;top:969px;width:51.1px;height:34px;box-sizing:border-box;border-radius:0 6px 0 0;border-left:1px solid #b8b8b8;border-top:1px solid #b0b0b0;border-right:1px solid #5c5c5c;background:linear-gradient(#a4a4a4,#8e8e8e 50%,#707070)"></div>
<div class="a" style="left:1837.7px;top:974.5px;width:22px;height:22px;border-radius:50%;background:radial-gradient(circle at 50% 30%,#6e6e6e,#8c8c8c 75%,#9a9a9a)"></div>
<svg style="left:1633.45px;top:974.5px" width="22" height="22" viewBox="-11 -11 22 22"><rect x="-4" y="-4" width="8.5" height="8.5" fill="#2c2c2c"/></svg>
<svg style="left:1684.75px;top:974.5px" width="22" height="22" viewBox="-11 -11 22 22"><path d="M-3.5 -5.5v11l9-5.5z" fill="#2c2c2c"/></svg>
<svg style="left:1735.75px;top:974.5px" width="22" height="22" viewBox="-11 -11 22 22" fill="none" stroke="#2c2c2c" stroke-width="1.6"><path d="M-3.6 -5h-2.2v10h2.2M3.6 -5h2.2v10h-2.2"/><path d="M-2.6 0h1.4M1.2 0h1.4" stroke-width="1.4"/></svg>
<svg style="left:1786.65px;top:974.5px" width="22" height="22" viewBox="-11 -11 22 22" fill="none" stroke="#2c2c2c" stroke-width="1.7"><path d="M0 0c-1.6 -2.4 -3 -3.2 -4.4 -3.2a3.2 3.2 0 0 0 0 6.4c1.4 0 2.8 -0.8 4.4 -3.2c1.6 -2.4 3 -3.2 4.4 -3.2a3.2 3.2 0 0 1 0 6.4c-1.400 0 -2.800 -0.800 -4.400 -3.200z"/></svg>
<svg style="left:1837.65px;top:974.5px" width="22" height="22" viewBox="-11 -11 22 22" fill="none" stroke="#2c2c2c" stroke-width="2.2"><path d="M-5.4 -1.2a5.6 5.6 0 0 1 9.2 -3.2"/><path d="M5.4 1.2a5.6 5.6 0 0 1 -9.2 3.2"/><path d="M6.2 -6.6v4.4h-4.400z" fill="#2c2c2c" stroke="none"/><path d="M-6.2 6.6v-4.4h4.4z" fill="#2c2c2c" stroke="none"/></svg>
<div class="a" style="left:1619.2px;top:1004.5px;width:153.5px;height:36px;box-sizing:border-box;border-radius:6px 0 0 0;border-left:1px solid #b8b8b8;border-top:1px solid #c4c4c4;border-right:1px solid #5c5c5c;background:linear-gradient(#a8a8a8,#909090 50%,#6e6e6e)"></div>
<div class="a" style="left:1772.7px;top:1004.5px;width:150px;height:36px;box-sizing:border-box;border-left:1px solid #b8b8b8;border-top:1px solid #c4c4c4;background:linear-gradient(#a8a8a8,#909090 50%,#6e6e6e)"></div>
<div class="a" style="left:1643px;top:1010.4px;width:22px;height:22px;border-radius:50%;background:radial-gradient(circle at 50% 30%,#727272,#8e8e8e 75%,#9c9c9c)"></div>
<div class="a" style="left:1883.5px;top:1010.4px;width:22px;height:22px;border-radius:50%;background:radial-gradient(circle at 50% 30%,#727272,#8e8e8e 75%,#9c9c9c)"></div>
<svg style="left:1643px;top:1010.4px" width="22" height="22" viewBox="-11 -11 22 22" fill="none" stroke="#2c2c2c" stroke-width="1.5"><path d="M-1.2 -4l-3.6 4l3.600 4M3.6 -4l-3.6 4l3.600 4"/></svg>
<svg style="left:1883.5px;top:1010.4px" width="22" height="22" viewBox="-11 -11 22 22" fill="none" stroke="#2c2c2c" stroke-width="1.5"><path d="M1.2 -4l3.6 4l-3.600 4M-3.6 -4l3.6 4l-3.600 4"/></svg>
<span class="t" style="left:1684.0px;top:1009.5px;font-size:24.02px;transform:scaleX(1.049);color:#333;text-shadow:0 1px 0 rgba(255,255,255,.35);-webkit-text-stroke:0.5px #333;">Back</span>
<span class="t" style="left:1805.0px;top:1009.5px;font-size:24.02px;transform:scaleX(1.174);color:#333;text-shadow:0 1px 0 rgba(255,255,255,.35);-webkit-text-stroke:0.5px #333;">Next</span>
<svg style="left:1883.5px;top:969.5px" width="32" height="32" viewBox="-16 -16 32 32"><g fill="#f01414"><rect x="-3" y="-14.5" width="6" height="14.5" rx="1.2" transform="rotate(0)"/><rect x="-3" y="-14.5" width="6" height="14.5" rx="1.2" transform="rotate(60)"/><rect x="-3" y="-14.5" width="6" height="14.5" rx="1.2" transform="rotate(120)"/><rect x="-3" y="-14.5" width="6" height="14.5" rx="1.2" transform="rotate(180)"/><rect x="-3" y="-14.5" width="6" height="14.5" rx="1.2" transform="rotate(240)"/><rect x="-3" y="-14.5" width="6" height="14.5" rx="1.2" transform="rotate(300)"/></g></svg>
</body></html>
